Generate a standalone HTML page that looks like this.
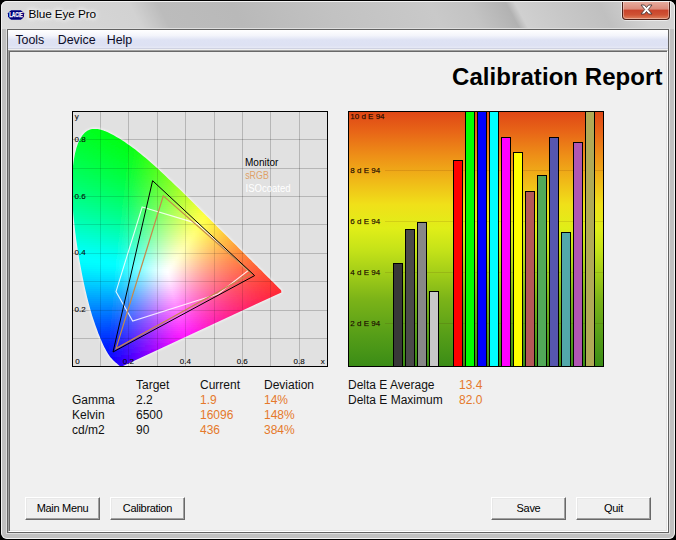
<!DOCTYPE html>
<html lang="en"><head><meta charset="utf-8"><title>Blue Eye Pro</title>
<style>
html,body{margin:0;padding:0;background:#000;}
body{width:676px;height:540px;position:relative;overflow:hidden;font-family:"Liberation Sans",sans-serif;}
.abs{position:absolute;}
#win{position:absolute;left:1px;top:1px;width:674px;height:538px;border-radius:6px;background:#c0c0c0;overflow:hidden;}
#org{position:absolute;left:-1px;top:-1px;width:676px;height:540px;}
#edge{position:absolute;left:1px;top:1px;width:672px;height:536px;border:1px solid #f2f2f2;border-radius:6px;}
#title{position:absolute;left:1px;top:1px;width:674px;height:28px;
 background:linear-gradient(62deg,#dcdcdc 0px,#d6d6d6 70px,#d2d2d2 125px,#bcbcbc 150px,#b9b9b9 215px,#c2c2c2 300px,#c9c9c9 390px,#c3c3c3 425px,#b2b2b2 458px,#d0d0d0 466px,#c8c8c8 500px,#c0c0c0 540px,#d2d2d2 575px,#d4d4d4 611px);}
#ttext{position:absolute;left:28.4px;top:7px;font-size:11.8px;letter-spacing:-.1px;color:#000;line-height:14px;white-space:nowrap;text-shadow:0 0 5px #fff,0 0 5px #fff,0 0 8px #fff;}
#icon{position:absolute;left:7px;top:9px;width:18px;height:12px;}
#close{position:absolute;left:622px;top:0;width:46px;height:19px;border:1px solid #4d2018;border-top:none;border-radius:0 0 4px 4px;
 background:linear-gradient(#e9b3a6 0,#db8b7b 48%,#c9432b 53%,#cf5234 78%,#de8260 100%);box-shadow:0 0 0 1px rgba(255,255,255,.55),inset 0 0 0 1px rgba(255,255,255,.35);}
#client{position:absolute;left:7px;top:29px;width:660px;height:502px;border:1px solid #626262;background:#f0f0f0;}
#fl{position:absolute;left:6px;top:28px;width:662px;height:504px;border:1px solid #dedede;}
#menu{position:absolute;left:0;top:0;width:660px;height:18px;background:linear-gradient(#ffffff 0,#f4f5fb 30%,#dfe3f4 55%,#dde1f3 85%,#e6e8f5 100%);border-bottom:1px solid #cfd2e2;}
#menu span{position:absolute;top:2.8px;font-size:12.4px;line-height:15px;color:#0c0c28;}
#sunk{position:absolute;left:0;top:20px;width:658px;height:480px;border:1px solid;border-color:#a0a0a0 #fff #fff #a0a0a0;box-shadow:inset 1px 1px 0 #696969,inset -1px -1px 0 #e3e3e3;}
h1{position:absolute;margin:0;right:13.5px;top:63px;font-size:24px;line-height:28px;font-weight:bold;color:#000;white-space:nowrap;letter-spacing:.06px;}
.t{position:absolute;font-size:12px;line-height:15px;color:#111;white-space:nowrap;}
.o{color:#e5792b;}
.btn{position:absolute;top:497px;width:71px;height:19px;border:1px solid;border-color:#fff #696969 #696969 #fff;box-shadow:inset -1px -1px 0 #a0a0a0,inset 1px 1px 0 #e8e8e8;background:#f0f0f0;font-size:11px;line-height:19px;text-align:center;color:#000;letter-spacing:-.3px;padding:1px;}
#gamut{position:absolute;left:72px;top:111px;}
#bars{position:absolute;left:348px;top:111px;}
</style></head><body>
<div id="win"><div id="org"><div id="title"></div><div id="fl"></div>
<svg id="icon" viewBox="0 0 18 12"><path d="M4.2 1.2h9.6l1.6 1.2 1.6 1.8v3.6l-1.6 1.8-1.6 1.2H4.2L2.6 9.6 1 7.800V4.2l1.600-1.800z" fill="#00007c"/><text x="9" y="8.100" text-anchor="middle" font-family="Liberation Sans, sans-serif" font-weight="bold" font-size="6.4" fill="#fff" stroke="#fff" stroke-width=".25" textLength="13.4" lengthAdjust="spacingAndGlyphs">LACIE</text></svg>
<div id="ttext">Blue Eye Pro</div>
<div id="close"><svg class="abs" style="left:17px;top:4px" width="13" height="11" viewBox="0 0 13 11"><path d="M1 1h3.400L6.500 3.500 8.600 1H12L8.300 5.500 12 10H8.600L6.500 7.500 4.400 10H1l3.700-4.500z" fill="#fff" stroke="#4a3a3a" stroke-width=".9" stroke-linejoin="round"/></svg></div>
<div id="client"><div id="menu"><span style="left:7.4px">Tools</span><span style="left:49.7px">Device</span><span style="left:98.7px">Help</span></div>
<div id="sunk"></div></div>
<div id="edge"></div></div></div>
<h1>Calibration Report</h1>
<svg id="gamut" width="256" height="256" viewBox="0 0 256 256">
<defs>
<linearGradient id="gb" gradientUnits="userSpaceOnUse" x1="0" y1="0" x2="256" y2="0"/>
<linearGradient id="g0" href="#gb"><stop offset="0.05859" stop-color="#01ff1f"/><stop offset="0.07422" stop-color="#01ff1d"/><stop offset="0.08984" stop-color="#01ff1b"/><stop offset="0.1055" stop-color="#01ff19"/><stop offset="0.1211" stop-color="#01ff17"/><stop offset="0.125" stop-color="#01ff16"/></linearGradient>
<linearGradient id="g1" href="#gb"><stop offset="0.04688" stop-color="#01ff23"/><stop offset="0.0625" stop-color="#01ff21"/><stop offset="0.07812" stop-color="#01ff1f"/><stop offset="0.09375" stop-color="#01ff1c"/><stop offset="0.1094" stop-color="#01ff1a"/><stop offset="0.125" stop-color="#01ff18"/><stop offset="0.1406" stop-color="#01ff16"/><stop offset="0.1445" stop-color="#01ff15"/></linearGradient>
<linearGradient id="g2" href="#gb"><stop offset="0.03516" stop-color="#01ff27"/><stop offset="0.05078" stop-color="#01ff25"/><stop offset="0.06641" stop-color="#01ff22"/><stop offset="0.08203" stop-color="#01ff20"/><stop offset="0.09766" stop-color="#01ff1e"/><stop offset="0.1133" stop-color="#01ff1c"/><stop offset="0.1289" stop-color="#01ff19"/><stop offset="0.1445" stop-color="#01ff17"/><stop offset="0.1602" stop-color="#01ff15"/><stop offset="0.1641" stop-color="#01ff14"/></linearGradient>
<linearGradient id="g3" href="#gb"><stop offset="0.03125" stop-color="#01ff29"/><stop offset="0.04688" stop-color="#01ff27"/><stop offset="0.0625" stop-color="#01ff25"/><stop offset="0.07812" stop-color="#01ff23"/><stop offset="0.09375" stop-color="#01ff20"/><stop offset="0.1094" stop-color="#01ff1e"/><stop offset="0.125" stop-color="#01ff1c"/><stop offset="0.1406" stop-color="#01ff19"/><stop offset="0.1562" stop-color="#01ff17"/><stop offset="0.1719" stop-color="#01ff15"/><stop offset="0.1758" stop-color="#01ff14"/></linearGradient>
<linearGradient id="g4" href="#gb"><stop offset="0.02734" stop-color="#01ff2c"/><stop offset="0.04297" stop-color="#01ff2a"/><stop offset="0.05859" stop-color="#01ff28"/><stop offset="0.07422" stop-color="#01ff25"/><stop offset="0.08984" stop-color="#01ff23"/><stop offset="0.1055" stop-color="#01ff21"/><stop offset="0.1211" stop-color="#01ff1e"/><stop offset="0.1367" stop-color="#01ff1c"/><stop offset="0.1523" stop-color="#01ff1a"/><stop offset="0.168" stop-color="#01ff17"/><stop offset="0.1836" stop-color="#01ff15"/><stop offset="0.1914" stop-color="#01ff14"/></linearGradient>
<linearGradient id="g5" href="#gb"><stop offset="0.02344" stop-color="#01ff2f"/><stop offset="0.03906" stop-color="#01ff2d"/><stop offset="0.05469" stop-color="#01ff2a"/><stop offset="0.07031" stop-color="#01ff28"/><stop offset="0.08594" stop-color="#01ff26"/><stop offset="0.1016" stop-color="#01ff23"/><stop offset="0.1172" stop-color="#01ff21"/><stop offset="0.1328" stop-color="#01ff1f"/><stop offset="0.1484" stop-color="#01ff1c"/><stop offset="0.1641" stop-color="#01ff1a"/><stop offset="0.1797" stop-color="#01ff18"/><stop offset="0.1953" stop-color="#01ff15"/><stop offset="0.2031" stop-color="#01ff14"/></linearGradient>
<linearGradient id="g6" href="#gb"><stop offset="0.01953" stop-color="#01ff32"/><stop offset="0.03516" stop-color="#01ff2f"/><stop offset="0.05078" stop-color="#01ff2d"/><stop offset="0.06641" stop-color="#01ff2b"/><stop offset="0.08203" stop-color="#01ff28"/><stop offset="0.09766" stop-color="#01ff26"/><stop offset="0.1133" stop-color="#01ff24"/><stop offset="0.1289" stop-color="#01ff21"/><stop offset="0.1445" stop-color="#01ff1f"/><stop offset="0.1602" stop-color="#01ff1d"/><stop offset="0.1758" stop-color="#01ff1a"/><stop offset="0.1914" stop-color="#01ff18"/><stop offset="0.207" stop-color="#01ff15"/><stop offset="0.2148" stop-color="#02ff14"/></linearGradient>
<linearGradient id="g7" href="#gb"><stop offset="0.01562" stop-color="#01ff35"/><stop offset="0.03125" stop-color="#01ff32"/><stop offset="0.04688" stop-color="#01ff30"/><stop offset="0.0625" stop-color="#01ff2e"/><stop offset="0.07812" stop-color="#01ff2b"/><stop offset="0.09375" stop-color="#01ff29"/><stop offset="0.1094" stop-color="#01ff26"/><stop offset="0.125" stop-color="#01ff24"/><stop offset="0.1406" stop-color="#01ff22"/><stop offset="0.1562" stop-color="#01ff1f"/><stop offset="0.1719" stop-color="#01ff1d"/><stop offset="0.1875" stop-color="#01ff1a"/><stop offset="0.2031" stop-color="#01ff18"/><stop offset="0.2188" stop-color="#04ff16"/><stop offset="0.2266" stop-color="#07ff14"/></linearGradient>
<linearGradient id="g8" href="#gb"><stop offset="0.01172" stop-color="#01ff37"/><stop offset="0.02734" stop-color="#01ff35"/><stop offset="0.04297" stop-color="#01ff33"/><stop offset="0.05859" stop-color="#01ff30"/><stop offset="0.07422" stop-color="#01ff2e"/><stop offset="0.08984" stop-color="#01ff2c"/><stop offset="0.1055" stop-color="#01ff29"/><stop offset="0.1211" stop-color="#01ff27"/><stop offset="0.1367" stop-color="#01ff24"/><stop offset="0.1523" stop-color="#01ff22"/><stop offset="0.168" stop-color="#01ff20"/><stop offset="0.1836" stop-color="#01ff1d"/><stop offset="0.1992" stop-color="#01ff1b"/><stop offset="0.2148" stop-color="#02ff18"/><stop offset="0.2305" stop-color="#09ff16"/><stop offset="0.2383" stop-color="#0dff14"/></linearGradient>
<linearGradient id="g9" href="#gb"><stop offset="0.01172" stop-color="#01ff3a"/><stop offset="0.02734" stop-color="#01ff37"/><stop offset="0.04297" stop-color="#01ff35"/><stop offset="0.05859" stop-color="#01ff33"/><stop offset="0.07422" stop-color="#01ff30"/><stop offset="0.08984" stop-color="#01ff2e"/><stop offset="0.1055" stop-color="#01ff2b"/><stop offset="0.1211" stop-color="#01ff29"/><stop offset="0.1367" stop-color="#01ff27"/><stop offset="0.1523" stop-color="#01ff24"/><stop offset="0.168" stop-color="#01ff22"/><stop offset="0.1836" stop-color="#01ff1f"/><stop offset="0.1992" stop-color="#01ff1d"/><stop offset="0.2148" stop-color="#03ff1a"/><stop offset="0.2305" stop-color="#0aff18"/><stop offset="0.2461" stop-color="#12ff15"/></linearGradient>
<linearGradient id="g10" href="#gb"><stop offset="0.007812" stop-color="#01ff3d"/><stop offset="0.02344" stop-color="#01ff3a"/><stop offset="0.03906" stop-color="#01ff38"/><stop offset="0.05469" stop-color="#01ff36"/><stop offset="0.07031" stop-color="#01ff33"/><stop offset="0.08594" stop-color="#01ff31"/><stop offset="0.1016" stop-color="#01ff2e"/><stop offset="0.1172" stop-color="#01ff2c"/><stop offset="0.1328" stop-color="#01ff29"/><stop offset="0.1484" stop-color="#01ff27"/><stop offset="0.1641" stop-color="#01ff25"/><stop offset="0.1797" stop-color="#01ff22"/><stop offset="0.1953" stop-color="#01ff20"/><stop offset="0.2109" stop-color="#01ff1d"/><stop offset="0.2266" stop-color="#08ff1a"/><stop offset="0.2422" stop-color="#10ff18"/><stop offset="0.2578" stop-color="#19ff15"/></linearGradient>
<linearGradient id="g11" href="#gb"><stop offset="0.007812" stop-color="#01ff3f"/><stop offset="0.02344" stop-color="#01ff3d"/><stop offset="0.03906" stop-color="#01ff3a"/><stop offset="0.05469" stop-color="#01ff38"/><stop offset="0.07031" stop-color="#01ff36"/><stop offset="0.08594" stop-color="#01ff33"/><stop offset="0.1016" stop-color="#01ff31"/><stop offset="0.1172" stop-color="#01ff2e"/><stop offset="0.1328" stop-color="#01ff2c"/><stop offset="0.1484" stop-color="#01ff29"/><stop offset="0.1641" stop-color="#01ff27"/><stop offset="0.1797" stop-color="#01ff24"/><stop offset="0.1953" stop-color="#01ff22"/><stop offset="0.2109" stop-color="#02ff1f"/><stop offset="0.2266" stop-color="#09ff1d"/><stop offset="0.2422" stop-color="#11ff1a"/><stop offset="0.2578" stop-color="#1aff18"/><stop offset="0.2695" stop-color="#21ff16"/></linearGradient>
<linearGradient id="g12" href="#gb"><stop offset="0.003906" stop-color="#01ff42"/><stop offset="0.01953" stop-color="#01ff40"/><stop offset="0.03516" stop-color="#01ff3e"/><stop offset="0.05078" stop-color="#01ff3b"/><stop offset="0.06641" stop-color="#01ff39"/><stop offset="0.08203" stop-color="#01ff36"/><stop offset="0.09766" stop-color="#01ff34"/><stop offset="0.1133" stop-color="#01ff31"/><stop offset="0.1289" stop-color="#01ff2f"/><stop offset="0.1445" stop-color="#01ff2c"/><stop offset="0.1602" stop-color="#01ff2a"/><stop offset="0.1758" stop-color="#01ff27"/><stop offset="0.1914" stop-color="#01ff25"/><stop offset="0.207" stop-color="#01ff22"/><stop offset="0.2227" stop-color="#07ff20"/><stop offset="0.2383" stop-color="#0fff1d"/><stop offset="0.2539" stop-color="#18ff1a"/><stop offset="0.2695" stop-color="#21ff18"/><stop offset="0.2773" stop-color="#26ff16"/></linearGradient>
<linearGradient id="g13" href="#gb"><stop offset="0.003906" stop-color="#01ff45"/><stop offset="0.01953" stop-color="#01ff42"/><stop offset="0.03516" stop-color="#01ff40"/><stop offset="0.05078" stop-color="#01ff3e"/><stop offset="0.06641" stop-color="#01ff3b"/><stop offset="0.08203" stop-color="#01ff39"/><stop offset="0.09766" stop-color="#01ff36"/><stop offset="0.1133" stop-color="#01ff34"/><stop offset="0.1289" stop-color="#01ff31"/><stop offset="0.1445" stop-color="#01ff2f"/><stop offset="0.1602" stop-color="#01ff2c"/><stop offset="0.1758" stop-color="#01ff2a"/><stop offset="0.1914" stop-color="#01ff27"/><stop offset="0.207" stop-color="#01ff24"/><stop offset="0.2227" stop-color="#08ff22"/><stop offset="0.2383" stop-color="#10ff1f"/><stop offset="0.2539" stop-color="#19ff1d"/><stop offset="0.2695" stop-color="#22ff1a"/><stop offset="0.2852" stop-color="#2cff17"/></linearGradient>
<linearGradient id="g14" href="#gb"><stop offset="0" stop-color="#01ff48"/><stop offset="0.01562" stop-color="#01ff46"/><stop offset="0.03125" stop-color="#01ff43"/><stop offset="0.04688" stop-color="#01ff41"/><stop offset="0.0625" stop-color="#01ff3e"/><stop offset="0.07812" stop-color="#01ff3c"/><stop offset="0.09375" stop-color="#01ff39"/><stop offset="0.1094" stop-color="#01ff37"/><stop offset="0.125" stop-color="#01ff34"/><stop offset="0.1406" stop-color="#01ff32"/><stop offset="0.1562" stop-color="#01ff2f"/><stop offset="0.1719" stop-color="#01ff2d"/><stop offset="0.1875" stop-color="#01ff2a"/><stop offset="0.2031" stop-color="#01ff27"/><stop offset="0.2188" stop-color="#06ff25"/><stop offset="0.2344" stop-color="#0eff22"/><stop offset="0.25" stop-color="#17ff20"/><stop offset="0.2656" stop-color="#21ff1d"/><stop offset="0.2812" stop-color="#2aff1a"/><stop offset="0.2969" stop-color="#34ff18"/></linearGradient>
<linearGradient id="g15" href="#gb"><stop offset="0" stop-color="#01ff4b"/><stop offset="0.01562" stop-color="#01ff48"/><stop offset="0.03125" stop-color="#01ff46"/><stop offset="0.04688" stop-color="#01ff43"/><stop offset="0.0625" stop-color="#01ff41"/><stop offset="0.07812" stop-color="#01ff3e"/><stop offset="0.09375" stop-color="#01ff3c"/><stop offset="0.1094" stop-color="#01ff39"/><stop offset="0.125" stop-color="#01ff37"/><stop offset="0.1406" stop-color="#01ff34"/><stop offset="0.1562" stop-color="#01ff32"/><stop offset="0.1719" stop-color="#01ff2f"/><stop offset="0.1875" stop-color="#01ff2c"/><stop offset="0.2031" stop-color="#01ff2a"/><stop offset="0.2188" stop-color="#07ff27"/><stop offset="0.2344" stop-color="#0fff25"/><stop offset="0.25" stop-color="#18ff22"/><stop offset="0.2656" stop-color="#22ff1f"/><stop offset="0.2812" stop-color="#2bff1c"/><stop offset="0.2969" stop-color="#35ff1a"/><stop offset="0.3047" stop-color="#3aff18"/></linearGradient>
<linearGradient id="g16" href="#gb"><stop offset="0" stop-color="#01ff4d"/><stop offset="0.01562" stop-color="#01ff4b"/><stop offset="0.03125" stop-color="#01ff49"/><stop offset="0.04688" stop-color="#01ff46"/><stop offset="0.0625" stop-color="#01ff44"/><stop offset="0.07812" stop-color="#01ff41"/><stop offset="0.09375" stop-color="#01ff3f"/><stop offset="0.1094" stop-color="#01ff3c"/><stop offset="0.125" stop-color="#01ff39"/><stop offset="0.1406" stop-color="#01ff37"/><stop offset="0.1562" stop-color="#01ff34"/><stop offset="0.1719" stop-color="#01ff32"/><stop offset="0.1875" stop-color="#01ff2f"/><stop offset="0.2031" stop-color="#01ff2c"/><stop offset="0.2188" stop-color="#07ff2a"/><stop offset="0.2344" stop-color="#10ff27"/><stop offset="0.25" stop-color="#19ff24"/><stop offset="0.2656" stop-color="#22ff22"/><stop offset="0.2812" stop-color="#2cff1f"/><stop offset="0.2969" stop-color="#36ff1c"/><stop offset="0.3125" stop-color="#40ff19"/></linearGradient>
<linearGradient id="g17" href="#gb"><stop offset="0" stop-color="#01ff50"/><stop offset="0.01562" stop-color="#01ff4e"/><stop offset="0.03125" stop-color="#01ff4b"/><stop offset="0.04688" stop-color="#01ff49"/><stop offset="0.0625" stop-color="#01ff46"/><stop offset="0.07812" stop-color="#01ff44"/><stop offset="0.09375" stop-color="#01ff41"/><stop offset="0.1094" stop-color="#01ff3f"/><stop offset="0.125" stop-color="#01ff3c"/><stop offset="0.1406" stop-color="#01ff39"/><stop offset="0.1562" stop-color="#01ff37"/><stop offset="0.1719" stop-color="#01ff34"/><stop offset="0.1875" stop-color="#01ff32"/><stop offset="0.2031" stop-color="#01ff2f"/><stop offset="0.2188" stop-color="#08ff2c"/><stop offset="0.2344" stop-color="#10ff29"/><stop offset="0.25" stop-color="#19ff27"/><stop offset="0.2656" stop-color="#23ff24"/><stop offset="0.2812" stop-color="#2dff21"/><stop offset="0.2969" stop-color="#37ff1e"/><stop offset="0.3125" stop-color="#41ff1c"/><stop offset="0.3242" stop-color="#49ff1a"/></linearGradient>
<linearGradient id="g18" href="#gb"><stop offset="0" stop-color="#01ff53"/><stop offset="0.01562" stop-color="#01ff50"/><stop offset="0.03125" stop-color="#01ff4e"/><stop offset="0.04688" stop-color="#01ff4c"/><stop offset="0.0625" stop-color="#01ff49"/><stop offset="0.07812" stop-color="#01ff46"/><stop offset="0.09375" stop-color="#01ff44"/><stop offset="0.1094" stop-color="#01ff41"/><stop offset="0.125" stop-color="#01ff3f"/><stop offset="0.1406" stop-color="#01ff3c"/><stop offset="0.1562" stop-color="#01ff3a"/><stop offset="0.1719" stop-color="#01ff37"/><stop offset="0.1875" stop-color="#01ff34"/><stop offset="0.2031" stop-color="#01ff31"/><stop offset="0.2188" stop-color="#08ff2f"/><stop offset="0.2344" stop-color="#11ff2c"/><stop offset="0.25" stop-color="#1aff29"/><stop offset="0.2656" stop-color="#24ff27"/><stop offset="0.2812" stop-color="#2eff24"/><stop offset="0.2969" stop-color="#38ff21"/><stop offset="0.3125" stop-color="#43ff1e"/><stop offset="0.3281" stop-color="#4dff1b"/><stop offset="0.332" stop-color="#50ff1b"/></linearGradient>
<linearGradient id="g19" href="#gb"><stop offset="0" stop-color="#01ff56"/><stop offset="0.01562" stop-color="#01ff53"/><stop offset="0.03125" stop-color="#01ff51"/><stop offset="0.04688" stop-color="#01ff4e"/><stop offset="0.0625" stop-color="#01ff4c"/><stop offset="0.07812" stop-color="#01ff49"/><stop offset="0.09375" stop-color="#01ff47"/><stop offset="0.1094" stop-color="#01ff44"/><stop offset="0.125" stop-color="#01ff42"/><stop offset="0.1406" stop-color="#01ff3f"/><stop offset="0.1562" stop-color="#01ff3c"/><stop offset="0.1719" stop-color="#01ff3a"/><stop offset="0.1875" stop-color="#01ff37"/><stop offset="0.2031" stop-color="#01ff34"/><stop offset="0.2188" stop-color="#08ff31"/><stop offset="0.2344" stop-color="#11ff2f"/><stop offset="0.25" stop-color="#1bff2c"/><stop offset="0.2656" stop-color="#25ff29"/><stop offset="0.2812" stop-color="#2fff26"/><stop offset="0.2969" stop-color="#39ff23"/><stop offset="0.3125" stop-color="#44ff21"/><stop offset="0.3281" stop-color="#4eff1e"/><stop offset="0.3398" stop-color="#56ff1c"/></linearGradient>
<linearGradient id="g20" href="#gb"><stop offset="0" stop-color="#01ff59"/><stop offset="0.01562" stop-color="#01ff56"/><stop offset="0.03125" stop-color="#01ff54"/><stop offset="0.04688" stop-color="#01ff51"/><stop offset="0.0625" stop-color="#01ff4f"/><stop offset="0.07812" stop-color="#01ff4c"/><stop offset="0.09375" stop-color="#01ff4a"/><stop offset="0.1094" stop-color="#01ff47"/><stop offset="0.125" stop-color="#01ff44"/><stop offset="0.1406" stop-color="#01ff42"/><stop offset="0.1562" stop-color="#01ff3f"/><stop offset="0.1719" stop-color="#01ff3c"/><stop offset="0.1875" stop-color="#01ff3a"/><stop offset="0.2031" stop-color="#01ff37"/><stop offset="0.2188" stop-color="#09ff34"/><stop offset="0.2344" stop-color="#12ff31"/><stop offset="0.25" stop-color="#1cff2f"/><stop offset="0.2656" stop-color="#26ff2c"/><stop offset="0.2812" stop-color="#30ff29"/><stop offset="0.2969" stop-color="#3bff26"/><stop offset="0.3125" stop-color="#45ff23"/><stop offset="0.3281" stop-color="#50ff20"/><stop offset="0.3438" stop-color="#5bff1d"/><stop offset="0.3477" stop-color="#5dff1d"/></linearGradient>
<linearGradient id="g21" href="#gb"><stop offset="0" stop-color="#01ff5c"/><stop offset="0.01562" stop-color="#01ff59"/><stop offset="0.03125" stop-color="#01ff57"/><stop offset="0.04688" stop-color="#01ff54"/><stop offset="0.0625" stop-color="#01ff52"/><stop offset="0.07812" stop-color="#01ff4f"/><stop offset="0.09375" stop-color="#01ff4c"/><stop offset="0.1094" stop-color="#01ff4a"/><stop offset="0.125" stop-color="#01ff47"/><stop offset="0.1406" stop-color="#01ff45"/><stop offset="0.1562" stop-color="#01ff42"/><stop offset="0.1719" stop-color="#01ff3f"/><stop offset="0.1875" stop-color="#01ff3c"/><stop offset="0.2031" stop-color="#02ff3a"/><stop offset="0.2188" stop-color="#09ff37"/><stop offset="0.2344" stop-color="#13ff34"/><stop offset="0.25" stop-color="#1dff31"/><stop offset="0.2656" stop-color="#27ff2e"/><stop offset="0.2812" stop-color="#31ff2c"/><stop offset="0.2969" stop-color="#3cff29"/><stop offset="0.3125" stop-color="#46ff26"/><stop offset="0.3281" stop-color="#51ff23"/><stop offset="0.3438" stop-color="#5cff20"/><stop offset="0.3555" stop-color="#64ff1e"/></linearGradient>
<linearGradient id="g22" href="#gb"><stop offset="0" stop-color="#01ff5f"/><stop offset="0.01562" stop-color="#01ff5c"/><stop offset="0.03125" stop-color="#01ff5a"/><stop offset="0.04688" stop-color="#01ff57"/><stop offset="0.0625" stop-color="#01ff55"/><stop offset="0.07812" stop-color="#01ff52"/><stop offset="0.09375" stop-color="#01ff4f"/><stop offset="0.1094" stop-color="#01ff4d"/><stop offset="0.125" stop-color="#01ff4a"/><stop offset="0.1406" stop-color="#01ff47"/><stop offset="0.1562" stop-color="#01ff45"/><stop offset="0.1719" stop-color="#01ff42"/><stop offset="0.1875" stop-color="#01ff3f"/><stop offset="0.2031" stop-color="#02ff3c"/><stop offset="0.2188" stop-color="#0aff3a"/><stop offset="0.2344" stop-color="#13ff37"/><stop offset="0.25" stop-color="#1dff34"/><stop offset="0.2656" stop-color="#28ff31"/><stop offset="0.2812" stop-color="#32ff2e"/><stop offset="0.2969" stop-color="#3dff2b"/><stop offset="0.3125" stop-color="#48ff28"/><stop offset="0.3281" stop-color="#53ff25"/><stop offset="0.3438" stop-color="#5eff23"/><stop offset="0.3594" stop-color="#69ff20"/><stop offset="0.3672" stop-color="#6eff1e"/></linearGradient>
<linearGradient id="g23" href="#gb"><stop offset="0" stop-color="#01ff62"/><stop offset="0.01562" stop-color="#01ff5f"/><stop offset="0.03125" stop-color="#01ff5d"/><stop offset="0.04688" stop-color="#01ff5a"/><stop offset="0.0625" stop-color="#01ff58"/><stop offset="0.07812" stop-color="#01ff55"/><stop offset="0.09375" stop-color="#01ff52"/><stop offset="0.1094" stop-color="#01ff50"/><stop offset="0.125" stop-color="#01ff4d"/><stop offset="0.1406" stop-color="#01ff4a"/><stop offset="0.1562" stop-color="#01ff48"/><stop offset="0.1719" stop-color="#01ff45"/><stop offset="0.1875" stop-color="#01ff42"/><stop offset="0.2031" stop-color="#02ff3f"/><stop offset="0.2188" stop-color="#0bff3d"/><stop offset="0.2344" stop-color="#14ff3a"/><stop offset="0.25" stop-color="#1eff37"/><stop offset="0.2656" stop-color="#29ff34"/><stop offset="0.2812" stop-color="#33ff31"/><stop offset="0.2969" stop-color="#3eff2e"/><stop offset="0.3125" stop-color="#49ff2b"/><stop offset="0.3281" stop-color="#54ff28"/><stop offset="0.3438" stop-color="#5fff25"/><stop offset="0.3594" stop-color="#6aff22"/><stop offset="0.375" stop-color="#75ff1f"/></linearGradient>
<linearGradient id="g24" href="#gb"><stop offset="0" stop-color="#01ff65"/><stop offset="0.01562" stop-color="#01ff62"/><stop offset="0.03125" stop-color="#01ff60"/><stop offset="0.04688" stop-color="#01ff5d"/><stop offset="0.0625" stop-color="#01ff5b"/><stop offset="0.07812" stop-color="#01ff58"/><stop offset="0.09375" stop-color="#01ff55"/><stop offset="0.1094" stop-color="#01ff53"/><stop offset="0.125" stop-color="#01ff50"/><stop offset="0.1406" stop-color="#01ff4d"/><stop offset="0.1562" stop-color="#01ff4b"/><stop offset="0.1719" stop-color="#01ff48"/><stop offset="0.1875" stop-color="#01ff45"/><stop offset="0.2031" stop-color="#03ff42"/><stop offset="0.2188" stop-color="#0bff40"/><stop offset="0.2344" stop-color="#15ff3d"/><stop offset="0.25" stop-color="#1fff3a"/><stop offset="0.2656" stop-color="#2aff37"/><stop offset="0.2812" stop-color="#34ff34"/><stop offset="0.2969" stop-color="#3fff31"/><stop offset="0.3125" stop-color="#4bff2e"/><stop offset="0.3281" stop-color="#56ff2b"/><stop offset="0.3438" stop-color="#61ff28"/><stop offset="0.3594" stop-color="#6cff25"/><stop offset="0.375" stop-color="#77ff22"/><stop offset="0.3828" stop-color="#7dff20"/></linearGradient>
<linearGradient id="g25" href="#gb"><stop offset="0" stop-color="#01ff68"/><stop offset="0.01562" stop-color="#01ff65"/><stop offset="0.03125" stop-color="#01ff63"/><stop offset="0.04688" stop-color="#01ff60"/><stop offset="0.0625" stop-color="#01ff5e"/><stop offset="0.07812" stop-color="#01ff5b"/><stop offset="0.09375" stop-color="#01ff59"/><stop offset="0.1094" stop-color="#01ff56"/><stop offset="0.125" stop-color="#01ff53"/><stop offset="0.1406" stop-color="#01ff51"/><stop offset="0.1562" stop-color="#01ff4e"/><stop offset="0.1719" stop-color="#01ff4b"/><stop offset="0.1875" stop-color="#01ff48"/><stop offset="0.2031" stop-color="#03ff45"/><stop offset="0.2188" stop-color="#0cff43"/><stop offset="0.2344" stop-color="#16ff40"/><stop offset="0.25" stop-color="#20ff3d"/><stop offset="0.2656" stop-color="#2bff3a"/><stop offset="0.2812" stop-color="#36ff37"/><stop offset="0.2969" stop-color="#41ff34"/><stop offset="0.3125" stop-color="#4cff31"/><stop offset="0.3281" stop-color="#57ff2e"/><stop offset="0.3438" stop-color="#63ff2b"/><stop offset="0.3594" stop-color="#6eff28"/><stop offset="0.375" stop-color="#79ff25"/><stop offset="0.3906" stop-color="#84ff21"/></linearGradient>
<linearGradient id="g26" href="#gb"><stop offset="0" stop-color="#01ff6b"/><stop offset="0.01562" stop-color="#01ff69"/><stop offset="0.03125" stop-color="#01ff66"/><stop offset="0.04688" stop-color="#01ff64"/><stop offset="0.0625" stop-color="#01ff61"/><stop offset="0.07812" stop-color="#01ff5e"/><stop offset="0.09375" stop-color="#01ff5c"/><stop offset="0.1094" stop-color="#01ff59"/><stop offset="0.125" stop-color="#01ff56"/><stop offset="0.1406" stop-color="#01ff54"/><stop offset="0.1562" stop-color="#01ff51"/><stop offset="0.1719" stop-color="#01ff4e"/><stop offset="0.1875" stop-color="#01ff4b"/><stop offset="0.2031" stop-color="#03ff49"/><stop offset="0.2188" stop-color="#0cff46"/><stop offset="0.2344" stop-color="#16ff43"/><stop offset="0.25" stop-color="#21ff40"/><stop offset="0.2656" stop-color="#2cff3d"/><stop offset="0.2812" stop-color="#37ff3a"/><stop offset="0.2969" stop-color="#42ff37"/><stop offset="0.3125" stop-color="#4dff34"/><stop offset="0.3281" stop-color="#59ff31"/><stop offset="0.3438" stop-color="#64ff2e"/><stop offset="0.3594" stop-color="#70ff2b"/><stop offset="0.375" stop-color="#7bff27"/><stop offset="0.3906" stop-color="#86ff24"/><stop offset="0.3984" stop-color="#8cff23"/></linearGradient>
<linearGradient id="g27" href="#gb"><stop offset="0" stop-color="#01ff6e"/><stop offset="0.01562" stop-color="#01ff6c"/><stop offset="0.03125" stop-color="#01ff69"/><stop offset="0.04688" stop-color="#01ff67"/><stop offset="0.0625" stop-color="#01ff64"/><stop offset="0.07812" stop-color="#01ff62"/><stop offset="0.09375" stop-color="#01ff5f"/><stop offset="0.1094" stop-color="#01ff5c"/><stop offset="0.125" stop-color="#01ff5a"/><stop offset="0.1406" stop-color="#01ff57"/><stop offset="0.1562" stop-color="#01ff54"/><stop offset="0.1719" stop-color="#01ff51"/><stop offset="0.1875" stop-color="#01ff4f"/><stop offset="0.2031" stop-color="#04ff4c"/><stop offset="0.2188" stop-color="#0dff49"/><stop offset="0.2344" stop-color="#17ff46"/><stop offset="0.25" stop-color="#22ff43"/><stop offset="0.2656" stop-color="#2dff40"/><stop offset="0.2812" stop-color="#38ff3d"/><stop offset="0.2969" stop-color="#43ff3a"/><stop offset="0.3125" stop-color="#4fff37"/><stop offset="0.3281" stop-color="#5aff34"/><stop offset="0.3438" stop-color="#66ff31"/><stop offset="0.3594" stop-color="#72ff2e"/><stop offset="0.375" stop-color="#7dff2a"/><stop offset="0.3906" stop-color="#88ff27"/><stop offset="0.4062" stop-color="#94ff24"/></linearGradient>
<linearGradient id="g28" href="#gb"><stop offset="0" stop-color="#01ff72"/><stop offset="0.01562" stop-color="#01ff6f"/><stop offset="0.03125" stop-color="#01ff6d"/><stop offset="0.04688" stop-color="#01ff6a"/><stop offset="0.0625" stop-color="#01ff68"/><stop offset="0.07812" stop-color="#01ff65"/><stop offset="0.09375" stop-color="#01ff62"/><stop offset="0.1094" stop-color="#01ff60"/><stop offset="0.125" stop-color="#01ff5d"/><stop offset="0.1406" stop-color="#01ff5a"/><stop offset="0.1562" stop-color="#01ff57"/><stop offset="0.1719" stop-color="#01ff55"/><stop offset="0.1875" stop-color="#01ff52"/><stop offset="0.2031" stop-color="#04ff4f"/><stop offset="0.2188" stop-color="#0eff4c"/><stop offset="0.2344" stop-color="#18ff49"/><stop offset="0.25" stop-color="#23ff46"/><stop offset="0.2656" stop-color="#2eff43"/><stop offset="0.2812" stop-color="#39ff40"/><stop offset="0.2969" stop-color="#45ff3d"/><stop offset="0.3125" stop-color="#50ff3a"/><stop offset="0.3281" stop-color="#5cff37"/><stop offset="0.3438" stop-color="#68ff34"/><stop offset="0.3594" stop-color="#73ff31"/><stop offset="0.375" stop-color="#7fff2d"/><stop offset="0.3906" stop-color="#8aff2a"/><stop offset="0.4062" stop-color="#96ff27"/><stop offset="0.4141" stop-color="#9bff25"/></linearGradient>
<linearGradient id="g29" href="#gb"><stop offset="0" stop-color="#01ff75"/><stop offset="0.01562" stop-color="#01ff73"/><stop offset="0.03125" stop-color="#01ff70"/><stop offset="0.04688" stop-color="#01ff6d"/><stop offset="0.0625" stop-color="#01ff6b"/><stop offset="0.07812" stop-color="#01ff68"/><stop offset="0.09375" stop-color="#01ff66"/><stop offset="0.1094" stop-color="#01ff63"/><stop offset="0.125" stop-color="#01ff60"/><stop offset="0.1406" stop-color="#01ff5e"/><stop offset="0.1562" stop-color="#01ff5b"/><stop offset="0.1719" stop-color="#01ff58"/><stop offset="0.1875" stop-color="#01ff55"/><stop offset="0.2031" stop-color="#05ff52"/><stop offset="0.2188" stop-color="#0eff4f"/><stop offset="0.2344" stop-color="#19ff4c"/><stop offset="0.25" stop-color="#24ff49"/><stop offset="0.2656" stop-color="#2fff46"/><stop offset="0.2812" stop-color="#3bff43"/><stop offset="0.2969" stop-color="#46ff40"/><stop offset="0.3125" stop-color="#52ff3d"/><stop offset="0.3281" stop-color="#5eff3a"/><stop offset="0.3438" stop-color="#6aff37"/><stop offset="0.3594" stop-color="#75ff34"/><stop offset="0.375" stop-color="#81ff30"/><stop offset="0.3906" stop-color="#8dff2d"/><stop offset="0.4062" stop-color="#98ff2a"/><stop offset="0.4219" stop-color="#a3ff27"/></linearGradient>
<linearGradient id="g30" href="#gb"><stop offset="0" stop-color="#01ff78"/><stop offset="0.01562" stop-color="#01ff76"/><stop offset="0.03125" stop-color="#01ff73"/><stop offset="0.04688" stop-color="#01ff71"/><stop offset="0.0625" stop-color="#01ff6e"/><stop offset="0.07812" stop-color="#01ff6c"/><stop offset="0.09375" stop-color="#01ff69"/><stop offset="0.1094" stop-color="#01ff66"/><stop offset="0.125" stop-color="#01ff64"/><stop offset="0.1406" stop-color="#01ff61"/><stop offset="0.1562" stop-color="#01ff5e"/><stop offset="0.1719" stop-color="#01ff5b"/><stop offset="0.1875" stop-color="#01ff58"/><stop offset="0.2031" stop-color="#05ff56"/><stop offset="0.2188" stop-color="#0fff53"/><stop offset="0.2344" stop-color="#19ff50"/><stop offset="0.25" stop-color="#25ff4d"/><stop offset="0.2656" stop-color="#30ff4a"/><stop offset="0.2812" stop-color="#3cff47"/><stop offset="0.2969" stop-color="#48ff44"/><stop offset="0.3125" stop-color="#54ff40"/><stop offset="0.3281" stop-color="#60ff3d"/><stop offset="0.3438" stop-color="#6bff3a"/><stop offset="0.3594" stop-color="#77ff37"/><stop offset="0.375" stop-color="#83ff34"/><stop offset="0.3906" stop-color="#8fff30"/><stop offset="0.4062" stop-color="#9aff2d"/><stop offset="0.4219" stop-color="#a6ff2a"/><stop offset="0.4297" stop-color="#abff28"/></linearGradient>
<linearGradient id="g31" href="#gb"><stop offset="0" stop-color="#01ff7c"/><stop offset="0.01562" stop-color="#01ff79"/><stop offset="0.03125" stop-color="#01ff77"/><stop offset="0.04688" stop-color="#01ff74"/><stop offset="0.0625" stop-color="#01ff72"/><stop offset="0.07812" stop-color="#01ff6f"/><stop offset="0.09375" stop-color="#01ff6d"/><stop offset="0.1094" stop-color="#01ff6a"/><stop offset="0.125" stop-color="#01ff67"/><stop offset="0.1406" stop-color="#01ff64"/><stop offset="0.1562" stop-color="#01ff62"/><stop offset="0.1719" stop-color="#01ff5f"/><stop offset="0.1875" stop-color="#01ff5c"/><stop offset="0.2031" stop-color="#06ff59"/><stop offset="0.2188" stop-color="#10ff56"/><stop offset="0.2344" stop-color="#1aff53"/><stop offset="0.25" stop-color="#26ff50"/><stop offset="0.2656" stop-color="#31ff4d"/><stop offset="0.2812" stop-color="#3dff4a"/><stop offset="0.2969" stop-color="#49ff47"/><stop offset="0.3125" stop-color="#55ff44"/><stop offset="0.3281" stop-color="#61ff41"/><stop offset="0.3438" stop-color="#6dff3d"/><stop offset="0.3594" stop-color="#79ff3a"/><stop offset="0.375" stop-color="#85ff37"/><stop offset="0.3906" stop-color="#91ff34"/><stop offset="0.4062" stop-color="#9dff30"/><stop offset="0.4219" stop-color="#a8ff2d"/><stop offset="0.4375" stop-color="#b3ff29"/></linearGradient>
<linearGradient id="g32" href="#gb"><stop offset="0" stop-color="#01ff7f"/><stop offset="0.01562" stop-color="#01ff7d"/><stop offset="0.03125" stop-color="#01ff7b"/><stop offset="0.04688" stop-color="#01ff78"/><stop offset="0.0625" stop-color="#01ff75"/><stop offset="0.07812" stop-color="#01ff73"/><stop offset="0.09375" stop-color="#01ff70"/><stop offset="0.1094" stop-color="#01ff6d"/><stop offset="0.125" stop-color="#01ff6b"/><stop offset="0.1406" stop-color="#01ff68"/><stop offset="0.1562" stop-color="#01ff65"/><stop offset="0.1719" stop-color="#01ff62"/><stop offset="0.1875" stop-color="#01ff60"/><stop offset="0.2031" stop-color="#06ff5d"/><stop offset="0.2188" stop-color="#10ff5a"/><stop offset="0.2344" stop-color="#1bff57"/><stop offset="0.25" stop-color="#27ff54"/><stop offset="0.2656" stop-color="#32ff51"/><stop offset="0.2812" stop-color="#3eff4e"/><stop offset="0.2969" stop-color="#4bff4a"/><stop offset="0.3125" stop-color="#57ff47"/><stop offset="0.3281" stop-color="#63ff44"/><stop offset="0.3438" stop-color="#6fff41"/><stop offset="0.3594" stop-color="#7bff3e"/><stop offset="0.375" stop-color="#88ff3a"/><stop offset="0.3906" stop-color="#93ff37"/><stop offset="0.4062" stop-color="#9fff33"/><stop offset="0.4219" stop-color="#abff30"/><stop offset="0.4375" stop-color="#b6ff2d"/><stop offset="0.4453" stop-color="#bbff2b"/></linearGradient>
<linearGradient id="g33" href="#gb"><stop offset="0" stop-color="#01ff83"/><stop offset="0.01562" stop-color="#01ff81"/><stop offset="0.03125" stop-color="#01ff7e"/><stop offset="0.04688" stop-color="#01ff7c"/><stop offset="0.0625" stop-color="#01ff79"/><stop offset="0.07812" stop-color="#01ff76"/><stop offset="0.09375" stop-color="#01ff74"/><stop offset="0.1094" stop-color="#01ff71"/><stop offset="0.125" stop-color="#01ff6e"/><stop offset="0.1406" stop-color="#01ff6c"/><stop offset="0.1562" stop-color="#01ff69"/><stop offset="0.1719" stop-color="#01ff66"/><stop offset="0.1875" stop-color="#01ff63"/><stop offset="0.2031" stop-color="#07ff60"/><stop offset="0.2188" stop-color="#11ff5d"/><stop offset="0.2344" stop-color="#1cff5a"/><stop offset="0.25" stop-color="#28ff57"/><stop offset="0.2656" stop-color="#34ff54"/><stop offset="0.2812" stop-color="#40ff51"/><stop offset="0.2969" stop-color="#4cff4e"/><stop offset="0.3125" stop-color="#59ff4b"/><stop offset="0.3281" stop-color="#65ff48"/><stop offset="0.3438" stop-color="#71ff44"/><stop offset="0.3594" stop-color="#7eff41"/><stop offset="0.375" stop-color="#8aff3e"/><stop offset="0.3906" stop-color="#96ff3a"/><stop offset="0.4062" stop-color="#a2ff37"/><stop offset="0.4219" stop-color="#adff33"/><stop offset="0.4375" stop-color="#b8ff30"/><stop offset="0.4531" stop-color="#c3ff2c"/></linearGradient>
<linearGradient id="g34" href="#gb"><stop offset="0" stop-color="#01ff87"/><stop offset="0.01562" stop-color="#01ff84"/><stop offset="0.03125" stop-color="#01ff82"/><stop offset="0.04688" stop-color="#01ff7f"/><stop offset="0.0625" stop-color="#01ff7d"/><stop offset="0.07812" stop-color="#01ff7a"/><stop offset="0.09375" stop-color="#01ff77"/><stop offset="0.1094" stop-color="#01ff75"/><stop offset="0.125" stop-color="#01ff72"/><stop offset="0.1406" stop-color="#01ff6f"/><stop offset="0.1562" stop-color="#01ff6d"/><stop offset="0.1719" stop-color="#01ff6a"/><stop offset="0.1875" stop-color="#01ff67"/><stop offset="0.2031" stop-color="#07ff64"/><stop offset="0.2188" stop-color="#12ff61"/><stop offset="0.2344" stop-color="#1dff5e"/><stop offset="0.25" stop-color="#29ff5b"/><stop offset="0.2656" stop-color="#35ff58"/><stop offset="0.2812" stop-color="#41ff55"/><stop offset="0.2969" stop-color="#4eff52"/><stop offset="0.3125" stop-color="#5aff4e"/><stop offset="0.3281" stop-color="#67ff4b"/><stop offset="0.3438" stop-color="#73ff48"/><stop offset="0.3594" stop-color="#80ff45"/><stop offset="0.375" stop-color="#8cff41"/><stop offset="0.3906" stop-color="#98ff3e"/><stop offset="0.4062" stop-color="#a4ff3a"/><stop offset="0.4219" stop-color="#b0ff37"/><stop offset="0.4375" stop-color="#bbff33"/><stop offset="0.4531" stop-color="#c6ff30"/><stop offset="0.4609" stop-color="#cbff2e"/></linearGradient>
<linearGradient id="g35" href="#gb"><stop offset="0" stop-color="#01ff8b"/><stop offset="0.01562" stop-color="#01ff88"/><stop offset="0.03125" stop-color="#01ff86"/><stop offset="0.04688" stop-color="#01ff83"/><stop offset="0.0625" stop-color="#01ff80"/><stop offset="0.07812" stop-color="#01ff7e"/><stop offset="0.09375" stop-color="#01ff7b"/><stop offset="0.1094" stop-color="#01ff79"/><stop offset="0.125" stop-color="#01ff76"/><stop offset="0.1406" stop-color="#01ff73"/><stop offset="0.1562" stop-color="#01ff70"/><stop offset="0.1719" stop-color="#01ff6d"/><stop offset="0.1875" stop-color="#01ff6b"/><stop offset="0.2031" stop-color="#08ff68"/><stop offset="0.2188" stop-color="#12ff65"/><stop offset="0.2344" stop-color="#1eff62"/><stop offset="0.25" stop-color="#2aff5f"/><stop offset="0.2656" stop-color="#36ff5c"/><stop offset="0.2812" stop-color="#43ff58"/><stop offset="0.2969" stop-color="#4fff55"/><stop offset="0.3125" stop-color="#5cff52"/><stop offset="0.3281" stop-color="#69ff4f"/><stop offset="0.3438" stop-color="#75ff4b"/><stop offset="0.3594" stop-color="#82ff48"/><stop offset="0.375" stop-color="#8eff45"/><stop offset="0.3906" stop-color="#9bff41"/><stop offset="0.4062" stop-color="#a7ff3e"/><stop offset="0.4219" stop-color="#b2ff3a"/><stop offset="0.4375" stop-color="#beff37"/><stop offset="0.4531" stop-color="#c8ff33"/><stop offset="0.4688" stop-color="#d3ff30"/></linearGradient>
<linearGradient id="g36" href="#gb"><stop offset="0" stop-color="#01ff8e"/><stop offset="0.01562" stop-color="#01ff8c"/><stop offset="0.03125" stop-color="#01ff89"/><stop offset="0.04688" stop-color="#01ff87"/><stop offset="0.0625" stop-color="#01ff84"/><stop offset="0.07812" stop-color="#01ff82"/><stop offset="0.09375" stop-color="#01ff7f"/><stop offset="0.1094" stop-color="#01ff7c"/><stop offset="0.125" stop-color="#01ff7a"/><stop offset="0.1406" stop-color="#01ff77"/><stop offset="0.1562" stop-color="#01ff74"/><stop offset="0.1719" stop-color="#01ff71"/><stop offset="0.1875" stop-color="#01ff6e"/><stop offset="0.2031" stop-color="#08ff6b"/><stop offset="0.2188" stop-color="#13ff69"/><stop offset="0.2344" stop-color="#1fff66"/><stop offset="0.25" stop-color="#2bff62"/><stop offset="0.2656" stop-color="#38ff5f"/><stop offset="0.2812" stop-color="#44ff5c"/><stop offset="0.2969" stop-color="#51ff59"/><stop offset="0.3125" stop-color="#5eff56"/><stop offset="0.3281" stop-color="#6bff53"/><stop offset="0.3438" stop-color="#78ff4f"/><stop offset="0.3594" stop-color="#84ff4c"/><stop offset="0.375" stop-color="#91ff48"/><stop offset="0.3906" stop-color="#9dff45"/><stop offset="0.4062" stop-color="#a9ff42"/><stop offset="0.4219" stop-color="#b5ff3e"/><stop offset="0.4375" stop-color="#c0ff3a"/><stop offset="0.4531" stop-color="#cbff37"/><stop offset="0.4688" stop-color="#d6ff33"/><stop offset="0.4805" stop-color="#ddff30"/></linearGradient>
<linearGradient id="g37" href="#gb"><stop offset="0" stop-color="#01ff92"/><stop offset="0.01562" stop-color="#01ff90"/><stop offset="0.03125" stop-color="#01ff8d"/><stop offset="0.04688" stop-color="#01ff8b"/><stop offset="0.0625" stop-color="#01ff88"/><stop offset="0.07812" stop-color="#01ff86"/><stop offset="0.09375" stop-color="#01ff83"/><stop offset="0.1094" stop-color="#01ff80"/><stop offset="0.125" stop-color="#01ff7e"/><stop offset="0.1406" stop-color="#01ff7b"/><stop offset="0.1562" stop-color="#01ff78"/><stop offset="0.1719" stop-color="#01ff75"/><stop offset="0.1875" stop-color="#01ff72"/><stop offset="0.2031" stop-color="#09ff6f"/><stop offset="0.2188" stop-color="#14ff6c"/><stop offset="0.2344" stop-color="#20ff69"/><stop offset="0.25" stop-color="#2cff66"/><stop offset="0.2656" stop-color="#39ff63"/><stop offset="0.2812" stop-color="#46ff60"/><stop offset="0.2969" stop-color="#53ff5d"/><stop offset="0.3125" stop-color="#60ff5a"/><stop offset="0.3281" stop-color="#6dff56"/><stop offset="0.3438" stop-color="#7aff53"/><stop offset="0.3594" stop-color="#87ff50"/><stop offset="0.375" stop-color="#93ff4c"/><stop offset="0.3906" stop-color="#a0ff49"/><stop offset="0.4062" stop-color="#acff45"/><stop offset="0.4219" stop-color="#b8ff42"/><stop offset="0.4375" stop-color="#c3ff3e"/><stop offset="0.4531" stop-color="#ceff3b"/><stop offset="0.4688" stop-color="#d8ff37"/><stop offset="0.4844" stop-color="#e2ff33"/><stop offset="0.4883" stop-color="#e4ff32"/></linearGradient>
<linearGradient id="g38" href="#gb"><stop offset="0" stop-color="#01ff96"/><stop offset="0.01562" stop-color="#01ff94"/><stop offset="0.03125" stop-color="#01ff91"/><stop offset="0.04688" stop-color="#01ff8f"/><stop offset="0.0625" stop-color="#01ff8c"/><stop offset="0.07812" stop-color="#01ff8a"/><stop offset="0.09375" stop-color="#01ff87"/><stop offset="0.1094" stop-color="#01ff84"/><stop offset="0.125" stop-color="#01ff82"/><stop offset="0.1406" stop-color="#01ff7f"/><stop offset="0.1562" stop-color="#01ff7c"/><stop offset="0.1719" stop-color="#01ff79"/><stop offset="0.1875" stop-color="#01ff76"/><stop offset="0.2031" stop-color="#0aff73"/><stop offset="0.2188" stop-color="#15ff70"/><stop offset="0.2344" stop-color="#21ff6d"/><stop offset="0.25" stop-color="#2eff6a"/><stop offset="0.2656" stop-color="#3aff67"/><stop offset="0.2812" stop-color="#47ff64"/><stop offset="0.2969" stop-color="#55ff61"/><stop offset="0.3125" stop-color="#62ff5e"/><stop offset="0.3281" stop-color="#6fff5a"/><stop offset="0.3438" stop-color="#7cff57"/><stop offset="0.3594" stop-color="#89ff54"/><stop offset="0.375" stop-color="#96ff50"/><stop offset="0.3906" stop-color="#a2ff4d"/><stop offset="0.4062" stop-color="#afff49"/><stop offset="0.4219" stop-color="#baff46"/><stop offset="0.4375" stop-color="#c6ff42"/><stop offset="0.4531" stop-color="#d1ff3e"/><stop offset="0.4688" stop-color="#dbff3b"/><stop offset="0.4844" stop-color="#e5ff37"/><stop offset="0.4961" stop-color="#ebff34"/></linearGradient>
<linearGradient id="g39" href="#gb"><stop offset="0" stop-color="#01ff9a"/><stop offset="0.01562" stop-color="#01ff98"/><stop offset="0.03125" stop-color="#01ff95"/><stop offset="0.04688" stop-color="#01ff93"/><stop offset="0.0625" stop-color="#01ff90"/><stop offset="0.07812" stop-color="#01ff8e"/><stop offset="0.09375" stop-color="#01ff8b"/><stop offset="0.1094" stop-color="#01ff88"/><stop offset="0.125" stop-color="#01ff86"/><stop offset="0.1406" stop-color="#01ff83"/><stop offset="0.1562" stop-color="#01ff80"/><stop offset="0.1719" stop-color="#01ff7d"/><stop offset="0.1875" stop-color="#01ff7a"/><stop offset="0.2031" stop-color="#0aff78"/><stop offset="0.2188" stop-color="#16ff75"/><stop offset="0.2344" stop-color="#22ff72"/><stop offset="0.25" stop-color="#2fff6e"/><stop offset="0.2656" stop-color="#3cff6b"/><stop offset="0.2812" stop-color="#49ff68"/><stop offset="0.2969" stop-color="#56ff65"/><stop offset="0.3125" stop-color="#64ff62"/><stop offset="0.3281" stop-color="#71ff5e"/><stop offset="0.3438" stop-color="#7eff5b"/><stop offset="0.3594" stop-color="#8bff58"/><stop offset="0.375" stop-color="#98ff54"/><stop offset="0.3906" stop-color="#a5ff51"/><stop offset="0.4062" stop-color="#b1ff4d"/><stop offset="0.4219" stop-color="#bdff4a"/><stop offset="0.4375" stop-color="#c9ff46"/><stop offset="0.4531" stop-color="#d4ff42"/><stop offset="0.4688" stop-color="#deff3f"/><stop offset="0.4844" stop-color="#e7ff3b"/><stop offset="0.5" stop-color="#f0ff37"/><stop offset="0.5039" stop-color="#f2ff36"/></linearGradient>
<linearGradient id="g40" href="#gb"><stop offset="0" stop-color="#01ff9e"/><stop offset="0.01562" stop-color="#01ff9c"/><stop offset="0.03125" stop-color="#01ff99"/><stop offset="0.04688" stop-color="#01ff97"/><stop offset="0.0625" stop-color="#01ff94"/><stop offset="0.07812" stop-color="#01ff92"/><stop offset="0.09375" stop-color="#01ff8f"/><stop offset="0.1094" stop-color="#01ff8c"/><stop offset="0.125" stop-color="#01ff8a"/><stop offset="0.1406" stop-color="#01ff87"/><stop offset="0.1562" stop-color="#01ff84"/><stop offset="0.1719" stop-color="#01ff81"/><stop offset="0.1875" stop-color="#01ff7f"/><stop offset="0.2031" stop-color="#0bff7c"/><stop offset="0.2188" stop-color="#17ff79"/><stop offset="0.2344" stop-color="#23ff76"/><stop offset="0.25" stop-color="#30ff73"/><stop offset="0.2656" stop-color="#3dff70"/><stop offset="0.2812" stop-color="#4bff6c"/><stop offset="0.2969" stop-color="#58ff69"/><stop offset="0.3125" stop-color="#66ff66"/><stop offset="0.3281" stop-color="#73ff63"/><stop offset="0.3438" stop-color="#81ff5f"/><stop offset="0.3594" stop-color="#8eff5c"/><stop offset="0.375" stop-color="#9bff58"/><stop offset="0.3906" stop-color="#a8ff55"/><stop offset="0.4062" stop-color="#b4ff51"/><stop offset="0.4219" stop-color="#c0ff4e"/><stop offset="0.4375" stop-color="#ccff4a"/><stop offset="0.4531" stop-color="#d6ff46"/><stop offset="0.4688" stop-color="#e1ff42"/><stop offset="0.4844" stop-color="#eaff3f"/><stop offset="0.5" stop-color="#f2ff3b"/><stop offset="0.5117" stop-color="#f7ff38"/></linearGradient>
<linearGradient id="g41" href="#gb"><stop offset="0" stop-color="#01ffa2"/><stop offset="0.01562" stop-color="#01ffa0"/><stop offset="0.03125" stop-color="#01ff9d"/><stop offset="0.04688" stop-color="#01ff9b"/><stop offset="0.0625" stop-color="#01ff98"/><stop offset="0.07812" stop-color="#01ff96"/><stop offset="0.09375" stop-color="#01ff93"/><stop offset="0.1094" stop-color="#01ff91"/><stop offset="0.125" stop-color="#01ff8e"/><stop offset="0.1406" stop-color="#01ff8b"/><stop offset="0.1562" stop-color="#01ff89"/><stop offset="0.1719" stop-color="#01ff86"/><stop offset="0.1875" stop-color="#01ff83"/><stop offset="0.2031" stop-color="#0cff80"/><stop offset="0.2188" stop-color="#18ff7d"/><stop offset="0.2344" stop-color="#24ff7a"/><stop offset="0.25" stop-color="#31ff77"/><stop offset="0.2656" stop-color="#3fff74"/><stop offset="0.2812" stop-color="#4cff71"/><stop offset="0.2969" stop-color="#5aff6d"/><stop offset="0.3125" stop-color="#68ff6a"/><stop offset="0.3281" stop-color="#76ff67"/><stop offset="0.3438" stop-color="#83ff63"/><stop offset="0.3594" stop-color="#90ff60"/><stop offset="0.375" stop-color="#9eff5d"/><stop offset="0.3906" stop-color="#aaff59"/><stop offset="0.4062" stop-color="#b7ff55"/><stop offset="0.4219" stop-color="#c3ff52"/><stop offset="0.4375" stop-color="#ceff4e"/><stop offset="0.4531" stop-color="#d9ff4a"/><stop offset="0.4688" stop-color="#e3ff47"/><stop offset="0.4844" stop-color="#ecff43"/><stop offset="0.5" stop-color="#f4ff3f"/><stop offset="0.5156" stop-color="#fbff3b"/><stop offset="0.5195" stop-color="#fcff3a"/></linearGradient>
<linearGradient id="g42" href="#gb"><stop offset="0" stop-color="#01ffa6"/><stop offset="0.01562" stop-color="#01ffa4"/><stop offset="0.03125" stop-color="#01ffa2"/><stop offset="0.04688" stop-color="#01ff9f"/><stop offset="0.0625" stop-color="#01ff9d"/><stop offset="0.07812" stop-color="#01ff9a"/><stop offset="0.09375" stop-color="#01ff98"/><stop offset="0.1094" stop-color="#01ff95"/><stop offset="0.125" stop-color="#01ff92"/><stop offset="0.1406" stop-color="#01ff90"/><stop offset="0.1562" stop-color="#01ff8d"/><stop offset="0.1719" stop-color="#01ff8a"/><stop offset="0.1875" stop-color="#02ff87"/><stop offset="0.2031" stop-color="#0cff84"/><stop offset="0.2188" stop-color="#18ff81"/><stop offset="0.2344" stop-color="#25ff7e"/><stop offset="0.25" stop-color="#33ff7b"/><stop offset="0.2656" stop-color="#40ff78"/><stop offset="0.2812" stop-color="#4eff75"/><stop offset="0.2969" stop-color="#5cff72"/><stop offset="0.3125" stop-color="#6aff6f"/><stop offset="0.3281" stop-color="#78ff6b"/><stop offset="0.3438" stop-color="#86ff68"/><stop offset="0.3594" stop-color="#93ff64"/><stop offset="0.375" stop-color="#a0ff61"/><stop offset="0.3906" stop-color="#adff5d"/><stop offset="0.4062" stop-color="#baff5a"/><stop offset="0.4219" stop-color="#c6ff56"/><stop offset="0.4375" stop-color="#d1ff52"/><stop offset="0.4531" stop-color="#dcff4f"/><stop offset="0.4688" stop-color="#e6ff4b"/><stop offset="0.4844" stop-color="#efff47"/><stop offset="0.5" stop-color="#f7ff43"/><stop offset="0.5156" stop-color="#fcff3f"/><stop offset="0.5273" stop-color="#ffff3c"/></linearGradient>
<linearGradient id="g43" href="#gb"><stop offset="0" stop-color="#01ffaa"/><stop offset="0.01562" stop-color="#01ffa8"/><stop offset="0.03125" stop-color="#01ffa6"/><stop offset="0.04688" stop-color="#01ffa3"/><stop offset="0.0625" stop-color="#01ffa1"/><stop offset="0.07812" stop-color="#01ff9e"/><stop offset="0.09375" stop-color="#01ff9c"/><stop offset="0.1094" stop-color="#01ff99"/><stop offset="0.125" stop-color="#01ff97"/><stop offset="0.1406" stop-color="#01ff94"/><stop offset="0.1562" stop-color="#01ff91"/><stop offset="0.1719" stop-color="#01ff8e"/><stop offset="0.1875" stop-color="#02ff8c"/><stop offset="0.2031" stop-color="#0dff89"/><stop offset="0.2188" stop-color="#19ff86"/><stop offset="0.2344" stop-color="#27ff83"/><stop offset="0.25" stop-color="#34ff80"/><stop offset="0.2656" stop-color="#42ff7d"/><stop offset="0.2812" stop-color="#50ff79"/><stop offset="0.2969" stop-color="#5eff76"/><stop offset="0.3125" stop-color="#6cff73"/><stop offset="0.3281" stop-color="#7aff70"/><stop offset="0.3438" stop-color="#88ff6c"/><stop offset="0.3594" stop-color="#96ff69"/><stop offset="0.375" stop-color="#a3ff65"/><stop offset="0.3906" stop-color="#b0ff62"/><stop offset="0.4062" stop-color="#bdff5e"/><stop offset="0.4219" stop-color="#c9ff5b"/><stop offset="0.4375" stop-color="#d4ff57"/><stop offset="0.4531" stop-color="#dfff53"/><stop offset="0.4688" stop-color="#e9ff4f"/><stop offset="0.4844" stop-color="#f1ff4b"/><stop offset="0.5" stop-color="#f9ff47"/><stop offset="0.5156" stop-color="#feff43"/><stop offset="0.5312" stop-color="#fffe3d"/><stop offset="0.5352" stop-color="#fffd3c"/></linearGradient>
<linearGradient id="g44" href="#gb"><stop offset="0" stop-color="#01ffaf"/><stop offset="0.01562" stop-color="#01ffac"/><stop offset="0.03125" stop-color="#01ffaa"/><stop offset="0.04688" stop-color="#01ffa8"/><stop offset="0.0625" stop-color="#01ffa5"/><stop offset="0.07812" stop-color="#01ffa3"/><stop offset="0.09375" stop-color="#01ffa0"/><stop offset="0.1094" stop-color="#01ff9e"/><stop offset="0.125" stop-color="#01ff9b"/><stop offset="0.1406" stop-color="#01ff98"/><stop offset="0.1562" stop-color="#01ff96"/><stop offset="0.1719" stop-color="#01ff93"/><stop offset="0.1875" stop-color="#03ff90"/><stop offset="0.2031" stop-color="#0eff8d"/><stop offset="0.2188" stop-color="#1aff8a"/><stop offset="0.2344" stop-color="#28ff87"/><stop offset="0.25" stop-color="#36ff84"/><stop offset="0.2656" stop-color="#44ff81"/><stop offset="0.2812" stop-color="#52ff7e"/><stop offset="0.2969" stop-color="#60ff7b"/><stop offset="0.3125" stop-color="#6eff78"/><stop offset="0.3281" stop-color="#7dff74"/><stop offset="0.3438" stop-color="#8bff71"/><stop offset="0.3594" stop-color="#98ff6d"/><stop offset="0.375" stop-color="#a6ff6a"/><stop offset="0.3906" stop-color="#b3ff66"/><stop offset="0.4062" stop-color="#c0ff63"/><stop offset="0.4219" stop-color="#ccff5f"/><stop offset="0.4375" stop-color="#d7ff5b"/><stop offset="0.4531" stop-color="#e2ff58"/><stop offset="0.4688" stop-color="#ecff54"/><stop offset="0.4844" stop-color="#f4ff50"/><stop offset="0.5" stop-color="#fbff4c"/><stop offset="0.5156" stop-color="#ffff48"/><stop offset="0.5312" stop-color="#fffc40"/><stop offset="0.543" stop-color="#fff83b"/></linearGradient>
<linearGradient id="g45" href="#gb"><stop offset="0" stop-color="#01ffb3"/><stop offset="0.01562" stop-color="#01ffb1"/><stop offset="0.03125" stop-color="#01ffae"/><stop offset="0.04688" stop-color="#01ffac"/><stop offset="0.0625" stop-color="#01ffaa"/><stop offset="0.07812" stop-color="#01ffa7"/><stop offset="0.09375" stop-color="#01ffa5"/><stop offset="0.1094" stop-color="#01ffa2"/><stop offset="0.125" stop-color="#01ffa0"/><stop offset="0.1406" stop-color="#01ff9d"/><stop offset="0.1562" stop-color="#01ff9a"/><stop offset="0.1719" stop-color="#01ff97"/><stop offset="0.1875" stop-color="#03ff95"/><stop offset="0.2031" stop-color="#0fff92"/><stop offset="0.2188" stop-color="#1bff8f"/><stop offset="0.2344" stop-color="#29ff8c"/><stop offset="0.25" stop-color="#37ff89"/><stop offset="0.2656" stop-color="#45ff86"/><stop offset="0.2812" stop-color="#54ff83"/><stop offset="0.2969" stop-color="#62ff7f"/><stop offset="0.3125" stop-color="#71ff7c"/><stop offset="0.3281" stop-color="#7fff79"/><stop offset="0.3438" stop-color="#8dff76"/><stop offset="0.3594" stop-color="#9bff72"/><stop offset="0.375" stop-color="#a9ff6f"/><stop offset="0.3906" stop-color="#b6ff6b"/><stop offset="0.4062" stop-color="#c3ff67"/><stop offset="0.4219" stop-color="#cfff64"/><stop offset="0.4375" stop-color="#daff60"/><stop offset="0.4531" stop-color="#e5ff5c"/><stop offset="0.4688" stop-color="#eeff58"/><stop offset="0.4844" stop-color="#f6ff54"/><stop offset="0.5" stop-color="#fcff50"/><stop offset="0.5156" stop-color="#ffff4b"/><stop offset="0.5312" stop-color="#fffa43"/><stop offset="0.5469" stop-color="#fff43c"/><stop offset="0.5508" stop-color="#fff33a"/></linearGradient>
<linearGradient id="g46" href="#gb"><stop offset="0.003906" stop-color="#01ffb7"/><stop offset="0.01953" stop-color="#01ffb5"/><stop offset="0.03516" stop-color="#01ffb2"/><stop offset="0.05078" stop-color="#01ffb0"/><stop offset="0.06641" stop-color="#01ffae"/><stop offset="0.08203" stop-color="#01ffab"/><stop offset="0.09766" stop-color="#01ffa9"/><stop offset="0.1133" stop-color="#01ffa6"/><stop offset="0.1289" stop-color="#01ffa3"/><stop offset="0.1445" stop-color="#01ffa1"/><stop offset="0.1602" stop-color="#01ff9e"/><stop offset="0.1758" stop-color="#01ff9b"/><stop offset="0.1914" stop-color="#06ff99"/><stop offset="0.207" stop-color="#13ff96"/><stop offset="0.2227" stop-color="#20ff93"/><stop offset="0.2383" stop-color="#2eff90"/><stop offset="0.2539" stop-color="#3cff8d"/><stop offset="0.2695" stop-color="#4bff8a"/><stop offset="0.2852" stop-color="#5aff87"/><stop offset="0.3008" stop-color="#68ff83"/><stop offset="0.3164" stop-color="#77ff80"/><stop offset="0.332" stop-color="#85ff7d"/><stop offset="0.3477" stop-color="#94ff79"/><stop offset="0.3633" stop-color="#a2ff76"/><stop offset="0.3789" stop-color="#afff72"/><stop offset="0.3945" stop-color="#bcff6f"/><stop offset="0.4102" stop-color="#c9ff6b"/><stop offset="0.4258" stop-color="#d5ff68"/><stop offset="0.4414" stop-color="#e0ff64"/><stop offset="0.457" stop-color="#eaff60"/><stop offset="0.4727" stop-color="#f3ff5c"/><stop offset="0.4883" stop-color="#faff58"/><stop offset="0.5039" stop-color="#ffff54"/><stop offset="0.5195" stop-color="#fffc4c"/><stop offset="0.5352" stop-color="#fff744"/><stop offset="0.5508" stop-color="#fff03d"/><stop offset="0.5586" stop-color="#ffed3a"/></linearGradient>
<linearGradient id="g47" href="#gb"><stop offset="0.003906" stop-color="#01ffbb"/><stop offset="0.01953" stop-color="#01ffb9"/><stop offset="0.03516" stop-color="#01ffb7"/><stop offset="0.05078" stop-color="#01ffb4"/><stop offset="0.06641" stop-color="#01ffb2"/><stop offset="0.08203" stop-color="#01ffb0"/><stop offset="0.09766" stop-color="#01ffad"/><stop offset="0.1133" stop-color="#01ffab"/><stop offset="0.1289" stop-color="#01ffa8"/><stop offset="0.1445" stop-color="#01ffa5"/><stop offset="0.1602" stop-color="#01ffa3"/><stop offset="0.1758" stop-color="#01ffa0"/><stop offset="0.1914" stop-color="#07ff9d"/><stop offset="0.207" stop-color="#13ff9b"/><stop offset="0.2227" stop-color="#21ff98"/><stop offset="0.2383" stop-color="#2fff95"/><stop offset="0.2539" stop-color="#3eff92"/><stop offset="0.2695" stop-color="#4dff8f"/><stop offset="0.2852" stop-color="#5cff8b"/><stop offset="0.3008" stop-color="#6aff88"/><stop offset="0.3164" stop-color="#79ff85"/><stop offset="0.332" stop-color="#88ff82"/><stop offset="0.3477" stop-color="#96ff7e"/><stop offset="0.3633" stop-color="#a5ff7b"/><stop offset="0.3789" stop-color="#b2ff77"/><stop offset="0.3945" stop-color="#bfff74"/><stop offset="0.4102" stop-color="#ccff70"/><stop offset="0.4258" stop-color="#d8ff6c"/><stop offset="0.4414" stop-color="#e3ff69"/><stop offset="0.457" stop-color="#edff65"/><stop offset="0.4727" stop-color="#f5ff61"/><stop offset="0.4883" stop-color="#fcff5d"/><stop offset="0.5039" stop-color="#ffff58"/><stop offset="0.5195" stop-color="#fffa4f"/><stop offset="0.5352" stop-color="#fff447"/><stop offset="0.5508" stop-color="#ffed40"/><stop offset="0.5664" stop-color="#ffe639"/></linearGradient>
<linearGradient id="g48" href="#gb"><stop offset="0.003906" stop-color="#01ffc0"/><stop offset="0.01953" stop-color="#01ffbd"/><stop offset="0.03516" stop-color="#01ffbb"/><stop offset="0.05078" stop-color="#01ffb9"/><stop offset="0.06641" stop-color="#01ffb7"/><stop offset="0.08203" stop-color="#01ffb4"/><stop offset="0.09766" stop-color="#01ffb2"/><stop offset="0.1133" stop-color="#01ffaf"/><stop offset="0.1289" stop-color="#01ffad"/><stop offset="0.1445" stop-color="#01ffaa"/><stop offset="0.1602" stop-color="#01ffa8"/><stop offset="0.1758" stop-color="#01ffa5"/><stop offset="0.1914" stop-color="#08ffa2"/><stop offset="0.207" stop-color="#14ff9f"/><stop offset="0.2227" stop-color="#22ff9c"/><stop offset="0.2383" stop-color="#31ff9a"/><stop offset="0.2539" stop-color="#40ff97"/><stop offset="0.2695" stop-color="#4fff94"/><stop offset="0.2852" stop-color="#5eff90"/><stop offset="0.3008" stop-color="#6dff8d"/><stop offset="0.3164" stop-color="#7cff8a"/><stop offset="0.332" stop-color="#8bff87"/><stop offset="0.3477" stop-color="#99ff83"/><stop offset="0.3633" stop-color="#a8ff80"/><stop offset="0.3789" stop-color="#b5ff7c"/><stop offset="0.3945" stop-color="#c3ff79"/><stop offset="0.4102" stop-color="#cfff75"/><stop offset="0.4258" stop-color="#dbff71"/><stop offset="0.4414" stop-color="#e6ff6e"/><stop offset="0.457" stop-color="#f0ff6a"/><stop offset="0.4727" stop-color="#f8ff66"/><stop offset="0.4883" stop-color="#feff62"/><stop offset="0.5039" stop-color="#fffe5b"/><stop offset="0.5195" stop-color="#fff852"/><stop offset="0.5352" stop-color="#fff24a"/><stop offset="0.5508" stop-color="#ffea43"/><stop offset="0.5664" stop-color="#ffe33c"/><stop offset="0.5742" stop-color="#ffdf39"/></linearGradient>
<linearGradient id="g49" href="#gb"><stop offset="0.003906" stop-color="#01ffc4"/><stop offset="0.01953" stop-color="#01ffc2"/><stop offset="0.03516" stop-color="#01ffc0"/><stop offset="0.05078" stop-color="#01ffbe"/><stop offset="0.06641" stop-color="#01ffbb"/><stop offset="0.08203" stop-color="#01ffb9"/><stop offset="0.09766" stop-color="#01ffb7"/><stop offset="0.1133" stop-color="#01ffb4"/><stop offset="0.1289" stop-color="#01ffb2"/><stop offset="0.1445" stop-color="#01ffaf"/><stop offset="0.1602" stop-color="#01ffac"/><stop offset="0.1758" stop-color="#01ffaa"/><stop offset="0.1914" stop-color="#08ffa7"/><stop offset="0.207" stop-color="#15ffa4"/><stop offset="0.2227" stop-color="#24ffa1"/><stop offset="0.2383" stop-color="#32ff9f"/><stop offset="0.2539" stop-color="#41ff9c"/><stop offset="0.2695" stop-color="#51ff99"/><stop offset="0.2852" stop-color="#60ff95"/><stop offset="0.3008" stop-color="#6fff92"/><stop offset="0.3164" stop-color="#7fff8f"/><stop offset="0.332" stop-color="#8eff8c"/><stop offset="0.3477" stop-color="#9cff88"/><stop offset="0.3633" stop-color="#abff85"/><stop offset="0.3789" stop-color="#b9ff82"/><stop offset="0.3945" stop-color="#c6ff7e"/><stop offset="0.4102" stop-color="#d3ff7a"/><stop offset="0.4258" stop-color="#deff77"/><stop offset="0.4414" stop-color="#e9ff73"/><stop offset="0.457" stop-color="#f2ff6f"/><stop offset="0.4727" stop-color="#faff6b"/><stop offset="0.4883" stop-color="#ffff67"/><stop offset="0.5039" stop-color="#fffc5e"/><stop offset="0.5195" stop-color="#fff655"/><stop offset="0.5352" stop-color="#ffef4d"/><stop offset="0.5508" stop-color="#ffe846"/><stop offset="0.5664" stop-color="#ffe03f"/><stop offset="0.582" stop-color="#ffd838"/></linearGradient>
<linearGradient id="g50" href="#gb"><stop offset="0.003906" stop-color="#01ffc9"/><stop offset="0.01953" stop-color="#01ffc6"/><stop offset="0.03516" stop-color="#01ffc4"/><stop offset="0.05078" stop-color="#01ffc2"/><stop offset="0.06641" stop-color="#01ffc0"/><stop offset="0.08203" stop-color="#01ffbe"/><stop offset="0.09766" stop-color="#01ffbb"/><stop offset="0.1133" stop-color="#01ffb9"/><stop offset="0.1289" stop-color="#01ffb6"/><stop offset="0.1445" stop-color="#01ffb4"/><stop offset="0.1602" stop-color="#01ffb1"/><stop offset="0.1758" stop-color="#01ffaf"/><stop offset="0.1914" stop-color="#09ffac"/><stop offset="0.207" stop-color="#16ffa9"/><stop offset="0.2227" stop-color="#25ffa6"/><stop offset="0.2383" stop-color="#34ffa4"/><stop offset="0.2539" stop-color="#43ffa1"/><stop offset="0.2695" stop-color="#53ff9e"/><stop offset="0.2852" stop-color="#62ff9b"/><stop offset="0.3008" stop-color="#72ff98"/><stop offset="0.3164" stop-color="#81ff94"/><stop offset="0.332" stop-color="#90ff91"/><stop offset="0.3477" stop-color="#9fff8e"/><stop offset="0.3633" stop-color="#aeff8a"/><stop offset="0.3789" stop-color="#bcff87"/><stop offset="0.3945" stop-color="#c9ff83"/><stop offset="0.4102" stop-color="#d6ff80"/><stop offset="0.4258" stop-color="#e1ff7c"/><stop offset="0.4414" stop-color="#ecff78"/><stop offset="0.457" stop-color="#f5ff74"/><stop offset="0.4727" stop-color="#fcff70"/><stop offset="0.4883" stop-color="#ffff6b"/><stop offset="0.5039" stop-color="#fffa61"/><stop offset="0.5195" stop-color="#fff358"/><stop offset="0.5352" stop-color="#ffec50"/><stop offset="0.5508" stop-color="#ffe448"/><stop offset="0.5664" stop-color="#ffdd41"/><stop offset="0.582" stop-color="#ffd53b"/><stop offset="0.5898" stop-color="#ffd138"/></linearGradient>
<linearGradient id="g51" href="#gb"><stop offset="0.007812" stop-color="#01ffcd"/><stop offset="0.02344" stop-color="#01ffca"/><stop offset="0.03906" stop-color="#01ffc8"/><stop offset="0.05469" stop-color="#01ffc6"/><stop offset="0.07031" stop-color="#01ffc4"/><stop offset="0.08594" stop-color="#01ffc2"/><stop offset="0.1016" stop-color="#01ffbf"/><stop offset="0.1172" stop-color="#01ffbd"/><stop offset="0.1328" stop-color="#01ffbb"/><stop offset="0.1484" stop-color="#01ffb8"/><stop offset="0.1641" stop-color="#01ffb6"/><stop offset="0.1797" stop-color="#01ffb3"/><stop offset="0.1953" stop-color="#0dffb0"/><stop offset="0.2109" stop-color="#1bffae"/><stop offset="0.2266" stop-color="#2affab"/><stop offset="0.2422" stop-color="#39ffa8"/><stop offset="0.2578" stop-color="#49ffa5"/><stop offset="0.2734" stop-color="#59ffa2"/><stop offset="0.2891" stop-color="#69ff9f"/><stop offset="0.3047" stop-color="#78ff9c"/><stop offset="0.3203" stop-color="#88ff99"/><stop offset="0.3359" stop-color="#97ff96"/><stop offset="0.3516" stop-color="#a6ff92"/><stop offset="0.3672" stop-color="#b5ff8f"/><stop offset="0.3828" stop-color="#c3ff8b"/><stop offset="0.3984" stop-color="#d0ff88"/><stop offset="0.4141" stop-color="#dcff84"/><stop offset="0.4297" stop-color="#e7ff80"/><stop offset="0.4453" stop-color="#f1ff7d"/><stop offset="0.4609" stop-color="#f9ff79"/><stop offset="0.4766" stop-color="#ffff75"/><stop offset="0.4922" stop-color="#fffc6c"/><stop offset="0.5078" stop-color="#fff662"/><stop offset="0.5234" stop-color="#ffef59"/><stop offset="0.5391" stop-color="#ffe751"/><stop offset="0.5547" stop-color="#ffdf49"/><stop offset="0.5703" stop-color="#ffd842"/><stop offset="0.5859" stop-color="#ffd03c"/><stop offset="0.5977" stop-color="#ffca37"/></linearGradient>
<linearGradient id="g52" href="#gb"><stop offset="0.007812" stop-color="#01ffd1"/><stop offset="0.02344" stop-color="#01ffcf"/><stop offset="0.03906" stop-color="#01ffcd"/><stop offset="0.05469" stop-color="#01ffcb"/><stop offset="0.07031" stop-color="#01ffc9"/><stop offset="0.08594" stop-color="#01ffc7"/><stop offset="0.1016" stop-color="#01ffc4"/><stop offset="0.1172" stop-color="#01ffc2"/><stop offset="0.1328" stop-color="#01ffc0"/><stop offset="0.1484" stop-color="#01ffbd"/><stop offset="0.1641" stop-color="#01ffbb"/><stop offset="0.1797" stop-color="#02ffb8"/><stop offset="0.1953" stop-color="#0effb6"/><stop offset="0.2109" stop-color="#1cffb3"/><stop offset="0.2266" stop-color="#2bffb0"/><stop offset="0.2422" stop-color="#3bffad"/><stop offset="0.2578" stop-color="#4bffaa"/><stop offset="0.2734" stop-color="#5bffa7"/><stop offset="0.2891" stop-color="#6bffa4"/><stop offset="0.3047" stop-color="#7bffa1"/><stop offset="0.3203" stop-color="#8bff9e"/><stop offset="0.3359" stop-color="#9aff9b"/><stop offset="0.3516" stop-color="#a9ff98"/><stop offset="0.3672" stop-color="#b8ff94"/><stop offset="0.3828" stop-color="#c6ff91"/><stop offset="0.3984" stop-color="#d3ff8d"/><stop offset="0.4141" stop-color="#dfff8a"/><stop offset="0.4297" stop-color="#eaff86"/><stop offset="0.4453" stop-color="#f4ff82"/><stop offset="0.4609" stop-color="#fbff7e"/><stop offset="0.4766" stop-color="#ffff7a"/><stop offset="0.4922" stop-color="#fffa6f"/><stop offset="0.5078" stop-color="#fff365"/><stop offset="0.5234" stop-color="#ffec5c"/><stop offset="0.5391" stop-color="#ffe454"/><stop offset="0.5547" stop-color="#ffdc4c"/><stop offset="0.5703" stop-color="#ffd445"/><stop offset="0.5859" stop-color="#ffcc3e"/><stop offset="0.6016" stop-color="#ffc538"/><stop offset="0.6055" stop-color="#ffc337"/></linearGradient>
<linearGradient id="g53" href="#gb"><stop offset="0.007812" stop-color="#01ffd6"/><stop offset="0.02344" stop-color="#01ffd4"/><stop offset="0.03906" stop-color="#01ffd2"/><stop offset="0.05469" stop-color="#01ffd0"/><stop offset="0.07031" stop-color="#01ffce"/><stop offset="0.08594" stop-color="#01ffcb"/><stop offset="0.1016" stop-color="#01ffc9"/><stop offset="0.1172" stop-color="#01ffc7"/><stop offset="0.1328" stop-color="#01ffc5"/><stop offset="0.1484" stop-color="#01ffc2"/><stop offset="0.1641" stop-color="#01ffc0"/><stop offset="0.1797" stop-color="#02ffbd"/><stop offset="0.1953" stop-color="#0fffbb"/><stop offset="0.2109" stop-color="#1dffb8"/><stop offset="0.2266" stop-color="#2dffb5"/><stop offset="0.2422" stop-color="#3dffb3"/><stop offset="0.2578" stop-color="#4dffb0"/><stop offset="0.2734" stop-color="#5dffad"/><stop offset="0.2891" stop-color="#6effaa"/><stop offset="0.3047" stop-color="#7effa7"/><stop offset="0.3203" stop-color="#8effa4"/><stop offset="0.3359" stop-color="#9dffa1"/><stop offset="0.3516" stop-color="#adff9d"/><stop offset="0.3672" stop-color="#bbff9a"/><stop offset="0.3828" stop-color="#c9ff97"/><stop offset="0.3984" stop-color="#d7ff93"/><stop offset="0.4141" stop-color="#e3ff8f"/><stop offset="0.4297" stop-color="#edff8c"/><stop offset="0.4453" stop-color="#f7ff88"/><stop offset="0.4609" stop-color="#fdff84"/><stop offset="0.4766" stop-color="#fffe7d"/><stop offset="0.4922" stop-color="#fff872"/><stop offset="0.5078" stop-color="#fff168"/><stop offset="0.5234" stop-color="#ffe95f"/><stop offset="0.5391" stop-color="#ffe157"/><stop offset="0.5547" stop-color="#ffd94f"/><stop offset="0.5703" stop-color="#ffd148"/><stop offset="0.5859" stop-color="#ffc941"/><stop offset="0.6016" stop-color="#ffc23b"/><stop offset="0.6133" stop-color="#ffbc37"/></linearGradient>
<linearGradient id="g54" href="#gb"><stop offset="0.007812" stop-color="#01ffda"/><stop offset="0.02344" stop-color="#01ffd8"/><stop offset="0.03906" stop-color="#01ffd6"/><stop offset="0.05469" stop-color="#01ffd4"/><stop offset="0.07031" stop-color="#01ffd2"/><stop offset="0.08594" stop-color="#01ffd0"/><stop offset="0.1016" stop-color="#01ffce"/><stop offset="0.1172" stop-color="#01ffcc"/><stop offset="0.1328" stop-color="#01ffca"/><stop offset="0.1484" stop-color="#01ffc7"/><stop offset="0.1641" stop-color="#01ffc5"/><stop offset="0.1797" stop-color="#03ffc2"/><stop offset="0.1953" stop-color="#10ffc0"/><stop offset="0.2109" stop-color="#1fffbd"/><stop offset="0.2266" stop-color="#2effbb"/><stop offset="0.2422" stop-color="#3fffb8"/><stop offset="0.2578" stop-color="#4fffb5"/><stop offset="0.2734" stop-color="#60ffb2"/><stop offset="0.2891" stop-color="#70ffaf"/><stop offset="0.3047" stop-color="#81ffac"/><stop offset="0.3203" stop-color="#91ffa9"/><stop offset="0.3359" stop-color="#a1ffa6"/><stop offset="0.3516" stop-color="#b0ffa3"/><stop offset="0.3672" stop-color="#bfffa0"/><stop offset="0.3828" stop-color="#cdff9c"/><stop offset="0.3984" stop-color="#daff99"/><stop offset="0.4141" stop-color="#e6ff95"/><stop offset="0.4297" stop-color="#f0ff92"/><stop offset="0.4453" stop-color="#f9ff8e"/><stop offset="0.4609" stop-color="#ffff8a"/><stop offset="0.4766" stop-color="#fffc80"/><stop offset="0.4922" stop-color="#fff575"/><stop offset="0.5078" stop-color="#ffee6b"/><stop offset="0.5234" stop-color="#ffe562"/><stop offset="0.5391" stop-color="#ffdd59"/><stop offset="0.5547" stop-color="#ffd551"/><stop offset="0.5703" stop-color="#ffcd4a"/><stop offset="0.5859" stop-color="#ffc644"/><stop offset="0.6016" stop-color="#ffbe3d"/><stop offset="0.6172" stop-color="#ffb738"/><stop offset="0.6211" stop-color="#ffb536"/></linearGradient>
<linearGradient id="g55" href="#gb"><stop offset="0.01172" stop-color="#01ffde"/><stop offset="0.02734" stop-color="#01ffdc"/><stop offset="0.04297" stop-color="#01ffda"/><stop offset="0.05859" stop-color="#01ffd9"/><stop offset="0.07422" stop-color="#01ffd7"/><stop offset="0.08984" stop-color="#01ffd5"/><stop offset="0.1055" stop-color="#01ffd2"/><stop offset="0.1211" stop-color="#01ffd0"/><stop offset="0.1367" stop-color="#01ffce"/><stop offset="0.1523" stop-color="#01ffcc"/><stop offset="0.168" stop-color="#01ffc9"/><stop offset="0.1836" stop-color="#06ffc7"/><stop offset="0.1992" stop-color="#14ffc5"/><stop offset="0.2148" stop-color="#24ffc2"/><stop offset="0.2305" stop-color="#34ffbf"/><stop offset="0.2461" stop-color="#45ffbd"/><stop offset="0.2617" stop-color="#56ffba"/><stop offset="0.2773" stop-color="#66ffb7"/><stop offset="0.293" stop-color="#77ffb4"/><stop offset="0.3086" stop-color="#88ffb1"/><stop offset="0.3242" stop-color="#98ffae"/><stop offset="0.3398" stop-color="#a8ffab"/><stop offset="0.3555" stop-color="#b7ffa8"/><stop offset="0.3711" stop-color="#c6ffa5"/><stop offset="0.3867" stop-color="#d4ffa1"/><stop offset="0.4023" stop-color="#e1ff9e"/><stop offset="0.418" stop-color="#ecff9a"/><stop offset="0.4336" stop-color="#f6ff97"/><stop offset="0.4492" stop-color="#fdff93"/><stop offset="0.4648" stop-color="#fffe8c"/><stop offset="0.4805" stop-color="#fff880"/><stop offset="0.4961" stop-color="#fff175"/><stop offset="0.5117" stop-color="#ffe86c"/><stop offset="0.5273" stop-color="#ffe062"/><stop offset="0.543" stop-color="#ffd85a"/><stop offset="0.5586" stop-color="#ffd052"/><stop offset="0.5742" stop-color="#ffc84b"/><stop offset="0.5898" stop-color="#ffc044"/><stop offset="0.6055" stop-color="#ffb93e"/><stop offset="0.6211" stop-color="#ffb239"/><stop offset="0.6289" stop-color="#ffae36"/></linearGradient>
<linearGradient id="g56" href="#gb"><stop offset="0.01172" stop-color="#01ffe3"/><stop offset="0.02734" stop-color="#01ffe1"/><stop offset="0.04297" stop-color="#01ffdf"/><stop offset="0.05859" stop-color="#01ffdd"/><stop offset="0.07422" stop-color="#01ffdb"/><stop offset="0.08984" stop-color="#01ffd9"/><stop offset="0.1055" stop-color="#01ffd7"/><stop offset="0.1211" stop-color="#01ffd5"/><stop offset="0.1367" stop-color="#01ffd3"/><stop offset="0.1523" stop-color="#01ffd1"/><stop offset="0.168" stop-color="#01ffcf"/><stop offset="0.1836" stop-color="#07ffcc"/><stop offset="0.1992" stop-color="#15ffca"/><stop offset="0.2148" stop-color="#25ffc7"/><stop offset="0.2305" stop-color="#36ffc5"/><stop offset="0.2461" stop-color="#47ffc2"/><stop offset="0.2617" stop-color="#58ffc0"/><stop offset="0.2773" stop-color="#69ffbd"/><stop offset="0.293" stop-color="#7affba"/><stop offset="0.3086" stop-color="#8bffb7"/><stop offset="0.3242" stop-color="#9bffb4"/><stop offset="0.3398" stop-color="#abffb1"/><stop offset="0.3555" stop-color="#bbffae"/><stop offset="0.3711" stop-color="#caffab"/><stop offset="0.3867" stop-color="#d7ffa7"/><stop offset="0.4023" stop-color="#e4ffa4"/><stop offset="0.418" stop-color="#efffa0"/><stop offset="0.4336" stop-color="#f8ff9d"/><stop offset="0.4492" stop-color="#feff99"/><stop offset="0.4648" stop-color="#fffc8f"/><stop offset="0.4805" stop-color="#fff583"/><stop offset="0.4961" stop-color="#ffed78"/><stop offset="0.5117" stop-color="#ffe56e"/><stop offset="0.5273" stop-color="#ffdd65"/><stop offset="0.543" stop-color="#ffd45d"/><stop offset="0.5586" stop-color="#ffcc55"/><stop offset="0.5742" stop-color="#ffc44e"/><stop offset="0.5898" stop-color="#ffbc47"/><stop offset="0.6055" stop-color="#ffb541"/><stop offset="0.6211" stop-color="#ffae3b"/><stop offset="0.6367" stop-color="#ffa836"/></linearGradient>
<linearGradient id="g57" href="#gb"><stop offset="0.01172" stop-color="#01ffe7"/><stop offset="0.02734" stop-color="#01ffe5"/><stop offset="0.04297" stop-color="#01ffe4"/><stop offset="0.05859" stop-color="#01ffe2"/><stop offset="0.07422" stop-color="#01ffe0"/><stop offset="0.08984" stop-color="#01ffde"/><stop offset="0.1055" stop-color="#01ffdc"/><stop offset="0.1211" stop-color="#01ffda"/><stop offset="0.1367" stop-color="#01ffd8"/><stop offset="0.1523" stop-color="#01ffd6"/><stop offset="0.168" stop-color="#01ffd4"/><stop offset="0.1836" stop-color="#08ffd2"/><stop offset="0.1992" stop-color="#17ffcf"/><stop offset="0.2148" stop-color="#27ffcd"/><stop offset="0.2305" stop-color="#38ffca"/><stop offset="0.2461" stop-color="#49ffc8"/><stop offset="0.2617" stop-color="#5affc5"/><stop offset="0.2773" stop-color="#6cffc3"/><stop offset="0.293" stop-color="#7dffc0"/><stop offset="0.3086" stop-color="#8effbd"/><stop offset="0.3242" stop-color="#9fffba"/><stop offset="0.3398" stop-color="#afffb7"/><stop offset="0.3555" stop-color="#bfffb4"/><stop offset="0.3711" stop-color="#cdffb1"/><stop offset="0.3867" stop-color="#dbffad"/><stop offset="0.4023" stop-color="#e7ffaa"/><stop offset="0.418" stop-color="#f2ffa7"/><stop offset="0.4336" stop-color="#fbffa3"/><stop offset="0.4492" stop-color="#ffff9f"/><stop offset="0.4648" stop-color="#fffa92"/><stop offset="0.4805" stop-color="#fff286"/><stop offset="0.4961" stop-color="#ffea7b"/><stop offset="0.5117" stop-color="#ffe271"/><stop offset="0.5273" stop-color="#ffd968"/><stop offset="0.543" stop-color="#ffd060"/><stop offset="0.5586" stop-color="#ffc858"/><stop offset="0.5742" stop-color="#ffc050"/><stop offset="0.5898" stop-color="#ffb949"/><stop offset="0.6055" stop-color="#ffb243"/><stop offset="0.6211" stop-color="#ffab3d"/><stop offset="0.6367" stop-color="#ffa438"/><stop offset="0.6445" stop-color="#ffa135"/></linearGradient>
<linearGradient id="g58" href="#gb"><stop offset="0.01562" stop-color="#01ffeb"/><stop offset="0.03125" stop-color="#01ffe9"/><stop offset="0.04688" stop-color="#01ffe8"/><stop offset="0.0625" stop-color="#01ffe6"/><stop offset="0.07812" stop-color="#01ffe4"/><stop offset="0.09375" stop-color="#01ffe2"/><stop offset="0.1094" stop-color="#01ffe1"/><stop offset="0.125" stop-color="#01ffdf"/><stop offset="0.1406" stop-color="#01ffdd"/><stop offset="0.1562" stop-color="#01ffdb"/><stop offset="0.1719" stop-color="#01ffd9"/><stop offset="0.1875" stop-color="#0cffd6"/><stop offset="0.2031" stop-color="#1cffd4"/><stop offset="0.2188" stop-color="#2dffd2"/><stop offset="0.2344" stop-color="#3effcf"/><stop offset="0.25" stop-color="#50ffcd"/><stop offset="0.2656" stop-color="#61ffca"/><stop offset="0.2812" stop-color="#73ffc8"/><stop offset="0.2969" stop-color="#84ffc5"/><stop offset="0.3125" stop-color="#96ffc2"/><stop offset="0.3281" stop-color="#a6ffbf"/><stop offset="0.3438" stop-color="#b7ffbc"/><stop offset="0.3594" stop-color="#c6ffb9"/><stop offset="0.375" stop-color="#d5ffb6"/><stop offset="0.3906" stop-color="#e2ffb3"/><stop offset="0.4062" stop-color="#eeffb0"/><stop offset="0.4219" stop-color="#f7ffac"/><stop offset="0.4375" stop-color="#feffa9"/><stop offset="0.4531" stop-color="#fffc9e"/><stop offset="0.4688" stop-color="#fff592"/><stop offset="0.4844" stop-color="#ffed86"/><stop offset="0.5" stop-color="#ffe57c"/><stop offset="0.5156" stop-color="#ffdc72"/><stop offset="0.5312" stop-color="#ffd369"/><stop offset="0.5469" stop-color="#ffcb60"/><stop offset="0.5625" stop-color="#ffc358"/><stop offset="0.5781" stop-color="#ffbb51"/><stop offset="0.5938" stop-color="#ffb34a"/><stop offset="0.6094" stop-color="#ffac44"/><stop offset="0.625" stop-color="#ffa53e"/><stop offset="0.6406" stop-color="#ff9f39"/><stop offset="0.6523" stop-color="#ff9a35"/></linearGradient>
<linearGradient id="g59" href="#gb"><stop offset="0.01562" stop-color="#01ffef"/><stop offset="0.03125" stop-color="#01ffed"/><stop offset="0.04688" stop-color="#01ffec"/><stop offset="0.0625" stop-color="#01ffea"/><stop offset="0.07812" stop-color="#01ffe9"/><stop offset="0.09375" stop-color="#01ffe7"/><stop offset="0.1094" stop-color="#01ffe5"/><stop offset="0.125" stop-color="#01ffe4"/><stop offset="0.1406" stop-color="#01ffe2"/><stop offset="0.1562" stop-color="#01ffe0"/><stop offset="0.1719" stop-color="#01ffde"/><stop offset="0.1875" stop-color="#0dffdc"/><stop offset="0.2031" stop-color="#1dffd9"/><stop offset="0.2188" stop-color="#2effd7"/><stop offset="0.2344" stop-color="#40ffd5"/><stop offset="0.25" stop-color="#52ffd2"/><stop offset="0.2656" stop-color="#64ffd0"/><stop offset="0.2812" stop-color="#76ffcd"/><stop offset="0.2969" stop-color="#88ffcb"/><stop offset="0.3125" stop-color="#99ffc8"/><stop offset="0.3281" stop-color="#aaffc5"/><stop offset="0.3438" stop-color="#baffc2"/><stop offset="0.3594" stop-color="#caffbf"/><stop offset="0.375" stop-color="#d8ffbc"/><stop offset="0.3906" stop-color="#e5ffb9"/><stop offset="0.4062" stop-color="#f1ffb6"/><stop offset="0.4219" stop-color="#faffb3"/><stop offset="0.4375" stop-color="#ffffaf"/><stop offset="0.4531" stop-color="#fffaa1"/><stop offset="0.4688" stop-color="#fff295"/><stop offset="0.4844" stop-color="#ffea89"/><stop offset="0.5" stop-color="#ffe17e"/><stop offset="0.5156" stop-color="#ffd875"/><stop offset="0.5312" stop-color="#ffcf6b"/><stop offset="0.5469" stop-color="#ffc763"/><stop offset="0.5625" stop-color="#ffbf5b"/><stop offset="0.5781" stop-color="#ffb754"/><stop offset="0.5938" stop-color="#ffb04d"/><stop offset="0.6094" stop-color="#ffa946"/><stop offset="0.625" stop-color="#ffa240"/><stop offset="0.6406" stop-color="#ff9b3b"/><stop offset="0.6562" stop-color="#ff9536"/><stop offset="0.6602" stop-color="#ff9435"/></linearGradient>
<linearGradient id="g60" href="#gb"><stop offset="0.01562" stop-color="#01fff3"/><stop offset="0.03125" stop-color="#01fff2"/><stop offset="0.04688" stop-color="#01fff0"/><stop offset="0.0625" stop-color="#01ffef"/><stop offset="0.07812" stop-color="#01ffed"/><stop offset="0.09375" stop-color="#01ffec"/><stop offset="0.1094" stop-color="#01ffea"/><stop offset="0.125" stop-color="#01ffe8"/><stop offset="0.1406" stop-color="#01ffe7"/><stop offset="0.1562" stop-color="#01ffe5"/><stop offset="0.1719" stop-color="#01ffe3"/><stop offset="0.1875" stop-color="#0effe1"/><stop offset="0.2031" stop-color="#1fffdf"/><stop offset="0.2188" stop-color="#30ffdd"/><stop offset="0.2344" stop-color="#42ffda"/><stop offset="0.25" stop-color="#54ffd8"/><stop offset="0.2656" stop-color="#67ffd6"/><stop offset="0.2812" stop-color="#79ffd3"/><stop offset="0.2969" stop-color="#8bffd1"/><stop offset="0.3125" stop-color="#9dffce"/><stop offset="0.3281" stop-color="#aeffcb"/><stop offset="0.3438" stop-color="#beffc9"/><stop offset="0.3594" stop-color="#ceffc6"/><stop offset="0.375" stop-color="#dcffc3"/><stop offset="0.3906" stop-color="#e9ffc0"/><stop offset="0.4062" stop-color="#f4ffbc"/><stop offset="0.4219" stop-color="#fcffb9"/><stop offset="0.4375" stop-color="#fffeb2"/><stop offset="0.4531" stop-color="#fff7a4"/><stop offset="0.4688" stop-color="#ffef98"/><stop offset="0.4844" stop-color="#ffe68c"/><stop offset="0.5" stop-color="#ffdd81"/><stop offset="0.5156" stop-color="#ffd477"/><stop offset="0.5312" stop-color="#ffcb6e"/><stop offset="0.5469" stop-color="#ffc365"/><stop offset="0.5625" stop-color="#ffbb5d"/><stop offset="0.5781" stop-color="#ffb356"/><stop offset="0.5938" stop-color="#ffac4f"/><stop offset="0.6094" stop-color="#ffa549"/><stop offset="0.625" stop-color="#ff9e43"/><stop offset="0.6406" stop-color="#ff983d"/><stop offset="0.6562" stop-color="#ff9238"/><stop offset="0.668" stop-color="#ff8e34"/></linearGradient>
<linearGradient id="g61" href="#gb"><stop offset="0.01562" stop-color="#01fff7"/><stop offset="0.03125" stop-color="#01fff5"/><stop offset="0.04688" stop-color="#01fff4"/><stop offset="0.0625" stop-color="#01fff3"/><stop offset="0.07812" stop-color="#01fff1"/><stop offset="0.09375" stop-color="#01fff0"/><stop offset="0.1094" stop-color="#01ffef"/><stop offset="0.125" stop-color="#01ffed"/><stop offset="0.1406" stop-color="#01ffeb"/><stop offset="0.1562" stop-color="#01ffea"/><stop offset="0.1719" stop-color="#01ffe8"/><stop offset="0.1875" stop-color="#0fffe6"/><stop offset="0.2031" stop-color="#20ffe4"/><stop offset="0.2188" stop-color="#32ffe2"/><stop offset="0.2344" stop-color="#44ffe0"/><stop offset="0.25" stop-color="#57ffde"/><stop offset="0.2656" stop-color="#69ffdb"/><stop offset="0.2812" stop-color="#7cffd9"/><stop offset="0.2969" stop-color="#8effd7"/><stop offset="0.3125" stop-color="#a0ffd4"/><stop offset="0.3281" stop-color="#b2ffd2"/><stop offset="0.3438" stop-color="#c2ffcf"/><stop offset="0.3594" stop-color="#d2ffcc"/><stop offset="0.375" stop-color="#e0ffc9"/><stop offset="0.3906" stop-color="#edffc6"/><stop offset="0.4062" stop-color="#f7ffc3"/><stop offset="0.4219" stop-color="#feffc0"/><stop offset="0.4375" stop-color="#fffcb5"/><stop offset="0.4531" stop-color="#fff4a7"/><stop offset="0.4688" stop-color="#ffec9b"/><stop offset="0.4844" stop-color="#ffe38f"/><stop offset="0.5" stop-color="#ffd984"/><stop offset="0.5156" stop-color="#ffd07a"/><stop offset="0.5312" stop-color="#ffc771"/><stop offset="0.5469" stop-color="#ffbf68"/><stop offset="0.5625" stop-color="#ffb760"/><stop offset="0.5781" stop-color="#ffaf59"/><stop offset="0.5938" stop-color="#ffa852"/><stop offset="0.6094" stop-color="#ffa14b"/><stop offset="0.625" stop-color="#ff9b45"/><stop offset="0.6406" stop-color="#ff943f"/><stop offset="0.6562" stop-color="#ff8e3a"/><stop offset="0.6719" stop-color="#ff8935"/><stop offset="0.6758" stop-color="#ff8734"/></linearGradient>
<linearGradient id="g62" href="#gb"><stop offset="0.01953" stop-color="#01fffa"/><stop offset="0.03516" stop-color="#01fff9"/><stop offset="0.05078" stop-color="#01fff7"/><stop offset="0.06641" stop-color="#01fff6"/><stop offset="0.08203" stop-color="#01fff5"/><stop offset="0.09766" stop-color="#01fff4"/><stop offset="0.1133" stop-color="#01fff2"/><stop offset="0.1289" stop-color="#01fff1"/><stop offset="0.1445" stop-color="#01ffef"/><stop offset="0.1602" stop-color="#01ffee"/><stop offset="0.1758" stop-color="#05ffec"/><stop offset="0.1914" stop-color="#14ffea"/><stop offset="0.207" stop-color="#26ffe9"/><stop offset="0.2227" stop-color="#38ffe7"/><stop offset="0.2383" stop-color="#4bffe5"/><stop offset="0.2539" stop-color="#5effe3"/><stop offset="0.2695" stop-color="#71ffe1"/><stop offset="0.2852" stop-color="#84ffde"/><stop offset="0.3008" stop-color="#96ffdc"/><stop offset="0.3164" stop-color="#a8ffda"/><stop offset="0.332" stop-color="#baffd7"/><stop offset="0.3477" stop-color="#caffd4"/><stop offset="0.3633" stop-color="#d9ffd2"/><stop offset="0.3789" stop-color="#e7ffcf"/><stop offset="0.3945" stop-color="#f3ffcc"/><stop offset="0.4102" stop-color="#fcffc9"/><stop offset="0.4258" stop-color="#fffec2"/><stop offset="0.4414" stop-color="#fff8b4"/><stop offset="0.457" stop-color="#ffefa7"/><stop offset="0.4727" stop-color="#ffe69b"/><stop offset="0.4883" stop-color="#ffdc8f"/><stop offset="0.5039" stop-color="#ffd384"/><stop offset="0.5195" stop-color="#ffca7a"/><stop offset="0.5352" stop-color="#ffc171"/><stop offset="0.5508" stop-color="#ffb969"/><stop offset="0.5664" stop-color="#ffb161"/><stop offset="0.582" stop-color="#ffaa59"/><stop offset="0.5977" stop-color="#ffa252"/><stop offset="0.6133" stop-color="#ff9c4c"/><stop offset="0.6289" stop-color="#ff9546"/><stop offset="0.6445" stop-color="#ff8f40"/><stop offset="0.6602" stop-color="#ff893b"/><stop offset="0.6758" stop-color="#ff8436"/><stop offset="0.6836" stop-color="#ff8134"/></linearGradient>
<linearGradient id="g63" href="#gb"><stop offset="0.01953" stop-color="#01fffc"/><stop offset="0.03516" stop-color="#01fffc"/><stop offset="0.05078" stop-color="#01fffb"/><stop offset="0.06641" stop-color="#01fffa"/><stop offset="0.08203" stop-color="#01fff9"/><stop offset="0.09766" stop-color="#01fff8"/><stop offset="0.1133" stop-color="#01fff6"/><stop offset="0.1289" stop-color="#01fff5"/><stop offset="0.1445" stop-color="#01fff4"/><stop offset="0.1602" stop-color="#01fff2"/><stop offset="0.1758" stop-color="#05fff1"/><stop offset="0.1914" stop-color="#16ffef"/><stop offset="0.207" stop-color="#28ffee"/><stop offset="0.2227" stop-color="#3affec"/><stop offset="0.2383" stop-color="#4effea"/><stop offset="0.2539" stop-color="#61ffe8"/><stop offset="0.2695" stop-color="#74ffe6"/><stop offset="0.2852" stop-color="#87ffe4"/><stop offset="0.3008" stop-color="#9affe2"/><stop offset="0.3164" stop-color="#acffdf"/><stop offset="0.332" stop-color="#beffdd"/><stop offset="0.3477" stop-color="#ceffdb"/><stop offset="0.3633" stop-color="#ddffd8"/><stop offset="0.3789" stop-color="#ebffd5"/><stop offset="0.3945" stop-color="#f6ffd3"/><stop offset="0.4102" stop-color="#feffd0"/><stop offset="0.4258" stop-color="#fffcc5"/><stop offset="0.4414" stop-color="#fff4b7"/><stop offset="0.457" stop-color="#ffebaa"/><stop offset="0.4727" stop-color="#ffe29d"/><stop offset="0.4883" stop-color="#ffd892"/><stop offset="0.5039" stop-color="#ffcf87"/><stop offset="0.5195" stop-color="#ffc67d"/><stop offset="0.5352" stop-color="#ffbd74"/><stop offset="0.5508" stop-color="#ffb56b"/><stop offset="0.5664" stop-color="#ffad63"/><stop offset="0.582" stop-color="#ffa65c"/><stop offset="0.5977" stop-color="#ff9f55"/><stop offset="0.6133" stop-color="#ff984e"/><stop offset="0.6289" stop-color="#ff9248"/><stop offset="0.6445" stop-color="#ff8c42"/><stop offset="0.6602" stop-color="#ff863d"/><stop offset="0.6758" stop-color="#ff8138"/><stop offset="0.6914" stop-color="#ff7b33"/></linearGradient>
<linearGradient id="g64" href="#gb"><stop offset="0.01953" stop-color="#01ffff"/><stop offset="0.03516" stop-color="#01fffe"/><stop offset="0.05078" stop-color="#01fffd"/><stop offset="0.06641" stop-color="#01fffd"/><stop offset="0.08203" stop-color="#01fffc"/><stop offset="0.09766" stop-color="#01fffb"/><stop offset="0.1133" stop-color="#01fffa"/><stop offset="0.1289" stop-color="#01fff9"/><stop offset="0.1445" stop-color="#01fff8"/><stop offset="0.1602" stop-color="#01fff7"/><stop offset="0.1758" stop-color="#06fff5"/><stop offset="0.1914" stop-color="#17fff4"/><stop offset="0.207" stop-color="#29fff2"/><stop offset="0.2227" stop-color="#3dfff1"/><stop offset="0.2383" stop-color="#50ffef"/><stop offset="0.2539" stop-color="#64ffed"/><stop offset="0.2695" stop-color="#78ffeb"/><stop offset="0.2852" stop-color="#8bffea"/><stop offset="0.3008" stop-color="#9effe7"/><stop offset="0.3164" stop-color="#b0ffe5"/><stop offset="0.332" stop-color="#c2ffe3"/><stop offset="0.3477" stop-color="#d2ffe1"/><stop offset="0.3633" stop-color="#e1ffde"/><stop offset="0.3789" stop-color="#eeffdc"/><stop offset="0.3945" stop-color="#f9ffd9"/><stop offset="0.4102" stop-color="#ffffd6"/><stop offset="0.4258" stop-color="#fffac8"/><stop offset="0.4414" stop-color="#fff1ba"/><stop offset="0.457" stop-color="#ffe8ad"/><stop offset="0.4727" stop-color="#ffdea0"/><stop offset="0.4883" stop-color="#ffd495"/><stop offset="0.5039" stop-color="#ffcb8a"/><stop offset="0.5195" stop-color="#ffc280"/><stop offset="0.5352" stop-color="#ffb976"/><stop offset="0.5508" stop-color="#ffb16e"/><stop offset="0.5664" stop-color="#ffa966"/><stop offset="0.582" stop-color="#ffa25e"/><stop offset="0.5977" stop-color="#ff9b57"/><stop offset="0.6133" stop-color="#ff9450"/><stop offset="0.6289" stop-color="#ff8e4a"/><stop offset="0.6445" stop-color="#ff8845"/><stop offset="0.6602" stop-color="#ff823f"/><stop offset="0.6758" stop-color="#ff7d3a"/><stop offset="0.6914" stop-color="#ff7835"/><stop offset="0.6992" stop-color="#ff7633"/></linearGradient>
<linearGradient id="g65" href="#gb"><stop offset="0.02344" stop-color="#01feff"/><stop offset="0.03906" stop-color="#01ffff"/><stop offset="0.05469" stop-color="#01ffff"/><stop offset="0.07031" stop-color="#01ffff"/><stop offset="0.08594" stop-color="#01fffe"/><stop offset="0.1016" stop-color="#01fffe"/><stop offset="0.1172" stop-color="#01fffd"/><stop offset="0.1328" stop-color="#01fffc"/><stop offset="0.1484" stop-color="#01fffb"/><stop offset="0.1641" stop-color="#01fffa"/><stop offset="0.1797" stop-color="#0bfff9"/><stop offset="0.1953" stop-color="#1dfff8"/><stop offset="0.2109" stop-color="#30fff6"/><stop offset="0.2266" stop-color="#44fff5"/><stop offset="0.2422" stop-color="#58fff3"/><stop offset="0.2578" stop-color="#6cfff2"/><stop offset="0.2734" stop-color="#80fff0"/><stop offset="0.2891" stop-color="#94ffee"/><stop offset="0.3047" stop-color="#a7ffec"/><stop offset="0.3203" stop-color="#b9ffeb"/><stop offset="0.3359" stop-color="#caffe8"/><stop offset="0.3516" stop-color="#daffe6"/><stop offset="0.3672" stop-color="#e9ffe4"/><stop offset="0.3828" stop-color="#f5ffe2"/><stop offset="0.3984" stop-color="#fdffdf"/><stop offset="0.4141" stop-color="#fffcd5"/><stop offset="0.4297" stop-color="#fff5c7"/><stop offset="0.4453" stop-color="#ffebb9"/><stop offset="0.4609" stop-color="#ffe1ac"/><stop offset="0.4766" stop-color="#ffd7a0"/><stop offset="0.4922" stop-color="#ffce95"/><stop offset="0.5078" stop-color="#ffc48a"/><stop offset="0.5234" stop-color="#ffbb80"/><stop offset="0.5391" stop-color="#ffb377"/><stop offset="0.5547" stop-color="#ffab6e"/><stop offset="0.5703" stop-color="#ffa366"/><stop offset="0.5859" stop-color="#ff9c5f"/><stop offset="0.6016" stop-color="#ff9558"/><stop offset="0.6172" stop-color="#ff8f51"/><stop offset="0.6328" stop-color="#ff894b"/><stop offset="0.6484" stop-color="#ff8345"/><stop offset="0.6641" stop-color="#ff7e40"/><stop offset="0.6797" stop-color="#ff783b"/><stop offset="0.6953" stop-color="#ff7436"/><stop offset="0.707" stop-color="#ff7033"/></linearGradient>
<linearGradient id="g66" href="#gb"><stop offset="0.02344" stop-color="#01fcff"/><stop offset="0.03906" stop-color="#01fdff"/><stop offset="0.05469" stop-color="#01feff"/><stop offset="0.07031" stop-color="#01feff"/><stop offset="0.08594" stop-color="#01ffff"/><stop offset="0.1016" stop-color="#01ffff"/><stop offset="0.1172" stop-color="#01ffff"/><stop offset="0.1328" stop-color="#01fffe"/><stop offset="0.1484" stop-color="#01fffe"/><stop offset="0.1641" stop-color="#01fffd"/><stop offset="0.1797" stop-color="#0cfffc"/><stop offset="0.1953" stop-color="#1efffb"/><stop offset="0.2109" stop-color="#32fffa"/><stop offset="0.2266" stop-color="#46fff9"/><stop offset="0.2422" stop-color="#5bfff8"/><stop offset="0.2578" stop-color="#6ffff6"/><stop offset="0.2734" stop-color="#84fff5"/><stop offset="0.2891" stop-color="#97fff3"/><stop offset="0.3047" stop-color="#abfff2"/><stop offset="0.3203" stop-color="#bdfff0"/><stop offset="0.3359" stop-color="#cfffee"/><stop offset="0.3516" stop-color="#dfffec"/><stop offset="0.3672" stop-color="#edffea"/><stop offset="0.3828" stop-color="#f8ffe8"/><stop offset="0.3984" stop-color="#ffffe5"/><stop offset="0.4141" stop-color="#fffad8"/><stop offset="0.4297" stop-color="#fff1ca"/><stop offset="0.4453" stop-color="#ffe7bc"/><stop offset="0.4609" stop-color="#ffddaf"/><stop offset="0.4766" stop-color="#ffd3a3"/><stop offset="0.4922" stop-color="#ffc997"/><stop offset="0.5078" stop-color="#ffc08d"/><stop offset="0.5234" stop-color="#ffb783"/><stop offset="0.5391" stop-color="#ffaf79"/><stop offset="0.5547" stop-color="#ffa771"/><stop offset="0.5703" stop-color="#ff9f69"/><stop offset="0.5859" stop-color="#ff9861"/><stop offset="0.6016" stop-color="#ff915a"/><stop offset="0.6172" stop-color="#ff8b53"/><stop offset="0.6328" stop-color="#ff854d"/><stop offset="0.6484" stop-color="#ff7f47"/><stop offset="0.6641" stop-color="#ff7a42"/><stop offset="0.6797" stop-color="#ff753d"/><stop offset="0.6953" stop-color="#ff7038"/><stop offset="0.7109" stop-color="#ff6c34"/><stop offset="0.7148" stop-color="#ff6b33"/></linearGradient>
<linearGradient id="g67" href="#gb"><stop offset="0.02344" stop-color="#01f9ff"/><stop offset="0.03906" stop-color="#01faff"/><stop offset="0.05469" stop-color="#01fbff"/><stop offset="0.07031" stop-color="#01fcff"/><stop offset="0.08594" stop-color="#01fcff"/><stop offset="0.1016" stop-color="#01fdff"/><stop offset="0.1172" stop-color="#01feff"/><stop offset="0.1328" stop-color="#01feff"/><stop offset="0.1484" stop-color="#01ffff"/><stop offset="0.1641" stop-color="#01ffff"/><stop offset="0.1797" stop-color="#0dffff"/><stop offset="0.1953" stop-color="#20fffe"/><stop offset="0.2109" stop-color="#34fffd"/><stop offset="0.2266" stop-color="#49fffd"/><stop offset="0.2422" stop-color="#5efffc"/><stop offset="0.2578" stop-color="#73fffb"/><stop offset="0.2734" stop-color="#87fff9"/><stop offset="0.2891" stop-color="#9bfff8"/><stop offset="0.3047" stop-color="#affff7"/><stop offset="0.3203" stop-color="#c2fff5"/><stop offset="0.3359" stop-color="#d3fff3"/><stop offset="0.3516" stop-color="#e3fff2"/><stop offset="0.3672" stop-color="#f0fff0"/><stop offset="0.3828" stop-color="#fbffee"/><stop offset="0.3984" stop-color="#fffee9"/><stop offset="0.4141" stop-color="#fff7da"/><stop offset="0.4297" stop-color="#ffedcc"/><stop offset="0.4453" stop-color="#ffe3bf"/><stop offset="0.4609" stop-color="#ffd9b2"/><stop offset="0.4766" stop-color="#ffcfa5"/><stop offset="0.4922" stop-color="#ffc59a"/><stop offset="0.5078" stop-color="#ffbb8f"/><stop offset="0.5234" stop-color="#ffb385"/><stop offset="0.5391" stop-color="#ffaa7c"/><stop offset="0.5547" stop-color="#ffa273"/><stop offset="0.5703" stop-color="#ff9b6b"/><stop offset="0.5859" stop-color="#ff9463"/><stop offset="0.6016" stop-color="#ff8d5c"/><stop offset="0.6172" stop-color="#ff8756"/><stop offset="0.6328" stop-color="#ff814f"/><stop offset="0.6484" stop-color="#ff7c4a"/><stop offset="0.6641" stop-color="#ff7744"/><stop offset="0.6797" stop-color="#ff723f"/><stop offset="0.6953" stop-color="#ff6d3a"/><stop offset="0.7109" stop-color="#ff6836"/><stop offset="0.7227" stop-color="#ff6532"/></linearGradient>
<linearGradient id="g68" href="#gb"><stop offset="0.02734" stop-color="#01f6ff"/><stop offset="0.04297" stop-color="#01f7ff"/><stop offset="0.05859" stop-color="#01f8ff"/><stop offset="0.07422" stop-color="#01f9ff"/><stop offset="0.08984" stop-color="#01f9ff"/><stop offset="0.1055" stop-color="#01faff"/><stop offset="0.1211" stop-color="#01fbff"/><stop offset="0.1367" stop-color="#01fcff"/><stop offset="0.1523" stop-color="#01fdff"/><stop offset="0.168" stop-color="#02fdff"/><stop offset="0.1836" stop-color="#13feff"/><stop offset="0.1992" stop-color="#26ffff"/><stop offset="0.2148" stop-color="#3bffff"/><stop offset="0.2305" stop-color="#51ffff"/><stop offset="0.2461" stop-color="#66fffe"/><stop offset="0.2617" stop-color="#7bfffe"/><stop offset="0.2773" stop-color="#90fffd"/><stop offset="0.293" stop-color="#a5fffc"/><stop offset="0.3086" stop-color="#b8fffb"/><stop offset="0.3242" stop-color="#cbfff9"/><stop offset="0.3398" stop-color="#dcfff8"/><stop offset="0.3555" stop-color="#ebfff6"/><stop offset="0.3711" stop-color="#f7fff5"/><stop offset="0.3867" stop-color="#fffff3"/><stop offset="0.4023" stop-color="#fffae7"/><stop offset="0.418" stop-color="#fff1d9"/><stop offset="0.4336" stop-color="#ffe7cb"/><stop offset="0.4492" stop-color="#ffdcbe"/><stop offset="0.4648" stop-color="#ffd2b1"/><stop offset="0.4805" stop-color="#ffc8a5"/><stop offset="0.4961" stop-color="#ffbe9a"/><stop offset="0.5117" stop-color="#ffb58f"/><stop offset="0.5273" stop-color="#ffac85"/><stop offset="0.543" stop-color="#ffa47c"/><stop offset="0.5586" stop-color="#ff9c74"/><stop offset="0.5742" stop-color="#ff956b"/><stop offset="0.5898" stop-color="#ff8e64"/><stop offset="0.6055" stop-color="#ff885d"/><stop offset="0.6211" stop-color="#ff8256"/><stop offset="0.6367" stop-color="#ff7c50"/><stop offset="0.6523" stop-color="#ff774a"/><stop offset="0.668" stop-color="#ff7245"/><stop offset="0.6836" stop-color="#ff6d40"/><stop offset="0.6992" stop-color="#ff683b"/><stop offset="0.7148" stop-color="#ff6436"/><stop offset="0.7305" stop-color="#ff6032"/></linearGradient>
<linearGradient id="g69" href="#gb"><stop offset="0.02734" stop-color="#01f2ff"/><stop offset="0.04297" stop-color="#01f3ff"/><stop offset="0.05859" stop-color="#01f4ff"/><stop offset="0.07422" stop-color="#01f5ff"/><stop offset="0.08984" stop-color="#01f6ff"/><stop offset="0.1055" stop-color="#01f7ff"/><stop offset="0.1211" stop-color="#01f8ff"/><stop offset="0.1367" stop-color="#01f9ff"/><stop offset="0.1523" stop-color="#01f9ff"/><stop offset="0.168" stop-color="#02faff"/><stop offset="0.1836" stop-color="#13fbff"/><stop offset="0.1992" stop-color="#27fcff"/><stop offset="0.2148" stop-color="#3cfdff"/><stop offset="0.2305" stop-color="#51feff"/><stop offset="0.2461" stop-color="#68feff"/><stop offset="0.2617" stop-color="#7effff"/><stop offset="0.2773" stop-color="#94ffff"/><stop offset="0.293" stop-color="#a9ffff"/><stop offset="0.3086" stop-color="#bdfffe"/><stop offset="0.3242" stop-color="#cffffd"/><stop offset="0.3398" stop-color="#e0fffc"/><stop offset="0.3555" stop-color="#effffb"/><stop offset="0.3711" stop-color="#fafffa"/><stop offset="0.3867" stop-color="#fffef6"/><stop offset="0.4023" stop-color="#fff7ea"/><stop offset="0.418" stop-color="#ffeddc"/><stop offset="0.4336" stop-color="#ffe2ce"/><stop offset="0.4492" stop-color="#ffd7c1"/><stop offset="0.4648" stop-color="#ffcdb4"/><stop offset="0.4805" stop-color="#ffc3a8"/><stop offset="0.4961" stop-color="#ffb99c"/><stop offset="0.5117" stop-color="#ffb092"/><stop offset="0.5273" stop-color="#ffa888"/><stop offset="0.543" stop-color="#ffa07f"/><stop offset="0.5586" stop-color="#ff9876"/><stop offset="0.5742" stop-color="#ff916e"/><stop offset="0.5898" stop-color="#ff8a66"/><stop offset="0.6055" stop-color="#ff845f"/><stop offset="0.6211" stop-color="#ff7e59"/><stop offset="0.6367" stop-color="#ff7852"/><stop offset="0.6523" stop-color="#ff734c"/><stop offset="0.668" stop-color="#ff6e47"/><stop offset="0.6836" stop-color="#ff6a42"/><stop offset="0.6992" stop-color="#ff653d"/><stop offset="0.7148" stop-color="#ff6138"/><stop offset="0.7305" stop-color="#ff5d34"/><stop offset="0.7383" stop-color="#ff5b32"/></linearGradient>
<linearGradient id="g70" href="#gb"><stop offset="0.03125" stop-color="#01eeff"/><stop offset="0.04688" stop-color="#01efff"/><stop offset="0.0625" stop-color="#01f0ff"/><stop offset="0.07812" stop-color="#01f1ff"/><stop offset="0.09375" stop-color="#01f2ff"/><stop offset="0.1094" stop-color="#01f3ff"/><stop offset="0.125" stop-color="#01f4ff"/><stop offset="0.1406" stop-color="#01f5ff"/><stop offset="0.1562" stop-color="#01f6ff"/><stop offset="0.1719" stop-color="#07f7ff"/><stop offset="0.1875" stop-color="#18f8ff"/><stop offset="0.2031" stop-color="#2cf9ff"/><stop offset="0.2188" stop-color="#41faff"/><stop offset="0.2344" stop-color="#57fbff"/><stop offset="0.25" stop-color="#6dfcff"/><stop offset="0.2656" stop-color="#83fcff"/><stop offset="0.2812" stop-color="#99fdff"/><stop offset="0.2969" stop-color="#affeff"/><stop offset="0.3125" stop-color="#c4ffff"/><stop offset="0.3281" stop-color="#d8ffff"/><stop offset="0.3438" stop-color="#e8ffff"/><stop offset="0.3594" stop-color="#f6fffe"/><stop offset="0.375" stop-color="#fefffd"/><stop offset="0.3906" stop-color="#fffaf5"/><stop offset="0.4062" stop-color="#fff1e8"/><stop offset="0.4219" stop-color="#ffe6db"/><stop offset="0.4375" stop-color="#ffdbcd"/><stop offset="0.4531" stop-color="#ffd0c0"/><stop offset="0.4688" stop-color="#ffc6b3"/><stop offset="0.4844" stop-color="#ffbca7"/><stop offset="0.5" stop-color="#ffb29c"/><stop offset="0.5156" stop-color="#ffaa92"/><stop offset="0.5312" stop-color="#ffa188"/><stop offset="0.5469" stop-color="#ff997f"/><stop offset="0.5625" stop-color="#ff9276"/><stop offset="0.5781" stop-color="#ff8b6e"/><stop offset="0.5938" stop-color="#ff8567"/><stop offset="0.6094" stop-color="#ff7f60"/><stop offset="0.625" stop-color="#ff7959"/><stop offset="0.6406" stop-color="#ff7353"/><stop offset="0.6562" stop-color="#ff6e4d"/><stop offset="0.6719" stop-color="#ff6a48"/><stop offset="0.6875" stop-color="#ff6542"/><stop offset="0.7031" stop-color="#ff613e"/><stop offset="0.7188" stop-color="#ff5d39"/><stop offset="0.7344" stop-color="#ff5935"/><stop offset="0.7461" stop-color="#ff5632"/></linearGradient>
<linearGradient id="g71" href="#gb"><stop offset="0.03125" stop-color="#01e9ff"/><stop offset="0.04688" stop-color="#01eaff"/><stop offset="0.0625" stop-color="#01ebff"/><stop offset="0.07812" stop-color="#01ecff"/><stop offset="0.09375" stop-color="#01edff"/><stop offset="0.1094" stop-color="#01eeff"/><stop offset="0.125" stop-color="#01efff"/><stop offset="0.1406" stop-color="#01f0ff"/><stop offset="0.1562" stop-color="#01f1ff"/><stop offset="0.1719" stop-color="#08f2ff"/><stop offset="0.1875" stop-color="#19f3ff"/><stop offset="0.2031" stop-color="#2cf4ff"/><stop offset="0.2188" stop-color="#41f5ff"/><stop offset="0.2344" stop-color="#56f7ff"/><stop offset="0.25" stop-color="#6cf8ff"/><stop offset="0.2656" stop-color="#82f9ff"/><stop offset="0.2812" stop-color="#98faff"/><stop offset="0.2969" stop-color="#aefbff"/><stop offset="0.3125" stop-color="#c3fcff"/><stop offset="0.3281" stop-color="#d6fdff"/><stop offset="0.3438" stop-color="#e8fdff"/><stop offset="0.3594" stop-color="#f7feff"/><stop offset="0.375" stop-color="#ffffff"/><stop offset="0.3906" stop-color="#fff7f7"/><stop offset="0.4062" stop-color="#ffedea"/><stop offset="0.4219" stop-color="#ffe1dd"/><stop offset="0.4375" stop-color="#ffd6cf"/><stop offset="0.4531" stop-color="#ffcbc2"/><stop offset="0.4688" stop-color="#ffc1b6"/><stop offset="0.4844" stop-color="#ffb7aa"/><stop offset="0.5" stop-color="#ffae9f"/><stop offset="0.5156" stop-color="#ffa594"/><stop offset="0.5312" stop-color="#ff9d8a"/><stop offset="0.5469" stop-color="#ff9581"/><stop offset="0.5625" stop-color="#ff8e79"/><stop offset="0.5781" stop-color="#ff8771"/><stop offset="0.5938" stop-color="#ff8169"/><stop offset="0.6094" stop-color="#ff7b62"/><stop offset="0.625" stop-color="#ff755b"/><stop offset="0.6406" stop-color="#ff7055"/><stop offset="0.6562" stop-color="#ff6b4f"/><stop offset="0.6719" stop-color="#ff664a"/><stop offset="0.6875" stop-color="#ff6244"/><stop offset="0.7031" stop-color="#ff5d40"/><stop offset="0.7188" stop-color="#ff593b"/><stop offset="0.7344" stop-color="#ff5637"/><stop offset="0.75" stop-color="#ff5232"/><stop offset="0.7539" stop-color="#ff5131"/></linearGradient>
<linearGradient id="g72" href="#gb"><stop offset="0.03125" stop-color="#01e4ff"/><stop offset="0.04688" stop-color="#01e5ff"/><stop offset="0.0625" stop-color="#01e6ff"/><stop offset="0.07812" stop-color="#01e7ff"/><stop offset="0.09375" stop-color="#01e8ff"/><stop offset="0.1094" stop-color="#01e9ff"/><stop offset="0.125" stop-color="#01eaff"/><stop offset="0.1406" stop-color="#01ebff"/><stop offset="0.1562" stop-color="#01ecff"/><stop offset="0.1719" stop-color="#08edff"/><stop offset="0.1875" stop-color="#1aeeff"/><stop offset="0.2031" stop-color="#2df0ff"/><stop offset="0.2188" stop-color="#41f1ff"/><stop offset="0.2344" stop-color="#56f2ff"/><stop offset="0.25" stop-color="#6cf3ff"/><stop offset="0.2656" stop-color="#81f4ff"/><stop offset="0.2812" stop-color="#97f5ff"/><stop offset="0.2969" stop-color="#acf6ff"/><stop offset="0.3125" stop-color="#c1f7ff"/><stop offset="0.3281" stop-color="#d5f9ff"/><stop offset="0.3438" stop-color="#e6faff"/><stop offset="0.3594" stop-color="#f5fbff"/><stop offset="0.375" stop-color="#fffcff"/><stop offset="0.3906" stop-color="#fff3f8"/><stop offset="0.4062" stop-color="#ffe8ec"/><stop offset="0.4219" stop-color="#ffdddf"/><stop offset="0.4375" stop-color="#ffd1d2"/><stop offset="0.4531" stop-color="#ffc6c5"/><stop offset="0.4688" stop-color="#ffbcb8"/><stop offset="0.4844" stop-color="#ffb2ac"/><stop offset="0.5" stop-color="#ffa9a1"/><stop offset="0.5156" stop-color="#ffa097"/><stop offset="0.5312" stop-color="#ff988d"/><stop offset="0.5469" stop-color="#ff9184"/><stop offset="0.5625" stop-color="#ff8a7b"/><stop offset="0.5781" stop-color="#ff8373"/><stop offset="0.5938" stop-color="#ff7d6b"/><stop offset="0.6094" stop-color="#ff7764"/><stop offset="0.625" stop-color="#ff715d"/><stop offset="0.6406" stop-color="#ff6c57"/><stop offset="0.6562" stop-color="#ff6751"/><stop offset="0.6719" stop-color="#ff624c"/><stop offset="0.6875" stop-color="#ff5e46"/><stop offset="0.7031" stop-color="#ff5a41"/><stop offset="0.7188" stop-color="#ff563d"/><stop offset="0.7344" stop-color="#ff5238"/><stop offset="0.75" stop-color="#ff4f34"/><stop offset="0.7617" stop-color="#ff4c31"/></linearGradient>
<linearGradient id="g73" href="#gb"><stop offset="0.03516" stop-color="#01e0ff"/><stop offset="0.05078" stop-color="#01e1ff"/><stop offset="0.06641" stop-color="#01e1ff"/><stop offset="0.08203" stop-color="#01e2ff"/><stop offset="0.09766" stop-color="#01e3ff"/><stop offset="0.1133" stop-color="#01e4ff"/><stop offset="0.1289" stop-color="#01e5ff"/><stop offset="0.1445" stop-color="#01e6ff"/><stop offset="0.1602" stop-color="#01e7ff"/><stop offset="0.1758" stop-color="#0de8ff"/><stop offset="0.1914" stop-color="#1fe9ff"/><stop offset="0.207" stop-color="#32ebff"/><stop offset="0.2227" stop-color="#46ecff"/><stop offset="0.2383" stop-color="#5bedff"/><stop offset="0.2539" stop-color="#70eeff"/><stop offset="0.2695" stop-color="#86efff"/><stop offset="0.2852" stop-color="#9bf0ff"/><stop offset="0.3008" stop-color="#b0f1ff"/><stop offset="0.3164" stop-color="#c5f3ff"/><stop offset="0.332" stop-color="#d8f4ff"/><stop offset="0.3477" stop-color="#e9f5ff"/><stop offset="0.3633" stop-color="#f7f6ff"/><stop offset="0.3789" stop-color="#fff7ff"/><stop offset="0.3945" stop-color="#ffecf7"/><stop offset="0.4102" stop-color="#ffe1eb"/><stop offset="0.4258" stop-color="#ffd5de"/><stop offset="0.4414" stop-color="#ffcad1"/><stop offset="0.457" stop-color="#ffbfc4"/><stop offset="0.4727" stop-color="#ffb5b8"/><stop offset="0.4883" stop-color="#ffabac"/><stop offset="0.5039" stop-color="#ffa2a1"/><stop offset="0.5195" stop-color="#ff9a97"/><stop offset="0.5352" stop-color="#ff928d"/><stop offset="0.5508" stop-color="#ff8a84"/><stop offset="0.5664" stop-color="#ff847b"/><stop offset="0.582" stop-color="#ff7d73"/><stop offset="0.5977" stop-color="#ff776c"/><stop offset="0.6133" stop-color="#ff7165"/><stop offset="0.6289" stop-color="#ff6c5e"/><stop offset="0.6445" stop-color="#ff6758"/><stop offset="0.6602" stop-color="#ff6252"/><stop offset="0.6758" stop-color="#ff5e4c"/><stop offset="0.6914" stop-color="#ff5a47"/><stop offset="0.707" stop-color="#ff5642"/><stop offset="0.7227" stop-color="#ff523e"/><stop offset="0.7383" stop-color="#ff4e39"/><stop offset="0.7539" stop-color="#ff4b35"/><stop offset="0.7695" stop-color="#ff4831"/></linearGradient>
<linearGradient id="g74" href="#gb"><stop offset="0.03516" stop-color="#01daff"/><stop offset="0.05078" stop-color="#01dbff"/><stop offset="0.06641" stop-color="#01dcff"/><stop offset="0.08203" stop-color="#01ddff"/><stop offset="0.09766" stop-color="#01deff"/><stop offset="0.1133" stop-color="#01dfff"/><stop offset="0.1289" stop-color="#01e0ff"/><stop offset="0.1445" stop-color="#01e1ff"/><stop offset="0.1602" stop-color="#01e2ff"/><stop offset="0.1758" stop-color="#0ee3ff"/><stop offset="0.1914" stop-color="#1fe4ff"/><stop offset="0.207" stop-color="#32e5ff"/><stop offset="0.2227" stop-color="#46e6ff"/><stop offset="0.2383" stop-color="#5be7ff"/><stop offset="0.2539" stop-color="#70e8ff"/><stop offset="0.2695" stop-color="#85e9ff"/><stop offset="0.2852" stop-color="#9aebff"/><stop offset="0.3008" stop-color="#afecff"/><stop offset="0.3164" stop-color="#c3edff"/><stop offset="0.332" stop-color="#d6eeff"/><stop offset="0.3477" stop-color="#e7f0ff"/><stop offset="0.3633" stop-color="#f6f1ff"/><stop offset="0.3789" stop-color="#fff2ff"/><stop offset="0.3945" stop-color="#ffe8f8"/><stop offset="0.4102" stop-color="#ffdced"/><stop offset="0.4258" stop-color="#ffd0e0"/><stop offset="0.4414" stop-color="#ffc4d3"/><stop offset="0.457" stop-color="#ffbac6"/><stop offset="0.4727" stop-color="#ffb0ba"/><stop offset="0.4883" stop-color="#ffa6af"/><stop offset="0.5039" stop-color="#ff9da4"/><stop offset="0.5195" stop-color="#ff9599"/><stop offset="0.5352" stop-color="#ff8d8f"/><stop offset="0.5508" stop-color="#ff8686"/><stop offset="0.5664" stop-color="#ff7f7e"/><stop offset="0.582" stop-color="#ff7976"/><stop offset="0.5977" stop-color="#ff736e"/><stop offset="0.6133" stop-color="#ff6d67"/><stop offset="0.6289" stop-color="#ff6860"/><stop offset="0.6445" stop-color="#ff635a"/><stop offset="0.6602" stop-color="#ff5f54"/><stop offset="0.6758" stop-color="#ff5a4e"/><stop offset="0.6914" stop-color="#ff5649"/><stop offset="0.707" stop-color="#ff5244"/><stop offset="0.7227" stop-color="#ff4f3f"/><stop offset="0.7383" stop-color="#ff4b3b"/><stop offset="0.7539" stop-color="#ff4837"/><stop offset="0.7695" stop-color="#ff4533"/><stop offset="0.7773" stop-color="#ff4331"/></linearGradient>
<linearGradient id="g75" href="#gb"><stop offset="0.03906" stop-color="#01d5ff"/><stop offset="0.05469" stop-color="#01d6ff"/><stop offset="0.07031" stop-color="#01d7ff"/><stop offset="0.08594" stop-color="#01d8ff"/><stop offset="0.1016" stop-color="#01d9ff"/><stop offset="0.1172" stop-color="#01daff"/><stop offset="0.1328" stop-color="#01daff"/><stop offset="0.1484" stop-color="#01dbff"/><stop offset="0.1641" stop-color="#03dcff"/><stop offset="0.1797" stop-color="#12ddff"/><stop offset="0.1953" stop-color="#24deff"/><stop offset="0.2109" stop-color="#37dfff"/><stop offset="0.2266" stop-color="#4be0ff"/><stop offset="0.2422" stop-color="#60e1ff"/><stop offset="0.2578" stop-color="#75e3ff"/><stop offset="0.2734" stop-color="#8ae4ff"/><stop offset="0.2891" stop-color="#9ee5ff"/><stop offset="0.3047" stop-color="#b3e6ff"/><stop offset="0.3203" stop-color="#c6e7ff"/><stop offset="0.3359" stop-color="#d9e8ff"/><stop offset="0.3516" stop-color="#eaeaff"/><stop offset="0.3672" stop-color="#f7ebff"/><stop offset="0.3828" stop-color="#ffecff"/><stop offset="0.3984" stop-color="#ffe0f7"/><stop offset="0.4141" stop-color="#ffd3ec"/><stop offset="0.4297" stop-color="#ffc8df"/><stop offset="0.4453" stop-color="#ffbcd2"/><stop offset="0.4609" stop-color="#ffb2c6"/><stop offset="0.4766" stop-color="#ffa8ba"/><stop offset="0.4922" stop-color="#ff9fae"/><stop offset="0.5078" stop-color="#ff96a3"/><stop offset="0.5234" stop-color="#ff8e99"/><stop offset="0.5391" stop-color="#ff878f"/><stop offset="0.5547" stop-color="#ff8086"/><stop offset="0.5703" stop-color="#ff797e"/><stop offset="0.5859" stop-color="#ff7376"/><stop offset="0.6016" stop-color="#ff6e6e"/><stop offset="0.6172" stop-color="#ff6867"/><stop offset="0.6328" stop-color="#ff6361"/><stop offset="0.6484" stop-color="#ff5f5a"/><stop offset="0.6641" stop-color="#ff5a55"/><stop offset="0.6797" stop-color="#ff564f"/><stop offset="0.6953" stop-color="#ff524a"/><stop offset="0.7109" stop-color="#ff4e45"/><stop offset="0.7266" stop-color="#ff4b40"/><stop offset="0.7422" stop-color="#ff473c"/><stop offset="0.7578" stop-color="#ff4437"/><stop offset="0.7734" stop-color="#ff4133"/><stop offset="0.7852" stop-color="#ff3f31"/></linearGradient>
<linearGradient id="g76" href="#gb"><stop offset="0.03906" stop-color="#01d0ff"/><stop offset="0.05469" stop-color="#01d1ff"/><stop offset="0.07031" stop-color="#01d1ff"/><stop offset="0.08594" stop-color="#01d2ff"/><stop offset="0.1016" stop-color="#01d3ff"/><stop offset="0.1172" stop-color="#01d4ff"/><stop offset="0.1328" stop-color="#01d5ff"/><stop offset="0.1484" stop-color="#01d6ff"/><stop offset="0.1641" stop-color="#03d6ff"/><stop offset="0.1797" stop-color="#13d7ff"/><stop offset="0.1953" stop-color="#25d8ff"/><stop offset="0.2109" stop-color="#38d9ff"/><stop offset="0.2266" stop-color="#4bdaff"/><stop offset="0.2422" stop-color="#5fdbff"/><stop offset="0.2578" stop-color="#74dcff"/><stop offset="0.2734" stop-color="#89ddff"/><stop offset="0.2891" stop-color="#9ddeff"/><stop offset="0.3047" stop-color="#b2e0ff"/><stop offset="0.3203" stop-color="#c5e1ff"/><stop offset="0.3359" stop-color="#d7e2ff"/><stop offset="0.3516" stop-color="#e8e3ff"/><stop offset="0.3672" stop-color="#f6e4ff"/><stop offset="0.3828" stop-color="#ffe6ff"/><stop offset="0.3984" stop-color="#ffdaf9"/><stop offset="0.4141" stop-color="#ffceee"/><stop offset="0.4297" stop-color="#ffc2e1"/><stop offset="0.4453" stop-color="#ffb7d5"/><stop offset="0.4609" stop-color="#ffadc8"/><stop offset="0.4766" stop-color="#ffa3bc"/><stop offset="0.4922" stop-color="#ff9ab1"/><stop offset="0.5078" stop-color="#ff91a6"/><stop offset="0.5234" stop-color="#ff8a9b"/><stop offset="0.5391" stop-color="#ff8292"/><stop offset="0.5547" stop-color="#ff7b89"/><stop offset="0.5703" stop-color="#ff7580"/><stop offset="0.5859" stop-color="#ff6f78"/><stop offset="0.6016" stop-color="#ff6a71"/><stop offset="0.6172" stop-color="#ff6469"/><stop offset="0.6328" stop-color="#ff5f63"/><stop offset="0.6484" stop-color="#ff5b5c"/><stop offset="0.6641" stop-color="#ff5757"/><stop offset="0.6797" stop-color="#ff5251"/><stop offset="0.6953" stop-color="#ff4f4c"/><stop offset="0.7109" stop-color="#ff4b47"/><stop offset="0.7266" stop-color="#ff4742"/><stop offset="0.7422" stop-color="#ff443d"/><stop offset="0.7578" stop-color="#ff4139"/><stop offset="0.7734" stop-color="#ff3e35"/><stop offset="0.7891" stop-color="#ff3b31"/><stop offset="0.793" stop-color="#ff3b30"/></linearGradient>
<linearGradient id="g77" href="#gb"><stop offset="0.03906" stop-color="#01caff"/><stop offset="0.05469" stop-color="#01cbff"/><stop offset="0.07031" stop-color="#01ccff"/><stop offset="0.08594" stop-color="#01cdff"/><stop offset="0.1016" stop-color="#01cdff"/><stop offset="0.1172" stop-color="#01ceff"/><stop offset="0.1328" stop-color="#01cfff"/><stop offset="0.1484" stop-color="#01d0ff"/><stop offset="0.1641" stop-color="#04d0ff"/><stop offset="0.1797" stop-color="#13d1ff"/><stop offset="0.1953" stop-color="#25d2ff"/><stop offset="0.2109" stop-color="#38d3ff"/><stop offset="0.2266" stop-color="#4bd4ff"/><stop offset="0.2422" stop-color="#5fd5ff"/><stop offset="0.2578" stop-color="#73d6ff"/><stop offset="0.2734" stop-color="#88d7ff"/><stop offset="0.2891" stop-color="#9cd8ff"/><stop offset="0.3047" stop-color="#b0d9ff"/><stop offset="0.3203" stop-color="#c4daff"/><stop offset="0.3359" stop-color="#d6dbff"/><stop offset="0.3516" stop-color="#e6dcff"/><stop offset="0.3672" stop-color="#f4ddff"/><stop offset="0.3828" stop-color="#fedfff"/><stop offset="0.3984" stop-color="#ffd5fa"/><stop offset="0.4141" stop-color="#ffc8ef"/><stop offset="0.4297" stop-color="#ffbde3"/><stop offset="0.4453" stop-color="#ffb2d7"/><stop offset="0.4609" stop-color="#ffa7ca"/><stop offset="0.4766" stop-color="#ff9ebe"/><stop offset="0.4922" stop-color="#ff95b3"/><stop offset="0.5078" stop-color="#ff8da8"/><stop offset="0.5234" stop-color="#ff859e"/><stop offset="0.5391" stop-color="#ff7e94"/><stop offset="0.5547" stop-color="#ff778b"/><stop offset="0.5703" stop-color="#ff7182"/><stop offset="0.5859" stop-color="#ff6b7a"/><stop offset="0.6016" stop-color="#ff6673"/><stop offset="0.6172" stop-color="#ff606c"/><stop offset="0.6328" stop-color="#ff5c65"/><stop offset="0.6484" stop-color="#ff575f"/><stop offset="0.6641" stop-color="#ff5359"/><stop offset="0.6797" stop-color="#ff4f53"/><stop offset="0.6953" stop-color="#ff4b4e"/><stop offset="0.7109" stop-color="#ff4848"/><stop offset="0.7266" stop-color="#ff4444"/><stop offset="0.7422" stop-color="#ff413f"/><stop offset="0.7578" stop-color="#ff3e3b"/><stop offset="0.7734" stop-color="#ff3b37"/><stop offset="0.7891" stop-color="#ff3933"/><stop offset="0.8008" stop-color="#ff3730"/></linearGradient>
<linearGradient id="g78" href="#gb"><stop offset="0.04297" stop-color="#01c5ff"/><stop offset="0.05859" stop-color="#01c6ff"/><stop offset="0.07422" stop-color="#01c6ff"/><stop offset="0.08984" stop-color="#01c7ff"/><stop offset="0.1055" stop-color="#01c8ff"/><stop offset="0.1211" stop-color="#01c8ff"/><stop offset="0.1367" stop-color="#01c9ff"/><stop offset="0.1523" stop-color="#01caff"/><stop offset="0.168" stop-color="#08caff"/><stop offset="0.1836" stop-color="#18cbff"/><stop offset="0.1992" stop-color="#2accff"/><stop offset="0.2148" stop-color="#3dcdff"/><stop offset="0.2305" stop-color="#50ceff"/><stop offset="0.2461" stop-color="#64ceff"/><stop offset="0.2617" stop-color="#78cfff"/><stop offset="0.2773" stop-color="#8cd0ff"/><stop offset="0.293" stop-color="#a0d1ff"/><stop offset="0.3086" stop-color="#b4d2ff"/><stop offset="0.3242" stop-color="#c7d3ff"/><stop offset="0.3398" stop-color="#d9d4ff"/><stop offset="0.3555" stop-color="#e9d5ff"/><stop offset="0.3711" stop-color="#f6d6ff"/><stop offset="0.3867" stop-color="#ffd7ff"/><stop offset="0.4023" stop-color="#ffccf9"/><stop offset="0.418" stop-color="#ffc0ee"/><stop offset="0.4336" stop-color="#ffb4e2"/><stop offset="0.4492" stop-color="#ffa9d6"/><stop offset="0.4648" stop-color="#ff9fca"/><stop offset="0.4805" stop-color="#ff96be"/><stop offset="0.4961" stop-color="#ff8eb2"/><stop offset="0.5117" stop-color="#ff86a8"/><stop offset="0.5273" stop-color="#ff7e9e"/><stop offset="0.543" stop-color="#ff7794"/><stop offset="0.5586" stop-color="#ff718b"/><stop offset="0.5742" stop-color="#ff6b83"/><stop offset="0.5898" stop-color="#ff657b"/><stop offset="0.6055" stop-color="#ff6073"/><stop offset="0.6211" stop-color="#ff5b6c"/><stop offset="0.6367" stop-color="#ff5765"/><stop offset="0.6523" stop-color="#ff525f"/><stop offset="0.668" stop-color="#ff4e59"/><stop offset="0.6836" stop-color="#ff4b53"/><stop offset="0.6992" stop-color="#ff474e"/><stop offset="0.7148" stop-color="#ff4449"/><stop offset="0.7305" stop-color="#ff4044"/><stop offset="0.7461" stop-color="#ff3d40"/><stop offset="0.7617" stop-color="#ff3a3c"/><stop offset="0.7773" stop-color="#ff3838"/><stop offset="0.793" stop-color="#ff3534"/><stop offset="0.8086" stop-color="#ff3330"/></linearGradient>
<linearGradient id="g79" href="#gb"><stop offset="0.04297" stop-color="#01bfff"/><stop offset="0.05859" stop-color="#01c0ff"/><stop offset="0.07422" stop-color="#01c1ff"/><stop offset="0.08984" stop-color="#01c1ff"/><stop offset="0.1055" stop-color="#01c2ff"/><stop offset="0.1211" stop-color="#01c2ff"/><stop offset="0.1367" stop-color="#01c3ff"/><stop offset="0.1523" stop-color="#01c4ff"/><stop offset="0.168" stop-color="#09c4ff"/><stop offset="0.1836" stop-color="#19c5ff"/><stop offset="0.1992" stop-color="#2ac6ff"/><stop offset="0.2148" stop-color="#3dc6ff"/><stop offset="0.2305" stop-color="#50c7ff"/><stop offset="0.2461" stop-color="#63c8ff"/><stop offset="0.2617" stop-color="#77c9ff"/><stop offset="0.2773" stop-color="#8bc9ff"/><stop offset="0.293" stop-color="#9fcaff"/><stop offset="0.3086" stop-color="#b3cbff"/><stop offset="0.3242" stop-color="#c5ccff"/><stop offset="0.3398" stop-color="#d7cdff"/><stop offset="0.3555" stop-color="#e7ceff"/><stop offset="0.3711" stop-color="#f5cfff"/><stop offset="0.3867" stop-color="#fed0ff"/><stop offset="0.4023" stop-color="#ffc6fa"/><stop offset="0.418" stop-color="#ffbaf0"/><stop offset="0.4336" stop-color="#ffafe4"/><stop offset="0.4492" stop-color="#ffa4d8"/><stop offset="0.4648" stop-color="#ff9acc"/><stop offset="0.4805" stop-color="#ff91c0"/><stop offset="0.4961" stop-color="#ff89b5"/><stop offset="0.5117" stop-color="#ff81aa"/><stop offset="0.5273" stop-color="#ff7aa0"/><stop offset="0.543" stop-color="#ff7396"/><stop offset="0.5586" stop-color="#ff6d8d"/><stop offset="0.5742" stop-color="#ff6785"/><stop offset="0.5898" stop-color="#ff617d"/><stop offset="0.6055" stop-color="#ff5c75"/><stop offset="0.6211" stop-color="#ff576e"/><stop offset="0.6367" stop-color="#ff5367"/><stop offset="0.6523" stop-color="#ff4f61"/><stop offset="0.668" stop-color="#ff4b5b"/><stop offset="0.6836" stop-color="#ff4755"/><stop offset="0.6992" stop-color="#ff4450"/><stop offset="0.7148" stop-color="#ff404b"/><stop offset="0.7305" stop-color="#ff3d46"/><stop offset="0.7461" stop-color="#ff3a42"/><stop offset="0.7617" stop-color="#ff373d"/><stop offset="0.7773" stop-color="#ff3539"/><stop offset="0.793" stop-color="#ff3235"/><stop offset="0.8086" stop-color="#ff3032"/><stop offset="0.8164" stop-color="#ff2f30"/></linearGradient>
<linearGradient id="g80" href="#gb"><stop offset="0.04688" stop-color="#01baff"/><stop offset="0.0625" stop-color="#01baff"/><stop offset="0.07812" stop-color="#01bbff"/><stop offset="0.09375" stop-color="#01bbff"/><stop offset="0.1094" stop-color="#01bcff"/><stop offset="0.125" stop-color="#01bcff"/><stop offset="0.1406" stop-color="#01bdff"/><stop offset="0.1562" stop-color="#01bdff"/><stop offset="0.1719" stop-color="#0dbeff"/><stop offset="0.1875" stop-color="#1dbfff"/><stop offset="0.2031" stop-color="#2fbfff"/><stop offset="0.2188" stop-color="#41c0ff"/><stop offset="0.2344" stop-color="#55c1ff"/><stop offset="0.25" stop-color="#68c1ff"/><stop offset="0.2656" stop-color="#7cc2ff"/><stop offset="0.2812" stop-color="#8fc3ff"/><stop offset="0.2969" stop-color="#a3c3ff"/><stop offset="0.3125" stop-color="#b6c4ff"/><stop offset="0.3281" stop-color="#c8c5ff"/><stop offset="0.3438" stop-color="#dac6ff"/><stop offset="0.3594" stop-color="#e9c7ff"/><stop offset="0.375" stop-color="#f6c7ff"/><stop offset="0.3906" stop-color="#ffc8ff"/><stop offset="0.4062" stop-color="#ffbdf9"/><stop offset="0.4219" stop-color="#ffb1ef"/><stop offset="0.4375" stop-color="#ffa6e3"/><stop offset="0.4531" stop-color="#ff9cd7"/><stop offset="0.4688" stop-color="#ff92cb"/><stop offset="0.4844" stop-color="#ff8abf"/><stop offset="0.5" stop-color="#ff82b4"/><stop offset="0.5156" stop-color="#ff7aaa"/><stop offset="0.5312" stop-color="#ff73a0"/><stop offset="0.5469" stop-color="#ff6d96"/><stop offset="0.5625" stop-color="#ff678d"/><stop offset="0.5781" stop-color="#ff6185"/><stop offset="0.5938" stop-color="#ff5c7d"/><stop offset="0.6094" stop-color="#ff5776"/><stop offset="0.625" stop-color="#ff526e"/><stop offset="0.6406" stop-color="#ff4e68"/><stop offset="0.6562" stop-color="#ff4a62"/><stop offset="0.6719" stop-color="#ff465c"/><stop offset="0.6875" stop-color="#ff4356"/><stop offset="0.7031" stop-color="#ff4051"/><stop offset="0.7188" stop-color="#ff3c4c"/><stop offset="0.7344" stop-color="#ff3947"/><stop offset="0.75" stop-color="#ff3742"/><stop offset="0.7656" stop-color="#ff343e"/><stop offset="0.7812" stop-color="#ff313a"/><stop offset="0.7969" stop-color="#ff2f36"/><stop offset="0.8125" stop-color="#ff2d32"/><stop offset="0.8242" stop-color="#ff2b30"/></linearGradient>
<linearGradient id="g81" href="#gb"><stop offset="0.04688" stop-color="#01b4ff"/><stop offset="0.0625" stop-color="#01b5ff"/><stop offset="0.07812" stop-color="#01b5ff"/><stop offset="0.09375" stop-color="#01b5ff"/><stop offset="0.1094" stop-color="#01b6ff"/><stop offset="0.125" stop-color="#01b6ff"/><stop offset="0.1406" stop-color="#01b7ff"/><stop offset="0.1562" stop-color="#01b7ff"/><stop offset="0.1719" stop-color="#0eb8ff"/><stop offset="0.1875" stop-color="#1eb8ff"/><stop offset="0.2031" stop-color="#2fb9ff"/><stop offset="0.2188" stop-color="#42b9ff"/><stop offset="0.2344" stop-color="#54baff"/><stop offset="0.25" stop-color="#68baff"/><stop offset="0.2656" stop-color="#7bbbff"/><stop offset="0.2812" stop-color="#8fbcff"/><stop offset="0.2969" stop-color="#a2bcff"/><stop offset="0.3125" stop-color="#b5bdff"/><stop offset="0.3281" stop-color="#c7beff"/><stop offset="0.3438" stop-color="#d8beff"/><stop offset="0.3594" stop-color="#e8bfff"/><stop offset="0.375" stop-color="#f5c0ff"/><stop offset="0.3906" stop-color="#fec0ff"/><stop offset="0.4062" stop-color="#ffb7fa"/><stop offset="0.4219" stop-color="#ffabf0"/><stop offset="0.4375" stop-color="#ffa0e5"/><stop offset="0.4531" stop-color="#ff96d9"/><stop offset="0.4688" stop-color="#ff8dcd"/><stop offset="0.4844" stop-color="#ff84c2"/><stop offset="0.5" stop-color="#ff7cb7"/><stop offset="0.5156" stop-color="#ff75ac"/><stop offset="0.5312" stop-color="#ff6ea2"/><stop offset="0.5469" stop-color="#ff6899"/><stop offset="0.5625" stop-color="#ff6290"/><stop offset="0.5781" stop-color="#ff5d87"/><stop offset="0.5938" stop-color="#ff587f"/><stop offset="0.6094" stop-color="#ff5378"/><stop offset="0.625" stop-color="#ff4f71"/><stop offset="0.6406" stop-color="#ff4a6a"/><stop offset="0.6562" stop-color="#ff4763"/><stop offset="0.6719" stop-color="#ff435e"/><stop offset="0.6875" stop-color="#ff3f58"/><stop offset="0.7031" stop-color="#ff3c52"/><stop offset="0.7188" stop-color="#ff394d"/><stop offset="0.7344" stop-color="#ff3649"/><stop offset="0.75" stop-color="#ff3444"/><stop offset="0.7656" stop-color="#ff3140"/><stop offset="0.7812" stop-color="#ff2e3c"/><stop offset="0.7969" stop-color="#ff2c38"/><stop offset="0.8125" stop-color="#ff2a34"/><stop offset="0.8242" stop-color="#ff2831"/></linearGradient>
<linearGradient id="g82" href="#gb"><stop offset="0.05078" stop-color="#01afff"/><stop offset="0.06641" stop-color="#01afff"/><stop offset="0.08203" stop-color="#01afff"/><stop offset="0.09766" stop-color="#01b0ff"/><stop offset="0.1133" stop-color="#01b0ff"/><stop offset="0.1289" stop-color="#01b0ff"/><stop offset="0.1445" stop-color="#01b1ff"/><stop offset="0.1602" stop-color="#04b1ff"/><stop offset="0.1758" stop-color="#12b1ff"/><stop offset="0.1914" stop-color="#23b2ff"/><stop offset="0.207" stop-color="#34b2ff"/><stop offset="0.2227" stop-color="#46b3ff"/><stop offset="0.2383" stop-color="#59b3ff"/><stop offset="0.2539" stop-color="#6cb4ff"/><stop offset="0.2695" stop-color="#7fb4ff"/><stop offset="0.2852" stop-color="#92b5ff"/><stop offset="0.3008" stop-color="#a6b5ff"/><stop offset="0.3164" stop-color="#b8b6ff"/><stop offset="0.332" stop-color="#cab6ff"/><stop offset="0.3477" stop-color="#dbb7ff"/><stop offset="0.3633" stop-color="#eab7ff"/><stop offset="0.3789" stop-color="#f7b8ff"/><stop offset="0.3945" stop-color="#ffb9ff"/><stop offset="0.4102" stop-color="#ffaef9"/><stop offset="0.4258" stop-color="#ffa2ef"/><stop offset="0.4414" stop-color="#ff98e4"/><stop offset="0.457" stop-color="#ff8ed8"/><stop offset="0.4727" stop-color="#ff85cc"/><stop offset="0.4883" stop-color="#ff7dc1"/><stop offset="0.5039" stop-color="#ff76b6"/><stop offset="0.5195" stop-color="#ff6fac"/><stop offset="0.5352" stop-color="#ff68a2"/><stop offset="0.5508" stop-color="#ff6298"/><stop offset="0.5664" stop-color="#ff5d90"/><stop offset="0.582" stop-color="#ff5787"/><stop offset="0.5977" stop-color="#ff537f"/><stop offset="0.6133" stop-color="#ff4e78"/><stop offset="0.6289" stop-color="#ff4a71"/><stop offset="0.6445" stop-color="#ff466a"/><stop offset="0.6602" stop-color="#ff4264"/><stop offset="0.6758" stop-color="#ff3f5e"/><stop offset="0.6914" stop-color="#ff3b58"/><stop offset="0.707" stop-color="#ff3853"/><stop offset="0.7227" stop-color="#ff354e"/><stop offset="0.7383" stop-color="#ff3249"/><stop offset="0.7539" stop-color="#ff3045"/><stop offset="0.7695" stop-color="#ff2d40"/><stop offset="0.7852" stop-color="#ff2b3c"/><stop offset="0.8008" stop-color="#ff2938"/><stop offset="0.8125" stop-color="#ff2736"/></linearGradient>
<linearGradient id="g83" href="#gb"><stop offset="0.05078" stop-color="#01a9ff"/><stop offset="0.06641" stop-color="#01a9ff"/><stop offset="0.08203" stop-color="#01a9ff"/><stop offset="0.09766" stop-color="#01aaff"/><stop offset="0.1133" stop-color="#01aaff"/><stop offset="0.1289" stop-color="#01aaff"/><stop offset="0.1445" stop-color="#01aaff"/><stop offset="0.1602" stop-color="#04abff"/><stop offset="0.1758" stop-color="#13abff"/><stop offset="0.1914" stop-color="#23abff"/><stop offset="0.207" stop-color="#34acff"/><stop offset="0.2227" stop-color="#46acff"/><stop offset="0.2383" stop-color="#59acff"/><stop offset="0.2539" stop-color="#6cadff"/><stop offset="0.2695" stop-color="#7fadff"/><stop offset="0.2852" stop-color="#92adff"/><stop offset="0.3008" stop-color="#a4aeff"/><stop offset="0.3164" stop-color="#b7aeff"/><stop offset="0.332" stop-color="#c9afff"/><stop offset="0.3477" stop-color="#d9afff"/><stop offset="0.3633" stop-color="#e9b0ff"/><stop offset="0.3789" stop-color="#f5b0ff"/><stop offset="0.3945" stop-color="#feb1ff"/><stop offset="0.4102" stop-color="#ffa8fb"/><stop offset="0.4258" stop-color="#ff9cf1"/><stop offset="0.4414" stop-color="#ff92e6"/><stop offset="0.457" stop-color="#ff89da"/><stop offset="0.4727" stop-color="#ff80ce"/><stop offset="0.4883" stop-color="#ff78c3"/><stop offset="0.5039" stop-color="#ff70b8"/><stop offset="0.5195" stop-color="#ff6aae"/><stop offset="0.5352" stop-color="#ff63a4"/><stop offset="0.5508" stop-color="#ff5e9b"/><stop offset="0.5664" stop-color="#ff5892"/><stop offset="0.582" stop-color="#ff5389"/><stop offset="0.5977" stop-color="#ff4e81"/><stop offset="0.6133" stop-color="#ff4a7a"/><stop offset="0.6289" stop-color="#ff4673"/><stop offset="0.6445" stop-color="#ff426c"/><stop offset="0.6602" stop-color="#ff3f66"/><stop offset="0.6758" stop-color="#ff3b60"/><stop offset="0.6914" stop-color="#ff385a"/><stop offset="0.707" stop-color="#ff3555"/><stop offset="0.7227" stop-color="#ff3250"/><stop offset="0.7383" stop-color="#ff2f4b"/><stop offset="0.7539" stop-color="#ff2d46"/><stop offset="0.7695" stop-color="#ff2b42"/><stop offset="0.7852" stop-color="#ff283e"/><stop offset="0.7969" stop-color="#ff273b"/></linearGradient>
<linearGradient id="g84" href="#gb"><stop offset="0.05469" stop-color="#01a3ff"/><stop offset="0.07031" stop-color="#01a3ff"/><stop offset="0.08594" stop-color="#01a3ff"/><stop offset="0.1016" stop-color="#01a4ff"/><stop offset="0.1172" stop-color="#01a4ff"/><stop offset="0.1328" stop-color="#01a4ff"/><stop offset="0.1484" stop-color="#01a4ff"/><stop offset="0.1641" stop-color="#08a4ff"/><stop offset="0.1797" stop-color="#17a5ff"/><stop offset="0.1953" stop-color="#27a5ff"/><stop offset="0.2109" stop-color="#39a5ff"/><stop offset="0.2266" stop-color="#4ba5ff"/><stop offset="0.2422" stop-color="#5da6ff"/><stop offset="0.2578" stop-color="#70a6ff"/><stop offset="0.2734" stop-color="#83a6ff"/><stop offset="0.2891" stop-color="#95a6ff"/><stop offset="0.3047" stop-color="#a8a7ff"/><stop offset="0.3203" stop-color="#baa7ff"/><stop offset="0.3359" stop-color="#cca7ff"/><stop offset="0.3516" stop-color="#dca8ff"/><stop offset="0.3672" stop-color="#eba8ff"/><stop offset="0.3828" stop-color="#f7a8ff"/><stop offset="0.3984" stop-color="#ffa9ff"/><stop offset="0.4141" stop-color="#ff9efa"/><stop offset="0.4297" stop-color="#ff94f0"/><stop offset="0.4453" stop-color="#ff8ae5"/><stop offset="0.4609" stop-color="#ff81d9"/><stop offset="0.4766" stop-color="#ff78ce"/><stop offset="0.4922" stop-color="#ff71c3"/><stop offset="0.5078" stop-color="#ff6ab8"/><stop offset="0.5234" stop-color="#ff63ae"/><stop offset="0.5391" stop-color="#ff5da4"/><stop offset="0.5547" stop-color="#ff589b"/><stop offset="0.5703" stop-color="#ff5392"/><stop offset="0.5859" stop-color="#ff4e89"/><stop offset="0.6016" stop-color="#ff4982"/><stop offset="0.6172" stop-color="#ff457a"/><stop offset="0.6328" stop-color="#ff4173"/><stop offset="0.6484" stop-color="#ff3e6d"/><stop offset="0.6641" stop-color="#ff3a66"/><stop offset="0.6797" stop-color="#ff3760"/><stop offset="0.6953" stop-color="#ff345b"/><stop offset="0.7109" stop-color="#ff3155"/><stop offset="0.7266" stop-color="#ff2e50"/><stop offset="0.7422" stop-color="#ff2c4c"/><stop offset="0.7578" stop-color="#ff2947"/><stop offset="0.7734" stop-color="#ff2743"/><stop offset="0.7812" stop-color="#ff2641"/></linearGradient>
<linearGradient id="g85" href="#gb"><stop offset="0.05469" stop-color="#019dff"/><stop offset="0.07031" stop-color="#019dff"/><stop offset="0.08594" stop-color="#019eff"/><stop offset="0.1016" stop-color="#019eff"/><stop offset="0.1172" stop-color="#019eff"/><stop offset="0.1328" stop-color="#019eff"/><stop offset="0.1484" stop-color="#019eff"/><stop offset="0.1641" stop-color="#099eff"/><stop offset="0.1797" stop-color="#189eff"/><stop offset="0.1953" stop-color="#289eff"/><stop offset="0.2109" stop-color="#399eff"/><stop offset="0.2266" stop-color="#4b9fff"/><stop offset="0.2422" stop-color="#5d9fff"/><stop offset="0.2578" stop-color="#6f9fff"/><stop offset="0.2734" stop-color="#829fff"/><stop offset="0.2891" stop-color="#959fff"/><stop offset="0.3047" stop-color="#a79fff"/><stop offset="0.3203" stop-color="#b9a0ff"/><stop offset="0.3359" stop-color="#caa0ff"/><stop offset="0.3516" stop-color="#daa0ff"/><stop offset="0.3672" stop-color="#e9a0ff"/><stop offset="0.3828" stop-color="#f6a0ff"/><stop offset="0.3984" stop-color="#fea0ff"/><stop offset="0.4141" stop-color="#ff98fb"/><stop offset="0.4297" stop-color="#ff8df1"/><stop offset="0.4453" stop-color="#ff84e7"/><stop offset="0.4609" stop-color="#ff7bdb"/><stop offset="0.4766" stop-color="#ff73d0"/><stop offset="0.4922" stop-color="#ff6bc5"/><stop offset="0.5078" stop-color="#ff65ba"/><stop offset="0.5234" stop-color="#ff5eb0"/><stop offset="0.5391" stop-color="#ff59a6"/><stop offset="0.5547" stop-color="#ff539d"/><stop offset="0.5703" stop-color="#ff4e94"/><stop offset="0.5859" stop-color="#ff4a8c"/><stop offset="0.6016" stop-color="#ff4584"/><stop offset="0.6172" stop-color="#ff417c"/><stop offset="0.6328" stop-color="#ff3d75"/><stop offset="0.6484" stop-color="#ff3a6f"/><stop offset="0.6641" stop-color="#ff3768"/><stop offset="0.6797" stop-color="#ff3462"/><stop offset="0.6953" stop-color="#ff315d"/><stop offset="0.7109" stop-color="#ff2e57"/><stop offset="0.7266" stop-color="#ff2b52"/><stop offset="0.7422" stop-color="#ff294d"/><stop offset="0.7578" stop-color="#ff2649"/><stop offset="0.7617" stop-color="#ff2648"/></linearGradient>
<linearGradient id="g86" href="#gb"><stop offset="0.05859" stop-color="#0198ff"/><stop offset="0.07422" stop-color="#0198ff"/><stop offset="0.08984" stop-color="#0198ff"/><stop offset="0.1055" stop-color="#0198ff"/><stop offset="0.1211" stop-color="#0198ff"/><stop offset="0.1367" stop-color="#0198ff"/><stop offset="0.1523" stop-color="#0198ff"/><stop offset="0.168" stop-color="#0d98ff"/><stop offset="0.1836" stop-color="#1c98ff"/><stop offset="0.1992" stop-color="#2c98ff"/><stop offset="0.2148" stop-color="#3d98ff"/><stop offset="0.2305" stop-color="#4f98ff"/><stop offset="0.2461" stop-color="#6198ff"/><stop offset="0.2617" stop-color="#7398ff"/><stop offset="0.2773" stop-color="#8698ff"/><stop offset="0.293" stop-color="#9898ff"/><stop offset="0.3086" stop-color="#aa98ff"/><stop offset="0.3242" stop-color="#bc98ff"/><stop offset="0.3398" stop-color="#cd98ff"/><stop offset="0.3555" stop-color="#dd98ff"/><stop offset="0.3711" stop-color="#eb98ff"/><stop offset="0.3867" stop-color="#f798ff"/><stop offset="0.4023" stop-color="#ff98ff"/><stop offset="0.418" stop-color="#ff8ffa"/><stop offset="0.4336" stop-color="#ff85f0"/><stop offset="0.4492" stop-color="#ff7ce6"/><stop offset="0.4648" stop-color="#ff73da"/><stop offset="0.4805" stop-color="#ff6ccf"/><stop offset="0.4961" stop-color="#ff65c4"/><stop offset="0.5117" stop-color="#ff5eb9"/><stop offset="0.5273" stop-color="#ff58af"/><stop offset="0.543" stop-color="#ff53a6"/><stop offset="0.5586" stop-color="#ff4d9d"/><stop offset="0.5742" stop-color="#ff4994"/><stop offset="0.5898" stop-color="#ff448c"/><stop offset="0.6055" stop-color="#ff4084"/><stop offset="0.6211" stop-color="#ff3c7c"/><stop offset="0.6367" stop-color="#ff3975"/><stop offset="0.6523" stop-color="#ff366f"/><stop offset="0.668" stop-color="#ff3269"/><stop offset="0.6836" stop-color="#ff2f63"/><stop offset="0.6992" stop-color="#ff2d5d"/><stop offset="0.7148" stop-color="#ff2a58"/><stop offset="0.7305" stop-color="#ff2853"/><stop offset="0.7461" stop-color="#ff254e"/></linearGradient>
<linearGradient id="g87" href="#gb"><stop offset="0.05859" stop-color="#0192ff"/><stop offset="0.07422" stop-color="#0192ff"/><stop offset="0.08984" stop-color="#0192ff"/><stop offset="0.1055" stop-color="#0192ff"/><stop offset="0.1211" stop-color="#0192ff"/><stop offset="0.1367" stop-color="#0192ff"/><stop offset="0.1523" stop-color="#0192ff"/><stop offset="0.168" stop-color="#0d92ff"/><stop offset="0.1836" stop-color="#1c91ff"/><stop offset="0.1992" stop-color="#2d91ff"/><stop offset="0.2148" stop-color="#3d91ff"/><stop offset="0.2305" stop-color="#4f91ff"/><stop offset="0.2461" stop-color="#6191ff"/><stop offset="0.2617" stop-color="#7391ff"/><stop offset="0.2773" stop-color="#8591ff"/><stop offset="0.293" stop-color="#9791ff"/><stop offset="0.3086" stop-color="#a991ff"/><stop offset="0.3242" stop-color="#bb91ff"/><stop offset="0.3398" stop-color="#cc91ff"/><stop offset="0.3555" stop-color="#db91ff"/><stop offset="0.3711" stop-color="#ea91ff"/><stop offset="0.3867" stop-color="#f690ff"/><stop offset="0.4023" stop-color="#fe90ff"/><stop offset="0.418" stop-color="#ff88fb"/><stop offset="0.4336" stop-color="#ff7ff2"/><stop offset="0.4492" stop-color="#ff76e7"/><stop offset="0.4648" stop-color="#ff6edc"/><stop offset="0.4805" stop-color="#ff66d1"/><stop offset="0.4961" stop-color="#ff5fc6"/><stop offset="0.5117" stop-color="#ff59bc"/><stop offset="0.5273" stop-color="#ff53b1"/><stop offset="0.543" stop-color="#ff4ea8"/><stop offset="0.5586" stop-color="#ff499f"/><stop offset="0.5742" stop-color="#ff4496"/><stop offset="0.5898" stop-color="#ff408e"/><stop offset="0.6055" stop-color="#ff3c86"/><stop offset="0.6211" stop-color="#ff397e"/><stop offset="0.6367" stop-color="#ff3577"/><stop offset="0.6523" stop-color="#ff3271"/><stop offset="0.668" stop-color="#ff2f6b"/><stop offset="0.6836" stop-color="#ff2c65"/><stop offset="0.6992" stop-color="#ff295f"/><stop offset="0.7148" stop-color="#ff275a"/><stop offset="0.7305" stop-color="#ff2554"/></linearGradient>
<linearGradient id="g88" href="#gb"><stop offset="0.0625" stop-color="#018cff"/><stop offset="0.07812" stop-color="#018cff"/><stop offset="0.09375" stop-color="#018cff"/><stop offset="0.1094" stop-color="#018cff"/><stop offset="0.125" stop-color="#018cff"/><stop offset="0.1406" stop-color="#018cff"/><stop offset="0.1562" stop-color="#048bff"/><stop offset="0.1719" stop-color="#118bff"/><stop offset="0.1875" stop-color="#218bff"/><stop offset="0.2031" stop-color="#318bff"/><stop offset="0.2188" stop-color="#428bff"/><stop offset="0.2344" stop-color="#538bff"/><stop offset="0.25" stop-color="#658aff"/><stop offset="0.2656" stop-color="#778aff"/><stop offset="0.2812" stop-color="#898aff"/><stop offset="0.2969" stop-color="#9b8aff"/><stop offset="0.3125" stop-color="#ad8aff"/><stop offset="0.3281" stop-color="#be89ff"/><stop offset="0.3438" stop-color="#ce89ff"/><stop offset="0.3594" stop-color="#de89ff"/><stop offset="0.375" stop-color="#ec89ff"/><stop offset="0.3906" stop-color="#f789ff"/><stop offset="0.4062" stop-color="#ff88ff"/><stop offset="0.4219" stop-color="#ff7ffa"/><stop offset="0.4375" stop-color="#ff76f1"/><stop offset="0.4531" stop-color="#ff6ee6"/><stop offset="0.4688" stop-color="#ff66db"/><stop offset="0.4844" stop-color="#ff5fd0"/><stop offset="0.5" stop-color="#ff59c5"/><stop offset="0.5156" stop-color="#ff53bb"/><stop offset="0.5312" stop-color="#ff4db1"/><stop offset="0.5469" stop-color="#ff48a8"/><stop offset="0.5625" stop-color="#ff449e"/><stop offset="0.5781" stop-color="#ff3f96"/><stop offset="0.5938" stop-color="#ff3b8e"/><stop offset="0.6094" stop-color="#ff3786"/><stop offset="0.625" stop-color="#ff347f"/><stop offset="0.6406" stop-color="#ff3178"/><stop offset="0.6562" stop-color="#ff2e71"/><stop offset="0.6719" stop-color="#ff2b6b"/><stop offset="0.6875" stop-color="#ff2865"/><stop offset="0.7031" stop-color="#ff265f"/><stop offset="0.7109" stop-color="#ff245d"/></linearGradient>
<linearGradient id="g89" href="#gb"><stop offset="0.0625" stop-color="#0187ff"/><stop offset="0.07812" stop-color="#0186ff"/><stop offset="0.09375" stop-color="#0186ff"/><stop offset="0.1094" stop-color="#0186ff"/><stop offset="0.125" stop-color="#0186ff"/><stop offset="0.1406" stop-color="#0185ff"/><stop offset="0.1562" stop-color="#0585ff"/><stop offset="0.1719" stop-color="#1285ff"/><stop offset="0.1875" stop-color="#2185ff"/><stop offset="0.2031" stop-color="#3184ff"/><stop offset="0.2188" stop-color="#4284ff"/><stop offset="0.2344" stop-color="#5384ff"/><stop offset="0.25" stop-color="#6584ff"/><stop offset="0.2656" stop-color="#7683ff"/><stop offset="0.2812" stop-color="#8883ff"/><stop offset="0.2969" stop-color="#9a83ff"/><stop offset="0.3125" stop-color="#ac82ff"/><stop offset="0.3281" stop-color="#bd82ff"/><stop offset="0.3438" stop-color="#cd82ff"/><stop offset="0.3594" stop-color="#dc81ff"/><stop offset="0.375" stop-color="#ea81ff"/><stop offset="0.3906" stop-color="#f681ff"/><stop offset="0.4062" stop-color="#fe80ff"/><stop offset="0.4219" stop-color="#ff79fb"/><stop offset="0.4375" stop-color="#ff70f2"/><stop offset="0.4531" stop-color="#ff68e8"/><stop offset="0.4688" stop-color="#ff60dd"/><stop offset="0.4844" stop-color="#ff5ad2"/><stop offset="0.5" stop-color="#ff53c7"/><stop offset="0.5156" stop-color="#ff4ebd"/><stop offset="0.5312" stop-color="#ff48b3"/><stop offset="0.5469" stop-color="#ff44aa"/><stop offset="0.5625" stop-color="#ff3fa1"/><stop offset="0.5781" stop-color="#ff3b98"/><stop offset="0.5938" stop-color="#ff3790"/><stop offset="0.6094" stop-color="#ff3488"/><stop offset="0.625" stop-color="#ff3081"/><stop offset="0.6406" stop-color="#ff2d7a"/><stop offset="0.6562" stop-color="#ff2a73"/><stop offset="0.6719" stop-color="#ff276d"/><stop offset="0.6875" stop-color="#ff2567"/><stop offset="0.6953" stop-color="#ff2464"/></linearGradient>
<linearGradient id="g90" href="#gb"><stop offset="0.06641" stop-color="#0181ff"/><stop offset="0.08203" stop-color="#0181ff"/><stop offset="0.09766" stop-color="#0180ff"/><stop offset="0.1133" stop-color="#0180ff"/><stop offset="0.1289" stop-color="#0180ff"/><stop offset="0.1445" stop-color="#017fff"/><stop offset="0.1602" stop-color="#087fff"/><stop offset="0.1758" stop-color="#167fff"/><stop offset="0.1914" stop-color="#257eff"/><stop offset="0.207" stop-color="#357eff"/><stop offset="0.2227" stop-color="#467eff"/><stop offset="0.2383" stop-color="#577dff"/><stop offset="0.2539" stop-color="#697dff"/><stop offset="0.2695" stop-color="#7a7dff"/><stop offset="0.2852" stop-color="#8c7cff"/><stop offset="0.3008" stop-color="#9e7cff"/><stop offset="0.3164" stop-color="#af7bff"/><stop offset="0.332" stop-color="#c07bff"/><stop offset="0.3477" stop-color="#d07aff"/><stop offset="0.3633" stop-color="#df7aff"/><stop offset="0.3789" stop-color="#ec79ff"/><stop offset="0.3945" stop-color="#f779ff"/><stop offset="0.4102" stop-color="#ff78ff"/><stop offset="0.4258" stop-color="#ff70fa"/><stop offset="0.4414" stop-color="#ff68f1"/><stop offset="0.457" stop-color="#ff60e7"/><stop offset="0.4727" stop-color="#ff59dc"/><stop offset="0.4883" stop-color="#ff53d1"/><stop offset="0.5039" stop-color="#ff4dc7"/><stop offset="0.5195" stop-color="#ff47bd"/><stop offset="0.5352" stop-color="#ff43b3"/><stop offset="0.5508" stop-color="#ff3ea9"/><stop offset="0.5664" stop-color="#ff3aa0"/><stop offset="0.582" stop-color="#ff3698"/><stop offset="0.5977" stop-color="#ff3290"/><stop offset="0.6133" stop-color="#ff2f88"/><stop offset="0.6289" stop-color="#ff2c81"/><stop offset="0.6445" stop-color="#ff297a"/><stop offset="0.6602" stop-color="#ff2673"/><stop offset="0.6758" stop-color="#ff236d"/><stop offset="0.6797" stop-color="#ff236c"/></linearGradient>
<linearGradient id="g91" href="#gb"><stop offset="0.06641" stop-color="#017bff"/><stop offset="0.08203" stop-color="#017bff"/><stop offset="0.09766" stop-color="#017bff"/><stop offset="0.1133" stop-color="#017aff"/><stop offset="0.1289" stop-color="#017aff"/><stop offset="0.1445" stop-color="#0179ff"/><stop offset="0.1602" stop-color="#0979ff"/><stop offset="0.1758" stop-color="#1779ff"/><stop offset="0.1914" stop-color="#2678ff"/><stop offset="0.207" stop-color="#3678ff"/><stop offset="0.2227" stop-color="#4677ff"/><stop offset="0.2383" stop-color="#5777ff"/><stop offset="0.2539" stop-color="#6876ff"/><stop offset="0.2695" stop-color="#7a76ff"/><stop offset="0.2852" stop-color="#8b75ff"/><stop offset="0.3008" stop-color="#9d75ff"/><stop offset="0.3164" stop-color="#ae74ff"/><stop offset="0.332" stop-color="#be74ff"/><stop offset="0.3477" stop-color="#ce73ff"/><stop offset="0.3633" stop-color="#dd72ff"/><stop offset="0.3789" stop-color="#eb72ff"/><stop offset="0.3945" stop-color="#f671ff"/><stop offset="0.4102" stop-color="#fe71ff"/><stop offset="0.4258" stop-color="#ff6afb"/><stop offset="0.4414" stop-color="#ff62f3"/><stop offset="0.457" stop-color="#ff5ae9"/><stop offset="0.4727" stop-color="#ff54de"/><stop offset="0.4883" stop-color="#ff4dd3"/><stop offset="0.5039" stop-color="#ff48c9"/><stop offset="0.5195" stop-color="#ff43bf"/><stop offset="0.5352" stop-color="#ff3eb5"/><stop offset="0.5508" stop-color="#ff3aab"/><stop offset="0.5664" stop-color="#ff35a2"/><stop offset="0.582" stop-color="#ff329a"/><stop offset="0.5977" stop-color="#ff2e92"/><stop offset="0.6133" stop-color="#ff2b8a"/><stop offset="0.6289" stop-color="#ff2883"/><stop offset="0.6445" stop-color="#ff257c"/><stop offset="0.6602" stop-color="#ff2375"/><stop offset="0.6641" stop-color="#ff2274"/></linearGradient>
<linearGradient id="g92" href="#gb"><stop offset="0.07031" stop-color="#0176ff"/><stop offset="0.08594" stop-color="#0175ff"/><stop offset="0.1016" stop-color="#0175ff"/><stop offset="0.1172" stop-color="#0174ff"/><stop offset="0.1328" stop-color="#0174ff"/><stop offset="0.1484" stop-color="#0173ff"/><stop offset="0.1641" stop-color="#0d73ff"/><stop offset="0.1797" stop-color="#1b72ff"/><stop offset="0.1953" stop-color="#2a72ff"/><stop offset="0.2109" stop-color="#3a71ff"/><stop offset="0.2266" stop-color="#4a71ff"/><stop offset="0.2422" stop-color="#5b70ff"/><stop offset="0.2578" stop-color="#6c70ff"/><stop offset="0.2734" stop-color="#7e6fff"/><stop offset="0.2891" stop-color="#8f6eff"/><stop offset="0.3047" stop-color="#a06eff"/><stop offset="0.3203" stop-color="#b16dff"/><stop offset="0.3359" stop-color="#c16cff"/><stop offset="0.3516" stop-color="#d16cff"/><stop offset="0.3672" stop-color="#e06bff"/><stop offset="0.3828" stop-color="#ed6aff"/><stop offset="0.3984" stop-color="#f869ff"/><stop offset="0.4141" stop-color="#ff69ff"/><stop offset="0.4297" stop-color="#ff61fa"/><stop offset="0.4453" stop-color="#ff5af2"/><stop offset="0.4609" stop-color="#ff53e8"/><stop offset="0.4766" stop-color="#ff4cdd"/><stop offset="0.4922" stop-color="#ff47d3"/><stop offset="0.5078" stop-color="#ff41c8"/><stop offset="0.5234" stop-color="#ff3dbe"/><stop offset="0.5391" stop-color="#ff38b4"/><stop offset="0.5547" stop-color="#ff34ab"/><stop offset="0.5703" stop-color="#ff30a2"/><stop offset="0.5859" stop-color="#ff2d9a"/><stop offset="0.6016" stop-color="#ff2a92"/><stop offset="0.6172" stop-color="#ff278a"/><stop offset="0.6328" stop-color="#ff2483"/><stop offset="0.6445" stop-color="#ff227e"/></linearGradient>
<linearGradient id="g93" href="#gb"><stop offset="0.07422" stop-color="#0170ff"/><stop offset="0.08984" stop-color="#016fff"/><stop offset="0.1055" stop-color="#016fff"/><stop offset="0.1211" stop-color="#016eff"/><stop offset="0.1367" stop-color="#016eff"/><stop offset="0.1523" stop-color="#046dff"/><stop offset="0.168" stop-color="#106dff"/><stop offset="0.1836" stop-color="#1f6cff"/><stop offset="0.1992" stop-color="#2e6cff"/><stop offset="0.2148" stop-color="#3e6bff"/><stop offset="0.2305" stop-color="#4e6aff"/><stop offset="0.2461" stop-color="#5f6aff"/><stop offset="0.2617" stop-color="#7069ff"/><stop offset="0.2773" stop-color="#8168ff"/><stop offset="0.293" stop-color="#9268ff"/><stop offset="0.3086" stop-color="#a367ff"/><stop offset="0.3242" stop-color="#b466ff"/><stop offset="0.3398" stop-color="#c465ff"/><stop offset="0.3555" stop-color="#d364ff"/><stop offset="0.3711" stop-color="#e264ff"/><stop offset="0.3867" stop-color="#ee63ff"/><stop offset="0.4023" stop-color="#f962ff"/><stop offset="0.418" stop-color="#ff61ff"/><stop offset="0.4336" stop-color="#ff59fa"/><stop offset="0.4492" stop-color="#ff52f1"/><stop offset="0.4648" stop-color="#ff4be7"/><stop offset="0.4805" stop-color="#ff46dc"/><stop offset="0.4961" stop-color="#ff40d2"/><stop offset="0.5117" stop-color="#ff3bc7"/><stop offset="0.5273" stop-color="#ff37be"/><stop offset="0.543" stop-color="#ff33b4"/><stop offset="0.5586" stop-color="#ff2fab"/><stop offset="0.5742" stop-color="#ff2ba2"/><stop offset="0.5898" stop-color="#ff289a"/><stop offset="0.6055" stop-color="#ff2592"/><stop offset="0.6211" stop-color="#ff228a"/><stop offset="0.6289" stop-color="#ff2187"/></linearGradient>
<linearGradient id="g94" href="#gb"><stop offset="0.07422" stop-color="#016aff"/><stop offset="0.08984" stop-color="#016aff"/><stop offset="0.1055" stop-color="#0169ff"/><stop offset="0.1211" stop-color="#0169ff"/><stop offset="0.1367" stop-color="#0168ff"/><stop offset="0.1523" stop-color="#0467ff"/><stop offset="0.168" stop-color="#1167ff"/><stop offset="0.1836" stop-color="#1f66ff"/><stop offset="0.1992" stop-color="#2e65ff"/><stop offset="0.2148" stop-color="#3e65ff"/><stop offset="0.2305" stop-color="#4e64ff"/><stop offset="0.2461" stop-color="#5f63ff"/><stop offset="0.2617" stop-color="#7063ff"/><stop offset="0.2773" stop-color="#8162ff"/><stop offset="0.293" stop-color="#9261ff"/><stop offset="0.3086" stop-color="#a260ff"/><stop offset="0.3242" stop-color="#b35fff"/><stop offset="0.3398" stop-color="#c35eff"/><stop offset="0.3555" stop-color="#d25dff"/><stop offset="0.3711" stop-color="#e05cff"/><stop offset="0.3867" stop-color="#ed5bff"/><stop offset="0.4023" stop-color="#f85aff"/><stop offset="0.418" stop-color="#ff59ff"/><stop offset="0.4336" stop-color="#ff53fb"/><stop offset="0.4492" stop-color="#ff4cf2"/><stop offset="0.4648" stop-color="#ff46e8"/><stop offset="0.4805" stop-color="#ff40de"/><stop offset="0.4961" stop-color="#ff3bd4"/><stop offset="0.5117" stop-color="#ff36c9"/><stop offset="0.5273" stop-color="#ff32bf"/><stop offset="0.543" stop-color="#ff2eb6"/><stop offset="0.5586" stop-color="#ff2aad"/><stop offset="0.5742" stop-color="#ff27a4"/><stop offset="0.5898" stop-color="#ff249c"/><stop offset="0.6055" stop-color="#ff2194"/><stop offset="0.6133" stop-color="#ff2090"/></linearGradient>
<linearGradient id="g95" href="#gb"><stop offset="0.07812" stop-color="#0165ff"/><stop offset="0.09375" stop-color="#0164ff"/><stop offset="0.1094" stop-color="#0164ff"/><stop offset="0.125" stop-color="#0163ff"/><stop offset="0.1406" stop-color="#0162ff"/><stop offset="0.1562" stop-color="#0862ff"/><stop offset="0.1719" stop-color="#1561ff"/><stop offset="0.1875" stop-color="#2360ff"/><stop offset="0.2031" stop-color="#325fff"/><stop offset="0.2188" stop-color="#425fff"/><stop offset="0.2344" stop-color="#525eff"/><stop offset="0.25" stop-color="#635dff"/><stop offset="0.2656" stop-color="#735cff"/><stop offset="0.2812" stop-color="#845bff"/><stop offset="0.2969" stop-color="#955aff"/><stop offset="0.3125" stop-color="#a659ff"/><stop offset="0.3281" stop-color="#b658ff"/><stop offset="0.3438" stop-color="#c557ff"/><stop offset="0.3594" stop-color="#d456ff"/><stop offset="0.375" stop-color="#e255ff"/><stop offset="0.3906" stop-color="#ef54ff"/><stop offset="0.4062" stop-color="#f953ff"/><stop offset="0.4219" stop-color="#ff52ff"/><stop offset="0.4375" stop-color="#ff4bfa"/><stop offset="0.4531" stop-color="#ff44f1"/><stop offset="0.4688" stop-color="#ff3fe7"/><stop offset="0.4844" stop-color="#ff39dd"/><stop offset="0.5" stop-color="#ff35d3"/><stop offset="0.5156" stop-color="#ff30c9"/><stop offset="0.5312" stop-color="#ff2cbf"/><stop offset="0.5469" stop-color="#ff29b5"/><stop offset="0.5625" stop-color="#ff25ac"/><stop offset="0.5781" stop-color="#ff22a4"/><stop offset="0.5938" stop-color="#ff1f9b"/></linearGradient>
<linearGradient id="g96" href="#gb"><stop offset="0.08203" stop-color="#015fff"/><stop offset="0.09766" stop-color="#015fff"/><stop offset="0.1133" stop-color="#015eff"/><stop offset="0.1289" stop-color="#015dff"/><stop offset="0.1445" stop-color="#015cff"/><stop offset="0.1602" stop-color="#0b5cff"/><stop offset="0.1758" stop-color="#195bff"/><stop offset="0.1914" stop-color="#275aff"/><stop offset="0.207" stop-color="#3659ff"/><stop offset="0.2227" stop-color="#4658ff"/><stop offset="0.2383" stop-color="#5657ff"/><stop offset="0.2539" stop-color="#6756ff"/><stop offset="0.2695" stop-color="#7756ff"/><stop offset="0.2852" stop-color="#8855ff"/><stop offset="0.3008" stop-color="#9854ff"/><stop offset="0.3164" stop-color="#a952ff"/><stop offset="0.332" stop-color="#b951ff"/><stop offset="0.3477" stop-color="#c850ff"/><stop offset="0.3633" stop-color="#d74fff"/><stop offset="0.3789" stop-color="#e44eff"/><stop offset="0.3945" stop-color="#f04dff"/><stop offset="0.4102" stop-color="#fa4bff"/><stop offset="0.4258" stop-color="#ff4aff"/><stop offset="0.4414" stop-color="#ff43f9"/><stop offset="0.457" stop-color="#ff3df0"/><stop offset="0.4727" stop-color="#ff38e6"/><stop offset="0.4883" stop-color="#ff33dc"/><stop offset="0.5039" stop-color="#ff2fd2"/><stop offset="0.5195" stop-color="#ff2bc8"/><stop offset="0.5352" stop-color="#ff27be"/><stop offset="0.5508" stop-color="#ff24b5"/><stop offset="0.5664" stop-color="#ff20ac"/><stop offset="0.5781" stop-color="#ff1ea6"/></linearGradient>
<linearGradient id="g97" href="#gb"><stop offset="0.08203" stop-color="#015aff"/><stop offset="0.09766" stop-color="#0159ff"/><stop offset="0.1133" stop-color="#0159ff"/><stop offset="0.1289" stop-color="#0158ff"/><stop offset="0.1445" stop-color="#0157ff"/><stop offset="0.1602" stop-color="#0c56ff"/><stop offset="0.1758" stop-color="#1955ff"/><stop offset="0.1914" stop-color="#2754ff"/><stop offset="0.207" stop-color="#3753ff"/><stop offset="0.2227" stop-color="#4652ff"/><stop offset="0.2383" stop-color="#5651ff"/><stop offset="0.2539" stop-color="#6650ff"/><stop offset="0.2695" stop-color="#774fff"/><stop offset="0.2852" stop-color="#874eff"/><stop offset="0.3008" stop-color="#974dff"/><stop offset="0.3164" stop-color="#a84cff"/><stop offset="0.332" stop-color="#b84bff"/><stop offset="0.3477" stop-color="#c74aff"/><stop offset="0.3633" stop-color="#d648ff"/><stop offset="0.3789" stop-color="#e347ff"/><stop offset="0.3945" stop-color="#ef46ff"/><stop offset="0.4102" stop-color="#f944ff"/><stop offset="0.4258" stop-color="#ff43ff"/><stop offset="0.4414" stop-color="#ff3dfa"/><stop offset="0.457" stop-color="#ff37f2"/><stop offset="0.4727" stop-color="#ff32e8"/><stop offset="0.4883" stop-color="#ff2ede"/><stop offset="0.5039" stop-color="#ff2ad4"/><stop offset="0.5195" stop-color="#ff26ca"/><stop offset="0.5352" stop-color="#ff23c0"/><stop offset="0.5508" stop-color="#ff1fb7"/><stop offset="0.5625" stop-color="#ff1db0"/></linearGradient>
<linearGradient id="g98" href="#gb"><stop offset="0.08594" stop-color="#0155ff"/><stop offset="0.1016" stop-color="#0154ff"/><stop offset="0.1172" stop-color="#0153ff"/><stop offset="0.1328" stop-color="#0152ff"/><stop offset="0.1484" stop-color="#0451ff"/><stop offset="0.1641" stop-color="#0f50ff"/><stop offset="0.1797" stop-color="#1d4fff"/><stop offset="0.1953" stop-color="#2b4eff"/><stop offset="0.2109" stop-color="#3a4dff"/><stop offset="0.2266" stop-color="#4a4cff"/><stop offset="0.2422" stop-color="#5a4bff"/><stop offset="0.2578" stop-color="#6a4aff"/><stop offset="0.2734" stop-color="#7a49ff"/><stop offset="0.2891" stop-color="#8b48ff"/><stop offset="0.3047" stop-color="#9b47ff"/><stop offset="0.3203" stop-color="#ab45ff"/><stop offset="0.3359" stop-color="#ba44ff"/><stop offset="0.3516" stop-color="#c943ff"/><stop offset="0.3672" stop-color="#d841ff"/><stop offset="0.3828" stop-color="#e540ff"/><stop offset="0.3984" stop-color="#f13fff"/><stop offset="0.4141" stop-color="#fa3dff"/><stop offset="0.4297" stop-color="#ff3bff"/><stop offset="0.4453" stop-color="#ff36f9"/><stop offset="0.4609" stop-color="#ff31f1"/><stop offset="0.4766" stop-color="#ff2ce7"/><stop offset="0.4922" stop-color="#ff28dd"/><stop offset="0.5078" stop-color="#ff24d3"/><stop offset="0.5234" stop-color="#ff20c9"/><stop offset="0.5391" stop-color="#ff1dc0"/><stop offset="0.543" stop-color="#ff1dbd"/></linearGradient>
<linearGradient id="g99" href="#gb"><stop offset="0.08984" stop-color="#014fff"/><stop offset="0.1055" stop-color="#014eff"/><stop offset="0.1211" stop-color="#014dff"/><stop offset="0.1367" stop-color="#014cff"/><stop offset="0.1523" stop-color="#074bff"/><stop offset="0.168" stop-color="#134aff"/><stop offset="0.1836" stop-color="#2149ff"/><stop offset="0.1992" stop-color="#2f48ff"/><stop offset="0.2148" stop-color="#3e47ff"/><stop offset="0.2305" stop-color="#4e46ff"/><stop offset="0.2461" stop-color="#5e45ff"/><stop offset="0.2617" stop-color="#6e44ff"/><stop offset="0.2773" stop-color="#7e43ff"/><stop offset="0.293" stop-color="#8e41ff"/><stop offset="0.3086" stop-color="#9e40ff"/><stop offset="0.3242" stop-color="#ae3fff"/><stop offset="0.3398" stop-color="#bd3eff"/><stop offset="0.3555" stop-color="#cc3cff"/><stop offset="0.3711" stop-color="#da3bff"/><stop offset="0.3867" stop-color="#e739ff"/><stop offset="0.4023" stop-color="#f238ff"/><stop offset="0.418" stop-color="#fb36ff"/><stop offset="0.4336" stop-color="#ff34fe"/><stop offset="0.4492" stop-color="#ff2ef8"/><stop offset="0.4648" stop-color="#ff2af0"/><stop offset="0.4805" stop-color="#ff26e6"/><stop offset="0.4961" stop-color="#ff22dc"/><stop offset="0.5117" stop-color="#ff1ed2"/><stop offset="0.5273" stop-color="#ff1bc9"/></linearGradient>
<linearGradient id="g100" href="#gb"><stop offset="0.08984" stop-color="#014aff"/><stop offset="0.1055" stop-color="#0149ff"/><stop offset="0.1211" stop-color="#0148ff"/><stop offset="0.1367" stop-color="#0147ff"/><stop offset="0.1523" stop-color="#0746ff"/><stop offset="0.168" stop-color="#1445ff"/><stop offset="0.1836" stop-color="#2144ff"/><stop offset="0.1992" stop-color="#3043ff"/><stop offset="0.2148" stop-color="#3e42ff"/><stop offset="0.2305" stop-color="#4e41ff"/><stop offset="0.2461" stop-color="#5d3fff"/><stop offset="0.2617" stop-color="#6d3eff"/><stop offset="0.2773" stop-color="#7d3dff"/><stop offset="0.293" stop-color="#8d3cff"/><stop offset="0.3086" stop-color="#9d3aff"/><stop offset="0.3242" stop-color="#ad39ff"/><stop offset="0.3398" stop-color="#bc37ff"/><stop offset="0.3555" stop-color="#cb36ff"/><stop offset="0.3711" stop-color="#d934ff"/><stop offset="0.3867" stop-color="#e633ff"/><stop offset="0.4023" stop-color="#f131ff"/><stop offset="0.418" stop-color="#fa30ff"/><stop offset="0.4336" stop-color="#ff2eff"/><stop offset="0.4492" stop-color="#ff29f9"/><stop offset="0.4648" stop-color="#ff24f1"/><stop offset="0.4805" stop-color="#ff20e8"/><stop offset="0.4961" stop-color="#ff1dde"/><stop offset="0.5117" stop-color="#ff1ad4"/></linearGradient>
<linearGradient id="g101" href="#gb"><stop offset="0.09375" stop-color="#0145ff"/><stop offset="0.1094" stop-color="#0144ff"/><stop offset="0.125" stop-color="#0143ff"/><stop offset="0.1406" stop-color="#0142ff"/><stop offset="0.1562" stop-color="#0b41ff"/><stop offset="0.1719" stop-color="#173fff"/><stop offset="0.1875" stop-color="#253eff"/><stop offset="0.2031" stop-color="#333dff"/><stop offset="0.2188" stop-color="#423cff"/><stop offset="0.2344" stop-color="#523bff"/><stop offset="0.25" stop-color="#6139ff"/><stop offset="0.2656" stop-color="#7138ff"/><stop offset="0.2812" stop-color="#8137ff"/><stop offset="0.2969" stop-color="#9035ff"/><stop offset="0.3125" stop-color="#a034ff"/><stop offset="0.3281" stop-color="#b032ff"/><stop offset="0.3438" stop-color="#bf31ff"/><stop offset="0.3594" stop-color="#cd2fff"/><stop offset="0.375" stop-color="#db2eff"/><stop offset="0.3906" stop-color="#e72cff"/><stop offset="0.4062" stop-color="#f22aff"/><stop offset="0.4219" stop-color="#fb29ff"/><stop offset="0.4375" stop-color="#ff26ff"/><stop offset="0.4531" stop-color="#ff22f9"/><stop offset="0.4688" stop-color="#ff1ef0"/><stop offset="0.4844" stop-color="#ff1be7"/><stop offset="0.4922" stop-color="#ff19e2"/></linearGradient>
<linearGradient id="g102" href="#gb"><stop offset="0.09766" stop-color="#0140ff"/><stop offset="0.1133" stop-color="#013eff"/><stop offset="0.1289" stop-color="#013dff"/><stop offset="0.1445" stop-color="#033cff"/><stop offset="0.1602" stop-color="#0e3bff"/><stop offset="0.1758" stop-color="#1b3aff"/><stop offset="0.1914" stop-color="#2939ff"/><stop offset="0.207" stop-color="#3737ff"/><stop offset="0.2227" stop-color="#4636ff"/><stop offset="0.2383" stop-color="#5535ff"/><stop offset="0.2539" stop-color="#6534ff"/><stop offset="0.2695" stop-color="#7432ff"/><stop offset="0.2852" stop-color="#8431ff"/><stop offset="0.3008" stop-color="#942fff"/><stop offset="0.3164" stop-color="#a32eff"/><stop offset="0.332" stop-color="#b22cff"/><stop offset="0.3477" stop-color="#c12bff"/><stop offset="0.3633" stop-color="#cf29ff"/><stop offset="0.3789" stop-color="#dd27ff"/><stop offset="0.3945" stop-color="#e926ff"/><stop offset="0.4102" stop-color="#f424ff"/><stop offset="0.4258" stop-color="#fc22ff"/><stop offset="0.4414" stop-color="#ff1ffe"/><stop offset="0.457" stop-color="#ff1cf8"/><stop offset="0.4727" stop-color="#ff18ef"/><stop offset="0.4766" stop-color="#ff17ed"/></linearGradient>
<linearGradient id="g103" href="#gb"><stop offset="0.1016" stop-color="#013aff"/><stop offset="0.1172" stop-color="#0139ff"/><stop offset="0.1328" stop-color="#0138ff"/><stop offset="0.1484" stop-color="#0637ff"/><stop offset="0.1641" stop-color="#1236ff"/><stop offset="0.1797" stop-color="#1f34ff"/><stop offset="0.1953" stop-color="#2d33ff"/><stop offset="0.2109" stop-color="#3b32ff"/><stop offset="0.2266" stop-color="#4a31ff"/><stop offset="0.2422" stop-color="#592fff"/><stop offset="0.2578" stop-color="#682eff"/><stop offset="0.2734" stop-color="#782cff"/><stop offset="0.2891" stop-color="#872bff"/><stop offset="0.3047" stop-color="#9729ff"/><stop offset="0.3203" stop-color="#a628ff"/><stop offset="0.3359" stop-color="#b526ff"/><stop offset="0.3516" stop-color="#c424ff"/><stop offset="0.3672" stop-color="#d223ff"/><stop offset="0.3828" stop-color="#df21ff"/><stop offset="0.3984" stop-color="#eb1fff"/><stop offset="0.4141" stop-color="#f51dff"/><stop offset="0.4297" stop-color="#fd1cff"/><stop offset="0.4453" stop-color="#ff19fd"/><stop offset="0.4609" stop-color="#ff15f7"/></linearGradient>
<linearGradient id="g104" href="#gb"><stop offset="0.1016" stop-color="#0136ff"/><stop offset="0.1172" stop-color="#0134ff"/><stop offset="0.1328" stop-color="#0133ff"/><stop offset="0.1484" stop-color="#0632ff"/><stop offset="0.1641" stop-color="#1231ff"/><stop offset="0.1797" stop-color="#1f2fff"/><stop offset="0.1953" stop-color="#2d2eff"/><stop offset="0.2109" stop-color="#3b2dff"/><stop offset="0.2266" stop-color="#4a2bff"/><stop offset="0.2422" stop-color="#592aff"/><stop offset="0.2578" stop-color="#6828ff"/><stop offset="0.2734" stop-color="#7727ff"/><stop offset="0.2891" stop-color="#8725ff"/><stop offset="0.3047" stop-color="#9624ff"/><stop offset="0.3203" stop-color="#a522ff"/><stop offset="0.3359" stop-color="#b421ff"/><stop offset="0.3516" stop-color="#c31fff"/><stop offset="0.3672" stop-color="#d11dff"/><stop offset="0.3828" stop-color="#de1bff"/><stop offset="0.3984" stop-color="#ea1aff"/><stop offset="0.4141" stop-color="#f418ff"/><stop offset="0.4297" stop-color="#fc16ff"/><stop offset="0.4453" stop-color="#ff13fe"/></linearGradient>
<linearGradient id="g105" href="#gb"><stop offset="0.1055" stop-color="#0130ff"/><stop offset="0.1211" stop-color="#012fff"/><stop offset="0.1367" stop-color="#012eff"/><stop offset="0.1523" stop-color="#0a2dff"/><stop offset="0.168" stop-color="#162bff"/><stop offset="0.1836" stop-color="#232aff"/><stop offset="0.1992" stop-color="#3129ff"/><stop offset="0.2148" stop-color="#3f27ff"/><stop offset="0.2305" stop-color="#4d26ff"/><stop offset="0.2461" stop-color="#5c24ff"/><stop offset="0.2617" stop-color="#6b23ff"/><stop offset="0.2773" stop-color="#7b21ff"/><stop offset="0.293" stop-color="#8a20ff"/><stop offset="0.3086" stop-color="#991eff"/><stop offset="0.3242" stop-color="#a81cff"/><stop offset="0.3398" stop-color="#b71bff"/><stop offset="0.3555" stop-color="#c519ff"/><stop offset="0.3711" stop-color="#d317ff"/><stop offset="0.3867" stop-color="#e015ff"/><stop offset="0.4023" stop-color="#eb14ff"/><stop offset="0.418" stop-color="#f512ff"/><stop offset="0.4258" stop-color="#f911ff"/></linearGradient>
<linearGradient id="g106" href="#gb"><stop offset="0.1094" stop-color="#012cff"/><stop offset="0.125" stop-color="#012aff"/><stop offset="0.1406" stop-color="#0229ff"/><stop offset="0.1562" stop-color="#0d28ff"/><stop offset="0.1719" stop-color="#1926ff"/><stop offset="0.1875" stop-color="#2625ff"/><stop offset="0.2031" stop-color="#3423ff"/><stop offset="0.2188" stop-color="#4222ff"/><stop offset="0.2344" stop-color="#5121ff"/><stop offset="0.25" stop-color="#601fff"/><stop offset="0.2656" stop-color="#6f1dff"/><stop offset="0.2812" stop-color="#7e1cff"/><stop offset="0.2969" stop-color="#8d1aff"/><stop offset="0.3125" stop-color="#9c19ff"/><stop offset="0.3281" stop-color="#ab17ff"/><stop offset="0.3438" stop-color="#b915ff"/><stop offset="0.3594" stop-color="#c813ff"/><stop offset="0.375" stop-color="#d512ff"/><stop offset="0.3906" stop-color="#e210ff"/><stop offset="0.4062" stop-color="#ed0eff"/><stop offset="0.4102" stop-color="#ef0dff"/></linearGradient>
<linearGradient id="g107" href="#gb"><stop offset="0.1133" stop-color="#0127ff"/><stop offset="0.1289" stop-color="#0125ff"/><stop offset="0.1445" stop-color="#0524ff"/><stop offset="0.1602" stop-color="#1023ff"/><stop offset="0.1758" stop-color="#1d21ff"/><stop offset="0.1914" stop-color="#2a20ff"/><stop offset="0.207" stop-color="#381eff"/><stop offset="0.2227" stop-color="#461dff"/><stop offset="0.2383" stop-color="#551bff"/><stop offset="0.2539" stop-color="#631aff"/><stop offset="0.2695" stop-color="#7218ff"/><stop offset="0.2852" stop-color="#8117ff"/><stop offset="0.3008" stop-color="#9015ff"/><stop offset="0.3164" stop-color="#9f13ff"/><stop offset="0.332" stop-color="#ae11ff"/><stop offset="0.3477" stop-color="#bc10ff"/><stop offset="0.3633" stop-color="#ca0eff"/><stop offset="0.3789" stop-color="#d70cff"/><stop offset="0.3945" stop-color="#e30aff"/></linearGradient>
<linearGradient id="g108" href="#gb"><stop offset="0.1172" stop-color="#0122ff"/><stop offset="0.1328" stop-color="#0120ff"/><stop offset="0.1484" stop-color="#081fff"/><stop offset="0.1641" stop-color="#141eff"/><stop offset="0.1797" stop-color="#201cff"/><stop offset="0.1953" stop-color="#2e1bff"/><stop offset="0.2109" stop-color="#3b19ff"/><stop offset="0.2266" stop-color="#4a18ff"/><stop offset="0.2422" stop-color="#5816ff"/><stop offset="0.2578" stop-color="#6715ff"/><stop offset="0.2734" stop-color="#7613ff"/><stop offset="0.2891" stop-color="#8411ff"/><stop offset="0.3047" stop-color="#9310ff"/><stop offset="0.3203" stop-color="#a20eff"/><stop offset="0.3359" stop-color="#b00cff"/><stop offset="0.3516" stop-color="#be0bff"/><stop offset="0.3672" stop-color="#cc09ff"/><stop offset="0.375" stop-color="#d308ff"/></linearGradient>
<linearGradient id="g109" href="#gb"><stop offset="0.1211" stop-color="#011dff"/><stop offset="0.1367" stop-color="#011cff"/><stop offset="0.1523" stop-color="#0b1aff"/><stop offset="0.168" stop-color="#1719ff"/><stop offset="0.1836" stop-color="#2417ff"/><stop offset="0.1992" stop-color="#3116ff"/><stop offset="0.2148" stop-color="#3f14ff"/><stop offset="0.2305" stop-color="#4d13ff"/><stop offset="0.2461" stop-color="#5c11ff"/><stop offset="0.2617" stop-color="#6a10ff"/><stop offset="0.2773" stop-color="#790eff"/><stop offset="0.293" stop-color="#870cff"/><stop offset="0.3086" stop-color="#960bff"/><stop offset="0.3242" stop-color="#a509ff"/><stop offset="0.3398" stop-color="#b307ff"/><stop offset="0.3555" stop-color="#c106ff"/><stop offset="0.3594" stop-color="#c405ff"/></linearGradient>
<linearGradient id="g110" href="#gb"><stop offset="0.125" stop-color="#0118ff"/><stop offset="0.1406" stop-color="#0417ff"/><stop offset="0.1562" stop-color="#0f16ff"/><stop offset="0.1719" stop-color="#1b14ff"/><stop offset="0.1875" stop-color="#2713ff"/><stop offset="0.2031" stop-color="#3511ff"/><stop offset="0.2188" stop-color="#4310ff"/><stop offset="0.2344" stop-color="#510eff"/><stop offset="0.25" stop-color="#5f0dff"/><stop offset="0.2656" stop-color="#6d0bff"/><stop offset="0.2812" stop-color="#7c09ff"/><stop offset="0.2969" stop-color="#8b08ff"/><stop offset="0.3125" stop-color="#9906ff"/><stop offset="0.3281" stop-color="#a705ff"/><stop offset="0.3438" stop-color="#b603ff"/></linearGradient>
<linearGradient id="g111" href="#gb"><stop offset="0.1289" stop-color="#0114ff"/><stop offset="0.1445" stop-color="#0713ff"/><stop offset="0.1602" stop-color="#1211ff"/><stop offset="0.1758" stop-color="#1e10ff"/><stop offset="0.1914" stop-color="#2b0eff"/><stop offset="0.207" stop-color="#380dff"/><stop offset="0.2227" stop-color="#460bff"/><stop offset="0.2383" stop-color="#540aff"/><stop offset="0.2539" stop-color="#6208ff"/><stop offset="0.2695" stop-color="#7106ff"/><stop offset="0.2852" stop-color="#7f05ff"/><stop offset="0.3008" stop-color="#8e03ff"/><stop offset="0.3164" stop-color="#9c02ff"/><stop offset="0.3242" stop-color="#a301ff"/></linearGradient>
<linearGradient id="g112" href="#gb"><stop offset="0.1328" stop-color="#0110ff"/><stop offset="0.1484" stop-color="#0a0eff"/><stop offset="0.1641" stop-color="#150dff"/><stop offset="0.1797" stop-color="#220bff"/><stop offset="0.1953" stop-color="#2e0aff"/><stop offset="0.2109" stop-color="#3c08ff"/><stop offset="0.2266" stop-color="#4907ff"/><stop offset="0.2422" stop-color="#5705ff"/><stop offset="0.2578" stop-color="#6604ff"/><stop offset="0.2734" stop-color="#7403ff"/><stop offset="0.2891" stop-color="#8201ff"/><stop offset="0.3047" stop-color="#9101ff"/><stop offset="0.3086" stop-color="#9401ff"/></linearGradient>
<linearGradient id="g113" href="#gb"><stop offset="0.1406" stop-color="#050bff"/><stop offset="0.1562" stop-color="#100aff"/><stop offset="0.1719" stop-color="#1c08ff"/><stop offset="0.1875" stop-color="#2807ff"/><stop offset="0.2031" stop-color="#3505ff"/><stop offset="0.2188" stop-color="#4304ff"/><stop offset="0.2344" stop-color="#5003ff"/><stop offset="0.25" stop-color="#5e01ff"/><stop offset="0.2656" stop-color="#6c01ff"/><stop offset="0.2812" stop-color="#7b01ff"/><stop offset="0.293" stop-color="#8501ff"/></linearGradient>
<linearGradient id="g114" href="#gb"><stop offset="0.1445" stop-color="#0807ff"/><stop offset="0.1602" stop-color="#1306ff"/><stop offset="0.1758" stop-color="#1f04ff"/><stop offset="0.1914" stop-color="#2c03ff"/><stop offset="0.207" stop-color="#3902ff"/><stop offset="0.2227" stop-color="#4601ff"/><stop offset="0.2383" stop-color="#5401ff"/><stop offset="0.2539" stop-color="#6201ff"/><stop offset="0.2695" stop-color="#7001ff"/><stop offset="0.2734" stop-color="#7301ff"/></linearGradient>
<linearGradient id="g115" href="#gb"><stop offset="0.1523" stop-color="#0e03ff"/><stop offset="0.168" stop-color="#1902ff"/><stop offset="0.1836" stop-color="#2601ff"/><stop offset="0.1992" stop-color="#3201ff"/><stop offset="0.2148" stop-color="#3f01ff"/><stop offset="0.2305" stop-color="#4d01ff"/><stop offset="0.2461" stop-color="#5a01ff"/><stop offset="0.2578" stop-color="#6501ff"/></linearGradient>
<linearGradient id="g116" href="#gb"><stop offset="0.1602" stop-color="#1401ff"/><stop offset="0.1758" stop-color="#2001ff"/><stop offset="0.1914" stop-color="#2c01ff"/><stop offset="0.207" stop-color="#3901ff"/><stop offset="0.2227" stop-color="#4601ff"/><stop offset="0.2383" stop-color="#5301ff"/><stop offset="0.2422" stop-color="#5701ff"/></linearGradient>
<linearGradient id="g117" href="#gb"><stop offset="0.168" stop-color="#1a01ff"/><stop offset="0.1836" stop-color="#2601ff"/><stop offset="0.1992" stop-color="#3301ff"/><stop offset="0.2148" stop-color="#3f01ff"/><stop offset="0.2266" stop-color="#4901ff"/></linearGradient>
<linearGradient id="g118" href="#gb"><stop offset="0.1758" stop-color="#2001ff"/><stop offset="0.1914" stop-color="#2c01ff"/><stop offset="0.207" stop-color="#3901ff"/></linearGradient>
<clipPath id="lc"><path d="M49.9 255.5 L49.8 255.6 L49.7 255.6 L49.6 255.6 L49.5 255.6 L49.3 255.6 L49.2 255.6 L49.1 255.6 L49.0 255.6 L49.0 255.6 L48.8 255.6 L48.5 255.5 L48.3 255.4 L48.1 255.3 L47.9 255.2 L47.7 255.0 L47.4 254.8 L47.1 254.5 L46.7 254.2 L46.4 253.9 L46.1 253.6 L45.9 253.4 L45.6 253.2 L45.4 253.0 L45.2 252.8 L44.9 252.6 L44.6 252.3 L44.2 252.0 L43.9 251.7 L43.5 251.4 L43.1 251.1 L42.7 250.7 L42.3 250.3 L41.8 249.8 L41.3 249.4 L40.8 248.8 L40.2 248.2 L39.7 247.6 L39.1 246.9 L38.4 246.2 L37.7 245.2 L37.0 244.2 L36.2 243.0 L35.3 241.6 L34.4 240.0 L33.5 238.3 L32.5 236.4 L31.4 234.2 L30.3 231.7 L29.1 228.9 L27.8 225.8 L26.4 222.4 L25.0 218.6 L23.5 214.4 L21.9 209.8 L20.2 204.7 L18.6 199.2 L16.9 193.1 L15.2 186.6 L13.6 179.7 L11.9 172.3 L10.3 164.4 L8.7 156.1 L7.1 147.5 L5.7 138.8 L4.4 129.9 L3.2 120.8 L2.2 111.8 L1.3 102.9 L0.7 94.3 L0.3 85.8 L0.1 77.6 L0.1 69.7 L0.4 62.3 L1.0 55.1 L1.9 48.4 L3.0 42.4 L4.4 37.0 L6.1 32.1 L8.1 27.9 L10.3 24.4 L12.7 21.7 L15.3 19.8 L18.1 18.6 L21.0 17.8 L23.9 17.7 L26.9 18.2 L29.9 19.0 L32.8 20.1 L35.8 21.2 L38.7 22.7 L41.7 24.3 L44.5 25.9 L47.3 27.5 L50.0 29.3 L52.8 31.0 L55.4 32.9 L58.1 34.7 L60.7 36.7 L63.3 38.6 L65.9 40.7 L68.5 42.7 L71.1 44.9 L73.7 47.0 L76.3 49.2 L78.8 51.5 L81.4 53.7 L83.9 56.0 L86.5 58.3 L89.0 60.7 L91.5 63.1 L94.1 65.4 L96.6 67.9 L99.2 70.3 L101.7 72.7 L104.3 75.2 L106.8 77.6 L109.4 80.1 L111.9 82.6 L114.4 85.1 L117.0 87.6 L119.5 90.1 L122.0 92.6 L124.5 95.0 L127.0 97.5 L129.5 100.0 L132.0 102.4 L134.5 104.9 L136.9 107.3 L139.3 109.7 L141.7 112.1 L144.1 114.5 L146.5 116.9 L148.8 119.2 L151.1 121.5 L153.4 123.8 L155.7 126.0 L157.9 128.2 L160.1 130.4 L162.2 132.5 L164.3 134.6 L166.4 136.7 L168.4 138.7 L170.3 140.6 L172.2 142.5 L174.0 144.3 L175.7 146.0 L177.4 147.7 L179.1 149.3 L180.6 150.9 L182.2 152.5 L183.7 153.9 L185.1 155.3 L186.4 156.7 L187.7 157.9 L188.9 159.1 L190.1 160.3 L191.2 161.4 L192.2 162.4 L193.2 163.4 L194.2 164.4 L195.0 165.2 L195.7 165.9 L196.5 166.7 L197.4 167.6 L198.5 168.7 L199.7 169.9 L201.0 171.1 L202.1 172.2 L203.0 173.2 L203.8 174.0 L204.6 174.7 L205.2 175.4 L205.8 176.0 L206.3 176.4 L206.7 176.9 L207.2 177.4 L207.9 178.0 L208.6 178.7 L209.2 179.4 L209.4 181.4Z"/></clipPath>
<filter id="sf" x="-5%" y="-5%" width="110%" height="110%"><feGaussianBlur stdDeviation="0.9"/></filter><filter id="sf2" x="-5%" y="-5%" width="110%" height="110%"><feGaussianBlur stdDeviation="0.55"/></filter>
</defs>
<rect width="256" height="256" fill="#e1e1e1"/>
<g fill="#000" fill-opacity="0.19" shape-rendering="crispEdges"><rect x="28" y="0" width="1" height="256"/><rect x="0" y="227" width="256" height="1"/><rect x="56" y="0" width="1" height="256"/><rect x="0" y="199" width="256" height="1"/><rect x="85" y="0" width="1" height="256"/><rect x="0" y="170" width="256" height="1"/><rect x="113" y="0" width="1" height="256"/><rect x="0" y="142" width="256" height="1"/><rect x="142" y="0" width="1" height="256"/><rect x="0" y="113" width="256" height="1"/><rect x="170" y="0" width="1" height="256"/><rect x="0" y="85" width="256" height="1"/><rect x="198" y="0" width="1" height="256"/><rect x="0" y="57" width="256" height="1"/><rect x="227" y="0" width="1" height="256"/><rect x="0" y="28" width="256" height="1"/></g>
<path d="M49.9 255.5 L49.8 255.6 L49.7 255.6 L49.6 255.6 L49.5 255.6 L49.3 255.6 L49.2 255.6 L49.1 255.6 L49.0 255.6 L49.0 255.6 L48.8 255.6 L48.5 255.5 L48.3 255.4 L48.1 255.3 L47.9 255.2 L47.7 255.0 L47.4 254.8 L47.1 254.5 L46.7 254.2 L46.4 253.9 L46.1 253.6 L45.9 253.4 L45.6 253.2 L45.4 253.0 L45.2 252.8 L44.9 252.6 L44.6 252.3 L44.2 252.0 L43.9 251.7 L43.5 251.4 L43.1 251.1 L42.7 250.7 L42.3 250.3 L41.8 249.8 L41.3 249.4 L40.8 248.8 L40.2 248.2 L39.7 247.6 L39.1 246.9 L38.4 246.2 L37.7 245.2 L37.0 244.2 L36.2 243.0 L35.3 241.6 L34.4 240.0 L33.5 238.3 L32.5 236.4 L31.4 234.2 L30.3 231.7 L29.1 228.9 L27.8 225.8 L26.4 222.4 L25.0 218.6 L23.5 214.4 L21.9 209.8 L20.2 204.7 L18.6 199.2 L16.9 193.1 L15.2 186.6 L13.6 179.7 L11.9 172.3 L10.3 164.4 L8.7 156.1 L7.1 147.5 L5.7 138.8 L4.4 129.9 L3.2 120.8 L2.2 111.8 L1.3 102.9 L0.7 94.3 L0.3 85.8 L0.1 77.6 L0.1 69.7 L0.4 62.3 L1.0 55.1 L1.9 48.4 L3.0 42.4 L4.4 37.0 L6.1 32.1 L8.1 27.9 L10.3 24.4 L12.7 21.7 L15.3 19.8 L18.1 18.6 L21.0 17.8 L23.9 17.7 L26.9 18.2 L29.9 19.0 L32.8 20.1 L35.8 21.2 L38.7 22.7 L41.7 24.3 L44.5 25.9 L47.3 27.5 L50.0 29.3 L52.8 31.0 L55.4 32.9 L58.1 34.7 L60.7 36.7 L63.3 38.6 L65.9 40.7 L68.5 42.7 L71.1 44.9 L73.7 47.0 L76.3 49.2 L78.8 51.5 L81.4 53.7 L83.9 56.0 L86.5 58.3 L89.0 60.7 L91.5 63.1 L94.1 65.4 L96.6 67.9 L99.2 70.3 L101.7 72.7 L104.3 75.2 L106.8 77.6 L109.4 80.1 L111.9 82.6 L114.4 85.1 L117.0 87.6 L119.5 90.1 L122.0 92.6 L124.5 95.0 L127.0 97.5 L129.5 100.0 L132.0 102.4 L134.5 104.9 L136.9 107.3 L139.3 109.7 L141.7 112.1 L144.1 114.5 L146.5 116.9 L148.8 119.2 L151.1 121.5 L153.4 123.8 L155.7 126.0 L157.9 128.2 L160.1 130.4 L162.2 132.5 L164.3 134.6 L166.4 136.7 L168.4 138.7 L170.3 140.6 L172.2 142.5 L174.0 144.3 L175.7 146.0 L177.4 147.7 L179.1 149.3 L180.6 150.9 L182.2 152.5 L183.7 153.9 L185.1 155.3 L186.4 156.7 L187.7 157.9 L188.9 159.1 L190.1 160.3 L191.2 161.4 L192.2 162.4 L193.2 163.4 L194.2 164.4 L195.0 165.2 L195.7 165.9 L196.5 166.7 L197.4 167.6 L198.5 168.7 L199.7 169.9 L201.0 171.1 L202.1 172.2 L203.0 173.2 L203.8 174.0 L204.6 174.7 L205.2 175.4 L205.8 176.0 L206.3 176.4 L206.7 176.9 L207.2 177.4 L207.9 178.0 L208.6 178.7 L209.2 179.4 L209.4 181.4Z" fill="#fff" fill-opacity=".6" stroke="#fff" stroke-opacity=".55" stroke-width="2" stroke-linejoin="round" filter="url(#sf)"/>
<g filter="url(#sf2)"><g clip-path="url(#lc)">
<rect x="15" y="18" width="17" height="2" fill="url(#g0)"/>
<rect x="12" y="20" width="25" height="2" fill="url(#g1)"/>
<rect x="9" y="22" width="33" height="2" fill="url(#g2)"/>
<rect x="8" y="24" width="37" height="2" fill="url(#g3)"/>
<rect x="7" y="26" width="42" height="2" fill="url(#g4)"/>
<rect x="6" y="28" width="46" height="2" fill="url(#g5)"/>
<rect x="5" y="30" width="50" height="2" fill="url(#g6)"/>
<rect x="4" y="32" width="54" height="2" fill="url(#g7)"/>
<rect x="3" y="34" width="58" height="2" fill="url(#g8)"/>
<rect x="3" y="36" width="60" height="2" fill="url(#g9)"/>
<rect x="2" y="38" width="64" height="2" fill="url(#g10)"/>
<rect x="2" y="40" width="67" height="2" fill="url(#g11)"/>
<rect x="1" y="42" width="70" height="2" fill="url(#g12)"/>
<rect x="1" y="44" width="72" height="2" fill="url(#g13)"/>
<rect x="0" y="46" width="76" height="2" fill="url(#g14)"/>
<rect x="0" y="48" width="78" height="2" fill="url(#g15)"/>
<rect x="0" y="50" width="80" height="2" fill="url(#g16)"/>
<rect x="0" y="52" width="83" height="2" fill="url(#g17)"/>
<rect x="0" y="54" width="85" height="2" fill="url(#g18)"/>
<rect x="0" y="56" width="87" height="2" fill="url(#g19)"/>
<rect x="0" y="58" width="89" height="2" fill="url(#g20)"/>
<rect x="0" y="60" width="91" height="2" fill="url(#g21)"/>
<rect x="0" y="62" width="94" height="2" fill="url(#g22)"/>
<rect x="0" y="64" width="96" height="2" fill="url(#g23)"/>
<rect x="0" y="66" width="98" height="2" fill="url(#g24)"/>
<rect x="0" y="68" width="100" height="2" fill="url(#g25)"/>
<rect x="0" y="70" width="102" height="2" fill="url(#g26)"/>
<rect x="0" y="72" width="104" height="2" fill="url(#g27)"/>
<rect x="0" y="74" width="106" height="2" fill="url(#g28)"/>
<rect x="0" y="76" width="108" height="2" fill="url(#g29)"/>
<rect x="0" y="78" width="110" height="2" fill="url(#g30)"/>
<rect x="0" y="80" width="112" height="2" fill="url(#g31)"/>
<rect x="0" y="82" width="114" height="2" fill="url(#g32)"/>
<rect x="0" y="84" width="116" height="2" fill="url(#g33)"/>
<rect x="0" y="86" width="118" height="2" fill="url(#g34)"/>
<rect x="0" y="88" width="120" height="2" fill="url(#g35)"/>
<rect x="0" y="90" width="123" height="2" fill="url(#g36)"/>
<rect x="0" y="92" width="125" height="2" fill="url(#g37)"/>
<rect x="0" y="94" width="127" height="2" fill="url(#g38)"/>
<rect x="0" y="96" width="129" height="2" fill="url(#g39)"/>
<rect x="0" y="98" width="131" height="2" fill="url(#g40)"/>
<rect x="0" y="100" width="133" height="2" fill="url(#g41)"/>
<rect x="0" y="102" width="135" height="2" fill="url(#g42)"/>
<rect x="0" y="104" width="137" height="2" fill="url(#g43)"/>
<rect x="0" y="106" width="139" height="2" fill="url(#g44)"/>
<rect x="0" y="108" width="141" height="2" fill="url(#g45)"/>
<rect x="1" y="110" width="142" height="2" fill="url(#g46)"/>
<rect x="1" y="112" width="144" height="2" fill="url(#g47)"/>
<rect x="1" y="114" width="146" height="2" fill="url(#g48)"/>
<rect x="1" y="116" width="148" height="2" fill="url(#g49)"/>
<rect x="1" y="118" width="150" height="2" fill="url(#g50)"/>
<rect x="2" y="120" width="151" height="2" fill="url(#g51)"/>
<rect x="2" y="122" width="153" height="2" fill="url(#g52)"/>
<rect x="2" y="124" width="155" height="2" fill="url(#g53)"/>
<rect x="2" y="126" width="157" height="2" fill="url(#g54)"/>
<rect x="3" y="128" width="158" height="2" fill="url(#g55)"/>
<rect x="3" y="130" width="160" height="2" fill="url(#g56)"/>
<rect x="3" y="132" width="162" height="2" fill="url(#g57)"/>
<rect x="4" y="134" width="163" height="2" fill="url(#g58)"/>
<rect x="4" y="136" width="165" height="2" fill="url(#g59)"/>
<rect x="4" y="138" width="167" height="2" fill="url(#g60)"/>
<rect x="4" y="140" width="169" height="2" fill="url(#g61)"/>
<rect x="5" y="142" width="170" height="2" fill="url(#g62)"/>
<rect x="5" y="144" width="172" height="2" fill="url(#g63)"/>
<rect x="5" y="146" width="174" height="2" fill="url(#g64)"/>
<rect x="6" y="148" width="175" height="2" fill="url(#g65)"/>
<rect x="6" y="150" width="177" height="2" fill="url(#g66)"/>
<rect x="6" y="152" width="179" height="2" fill="url(#g67)"/>
<rect x="7" y="154" width="180" height="2" fill="url(#g68)"/>
<rect x="7" y="156" width="182" height="2" fill="url(#g69)"/>
<rect x="8" y="158" width="183" height="2" fill="url(#g70)"/>
<rect x="8" y="160" width="185" height="2" fill="url(#g71)"/>
<rect x="8" y="162" width="187" height="2" fill="url(#g72)"/>
<rect x="9" y="164" width="188" height="2" fill="url(#g73)"/>
<rect x="9" y="166" width="190" height="2" fill="url(#g74)"/>
<rect x="10" y="168" width="191" height="2" fill="url(#g75)"/>
<rect x="10" y="170" width="193" height="2" fill="url(#g76)"/>
<rect x="10" y="172" width="195" height="2" fill="url(#g77)"/>
<rect x="11" y="174" width="196" height="2" fill="url(#g78)"/>
<rect x="11" y="176" width="198" height="2" fill="url(#g79)"/>
<rect x="12" y="178" width="199" height="2" fill="url(#g80)"/>
<rect x="12" y="180" width="199" height="2" fill="url(#g81)"/>
<rect x="13" y="182" width="195" height="2" fill="url(#g82)"/>
<rect x="13" y="184" width="191" height="2" fill="url(#g83)"/>
<rect x="14" y="186" width="186" height="2" fill="url(#g84)"/>
<rect x="14" y="188" width="181" height="2" fill="url(#g85)"/>
<rect x="15" y="190" width="176" height="2" fill="url(#g86)"/>
<rect x="15" y="192" width="172" height="2" fill="url(#g87)"/>
<rect x="16" y="194" width="166" height="2" fill="url(#g88)"/>
<rect x="16" y="196" width="162" height="2" fill="url(#g89)"/>
<rect x="17" y="198" width="157" height="2" fill="url(#g90)"/>
<rect x="17" y="200" width="153" height="2" fill="url(#g91)"/>
<rect x="18" y="202" width="147" height="2" fill="url(#g92)"/>
<rect x="19" y="204" width="142" height="2" fill="url(#g93)"/>
<rect x="19" y="206" width="138" height="2" fill="url(#g94)"/>
<rect x="20" y="208" width="132" height="2" fill="url(#g95)"/>
<rect x="21" y="210" width="127" height="2" fill="url(#g96)"/>
<rect x="21" y="212" width="123" height="2" fill="url(#g97)"/>
<rect x="22" y="214" width="117" height="2" fill="url(#g98)"/>
<rect x="23" y="216" width="112" height="2" fill="url(#g99)"/>
<rect x="23" y="218" width="108" height="2" fill="url(#g100)"/>
<rect x="24" y="220" width="102" height="2" fill="url(#g101)"/>
<rect x="25" y="222" width="97" height="2" fill="url(#g102)"/>
<rect x="26" y="224" width="92" height="2" fill="url(#g103)"/>
<rect x="26" y="226" width="88" height="2" fill="url(#g104)"/>
<rect x="27" y="228" width="82" height="2" fill="url(#g105)"/>
<rect x="28" y="230" width="77" height="2" fill="url(#g106)"/>
<rect x="29" y="232" width="72" height="2" fill="url(#g107)"/>
<rect x="30" y="234" width="66" height="2" fill="url(#g108)"/>
<rect x="31" y="236" width="61" height="2" fill="url(#g109)"/>
<rect x="32" y="238" width="56" height="2" fill="url(#g110)"/>
<rect x="33" y="240" width="50" height="2" fill="url(#g111)"/>
<rect x="34" y="242" width="45" height="2" fill="url(#g112)"/>
<rect x="36" y="244" width="39" height="2" fill="url(#g113)"/>
<rect x="37" y="246" width="33" height="2" fill="url(#g114)"/>
<rect x="39" y="248" width="27" height="2" fill="url(#g115)"/>
<rect x="41" y="250" width="21" height="2" fill="url(#g116)"/>
<rect x="43" y="252" width="15" height="2" fill="url(#g117)"/>
<rect x="45" y="254" width="8" height="2" fill="url(#g118)"/>
</g></g>
<g fill="#000" fill-opacity="0.13" shape-rendering="crispEdges" clip-path="url(#lc)"><rect x="28" y="0" width="1" height="256"/><rect x="0" y="227" width="256" height="1"/><rect x="56" y="0" width="1" height="256"/><rect x="0" y="199" width="256" height="1"/><rect x="85" y="0" width="1" height="256"/><rect x="0" y="170" width="256" height="1"/><rect x="113" y="0" width="1" height="256"/><rect x="0" y="142" width="256" height="1"/><rect x="142" y="0" width="1" height="256"/><rect x="0" y="113" width="256" height="1"/><rect x="170" y="0" width="1" height="256"/><rect x="0" y="85" width="256" height="1"/><rect x="198" y="0" width="1" height="256"/><rect x="0" y="57" width="256" height="1"/><rect x="227" y="0" width="1" height="256"/><rect x="0" y="28" width="256" height="1"/></g>
<polygon points="70.2,96.0 125.5,112.6 176.0,159.7 146.0,183.0 60.7,210.1 44.0,180.6" fill="none" stroke="#fff" stroke-opacity=".85" stroke-width="1.1"/>
<polygon points="91.3,84.9 179.5,162.2 44.0,237.6" fill="none" stroke="#c48a4c" stroke-width="1.25"/>
<polygon points="80.6,69.7 182.6,164.6 41.0,241.0" fill="none" stroke="#000" stroke-width="1"/>
<g font-family="Liberation Sans, sans-serif" font-size="8" fill="#0a0a0a" stroke="#0a0a0a" stroke-width=".2" stroke-opacity=".6"><text x="2.8" y="7.9">y</text><text x="248.8" y="253">x</text><text x="3.2" y="253">0</text><text x="56.4" y="253" text-anchor="middle">0.2</text><text x="2.5" y="201.3">0.2</text><text x="113.3" y="253" text-anchor="middle">0.4</text><text x="2.5" y="144.4">0.4</text><text x="170.2" y="253" text-anchor="middle">0.6</text><text x="2.5" y="87.5">0.6</text><text x="227.1" y="253" text-anchor="middle">0.8</text><text x="2.5" y="30.6">0.8</text></g>
<g font-family="Liberation Sans, sans-serif" font-size="10"><text x="173" y="54.7" fill="#000">Monitor</text><text x="173.2" y="68.4" fill="#dfa169" textLength="23.6" lengthAdjust="spacingAndGlyphs">sRGB</text><text x="173.6" y="81.4" fill="#fff" textLength="45" lengthAdjust="spacingAndGlyphs">ISOcoated</text></g>
<rect x=".5" y=".5" width="255" height="255" fill="none" stroke="#000" stroke-width="1"/>
</svg>
<svg id="bars" width="256" height="256" viewBox="0 0 256 256">
<defs><linearGradient id="bg" x1="0" y1="0" x2="0" y2="1">
<stop offset="0.0000" stop-color="#df4616"/>
<stop offset="0.0824" stop-color="#e86617"/>
<stop offset="0.1765" stop-color="#ee9017"/>
<stop offset="0.2706" stop-color="#f0b818"/>
<stop offset="0.3647" stop-color="#f0e019"/>
<stop offset="0.4588" stop-color="#e0ee18"/>
<stop offset="0.5451" stop-color="#c4e218"/>
<stop offset="0.6392" stop-color="#a0cc18"/>
<stop offset="0.7333" stop-color="#7cb418"/>
<stop offset="0.8745" stop-color="#569e18"/>
<stop offset="1.0000" stop-color="#3a8c16"/>
</linearGradient></defs>
<rect width="256" height="256" fill="url(#bg)"/>
<rect x="37" y="59" width="219" height="1" fill="#400" fill-opacity=".11"/>
<rect x="37" y="110" width="219" height="1" fill="#400" fill-opacity=".11"/>
<rect x="37" y="161" width="219" height="1" fill="#400" fill-opacity=".11"/>
<rect x="37" y="212" width="219" height="1" fill="#400" fill-opacity=".11"/>
<g font-family="Liberation Sans, sans-serif" font-size="8" fill="#1c0a00" stroke="#1c0a00" stroke-width=".25" stroke-opacity=".6"><text x="2.3" y="7.8">10 d E 94</text><text x="2.3" y="61.8">8 d E 94</text><text x="2.3" y="112.8">6 d E 94</text><text x="2.3" y="163.8">4 d E 94</text><text x="2.3" y="214.8">2 d E 94</text></g>
<rect x="45.5" y="152.5" width="9" height="104" fill="#383838" stroke="#000" stroke-width="1"/>
<rect x="57.5" y="118.5" width="9" height="138" fill="#4a4a4a" stroke="#000" stroke-width="1"/>
<rect x="69.5" y="111.5" width="9" height="145" fill="#888888" stroke="#000" stroke-width="1"/>
<rect x="81.5" y="180.5" width="9" height="76" fill="#c8c8c8" stroke="#000" stroke-width="1"/>
<rect x="105.5" y="49.5" width="9" height="207" fill="#ff0000" stroke="#000" stroke-width="1"/>
<rect x="117.5" y="0.5" width="9" height="256" fill="#00ff00" stroke="#000" stroke-width="1"/>
<rect x="129.5" y="0.5" width="9" height="256" fill="#0000ff" stroke="#000" stroke-width="1"/>
<rect x="141.5" y="0.5" width="9" height="256" fill="#00ffff" stroke="#000" stroke-width="1"/>
<rect x="153.5" y="26.5" width="9" height="230" fill="#ff00ff" stroke="#000" stroke-width="1"/>
<rect x="165.5" y="41.5" width="9" height="215" fill="#ffff00" stroke="#000" stroke-width="1"/>
<rect x="177.5" y="80.5" width="9" height="176" fill="#b45858" stroke="#000" stroke-width="1"/>
<rect x="189.5" y="64.5" width="9" height="192" fill="#52aa58" stroke="#000" stroke-width="1"/>
<rect x="201.5" y="26.5" width="9" height="230" fill="#5656ae" stroke="#000" stroke-width="1"/>
<rect x="213.5" y="121.5" width="9" height="135" fill="#52a8aa" stroke="#000" stroke-width="1"/>
<rect x="225.5" y="31.5" width="9" height="225" fill="#b056b2" stroke="#000" stroke-width="1"/>
<rect x="237.5" y="0.5" width="9" height="256" fill="#b0aa56" stroke="#000" stroke-width="1"/>
<rect x=".5" y=".5" width="255" height="255" fill="none" stroke="#000" stroke-width="1"/>
</svg>
<div class="t" style="left:136px;top:378px">Target</div>
<div class="t" style="left:200px;top:378px">Current</div>
<div class="t" style="left:264px;top:378px">Deviation</div>
<div class="t" style="left:72px;top:393px">Gamma</div>
<div class="t" style="left:136px;top:393px">2.2</div>
<div class="t o" style="left:200px;top:393px">1.9</div>
<div class="t o" style="left:264px;top:393px">14%</div>
<div class="t" style="left:72px;top:408px">Kelvin</div>
<div class="t" style="left:136px;top:408px">6500</div>
<div class="t o" style="left:200px;top:408px">16096</div>
<div class="t o" style="left:264px;top:408px">148%</div>
<div class="t" style="left:72px;top:423px">cd/m2</div>
<div class="t" style="left:136px;top:423px">90</div>
<div class="t o" style="left:200px;top:423px">436</div>
<div class="t o" style="left:264px;top:423px">384%</div>
<div class="t" style="left:348px;top:378px">Delta E Average</div><div class="t o" style="left:459px;top:378px">13.4</div>
<div class="t" style="left:348px;top:393px">Delta E Maximum</div><div class="t o" style="left:459px;top:393px">82.0</div>
<div class="btn" style="left:25px">Main Menu</div>
<div class="btn" style="left:110px">Calibration</div>
<div class="btn" style="left:491px">Save</div>
<div class="btn" style="left:576px">Quit</div>
</body></html>
